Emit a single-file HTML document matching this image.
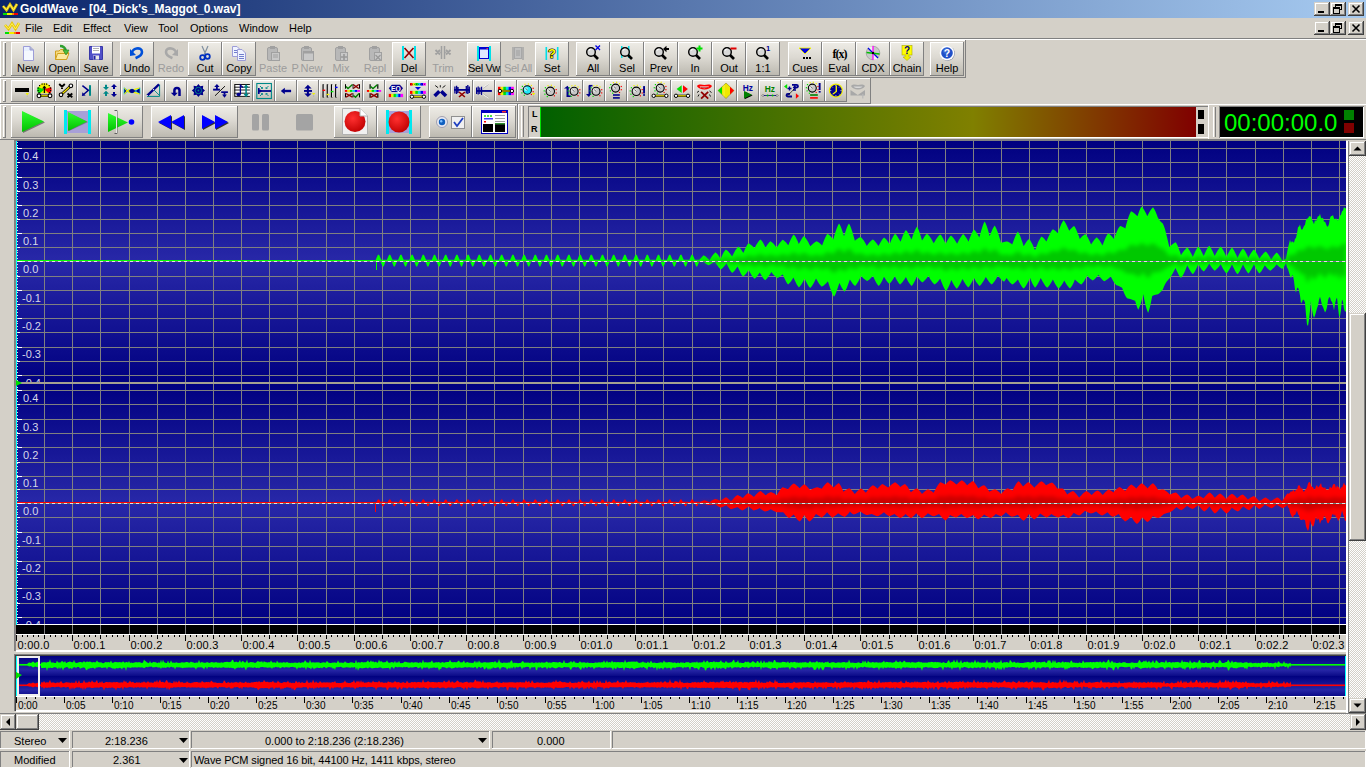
<!DOCTYPE html><html><head><meta charset="utf-8"><style>
*{margin:0;padding:0;box-sizing:border-box}
html,body{width:1366px;height:768px;overflow:hidden;background:#d4d0c8;font-family:"Liberation Sans",sans-serif;font-size:11px;color:#000}
.a{position:absolute}
.t{position:absolute;white-space:nowrap;line-height:1}
svg{position:absolute;overflow:visible}
</style></head><body>
<svg class="a" style="left:0;top:0" width="1366" height="768" viewBox="0 0 1366 768"><defs>
<linearGradient id="bg1" x1="0" y1="0" x2="0" y2="1">
<stop offset="0" stop-color="#000080"/><stop offset="0.5" stop-color="#2828a8"/><stop offset="1" stop-color="#000080"/></linearGradient>
<linearGradient id="ov" x1="0" y1="0" x2="0" y2="1">
<stop offset="0" stop-color="#000080"/><stop offset="0.65" stop-color="#2828a8"/><stop offset="1" stop-color="#000080"/></linearGradient>
<filter id="bl" x="-5%" y="-30%" width="110%" height="160%"><feGaussianBlur stdDeviation="2.2"/></filter>
</defs><rect x="14" y="140" width="1" height="511" fill="#808080"/><rect x="15" y="140" width="1" height="511" fill="#8c8484"/><rect x="14" y="140" width="1332" height="1" fill="#808080"/><rect x="16" y="141" width="1330" height="242" fill="url(#bg1)"/><rect x="16" y="383" width="1330" height="242" fill="url(#bg1)"/><rect x="17" y="148" width="1329" height="1" fill="#808080"/><rect x="17" y="162" width="1329" height="1" fill="#808080"/><rect x="17" y="177" width="1329" height="1" fill="#808080"/><rect x="17" y="191" width="1329" height="1" fill="#808080"/><rect x="17" y="205" width="1329" height="1" fill="#808080"/><rect x="17" y="219" width="1329" height="1" fill="#808080"/><rect x="17" y="233" width="1329" height="1" fill="#808080"/><rect x="17" y="247" width="1329" height="1" fill="#808080"/><rect x="17" y="261" width="1329" height="1" fill="#808080"/><rect x="17" y="276" width="1329" height="1" fill="#808080"/><rect x="17" y="290" width="1329" height="1" fill="#808080"/><rect x="17" y="304" width="1329" height="1" fill="#808080"/><rect x="17" y="318" width="1329" height="1" fill="#808080"/><rect x="17" y="332" width="1329" height="1" fill="#808080"/><rect x="17" y="347" width="1329" height="1" fill="#808080"/><rect x="17" y="361" width="1329" height="1" fill="#808080"/><rect x="17" y="375" width="1329" height="1" fill="#808080"/><rect x="17" y="390" width="1329" height="1" fill="#808080"/><rect x="17" y="404" width="1329" height="1" fill="#808080"/><rect x="17" y="419" width="1329" height="1" fill="#808080"/><rect x="17" y="433" width="1329" height="1" fill="#808080"/><rect x="17" y="447" width="1329" height="1" fill="#808080"/><rect x="17" y="462" width="1329" height="1" fill="#808080"/><rect x="17" y="476" width="1329" height="1" fill="#808080"/><rect x="17" y="489" width="1329" height="1" fill="#808080"/><rect x="17" y="503" width="1329" height="1" fill="#808080"/><rect x="17" y="517" width="1329" height="1" fill="#808080"/><rect x="17" y="532" width="1329" height="1" fill="#808080"/><rect x="17" y="546" width="1329" height="1" fill="#808080"/><rect x="17" y="561" width="1329" height="1" fill="#808080"/><rect x="17" y="574" width="1329" height="1" fill="#808080"/><rect x="17" y="588" width="1329" height="1" fill="#808080"/><rect x="17" y="603" width="1329" height="1" fill="#808080"/><rect x="17" y="617" width="1329" height="1" fill="#808080"/><rect x="16" y="625" width="1330" height="9" fill="#000000"/><rect x="44" y="141" width="1" height="493" fill="#808080"/><rect x="72" y="141" width="1" height="493" fill="#808080"/><rect x="100" y="141" width="1" height="493" fill="#808080"/><rect x="129" y="141" width="1" height="493" fill="#808080"/><rect x="157" y="141" width="1" height="493" fill="#808080"/><rect x="185" y="141" width="1" height="493" fill="#808080"/><rect x="213" y="141" width="1" height="493" fill="#808080"/><rect x="241" y="141" width="1" height="493" fill="#808080"/><rect x="269" y="141" width="1" height="493" fill="#808080"/><rect x="297" y="141" width="1" height="493" fill="#808080"/><rect x="326" y="141" width="1" height="493" fill="#808080"/><rect x="354" y="141" width="1" height="493" fill="#808080"/><rect x="382" y="141" width="1" height="493" fill="#808080"/><rect x="410" y="141" width="1" height="493" fill="#808080"/><rect x="438" y="141" width="1" height="493" fill="#808080"/><rect x="466" y="141" width="1" height="493" fill="#808080"/><rect x="494" y="141" width="1" height="493" fill="#808080"/><rect x="523" y="141" width="1" height="493" fill="#808080"/><rect x="551" y="141" width="1" height="493" fill="#808080"/><rect x="579" y="141" width="1" height="493" fill="#808080"/><rect x="607" y="141" width="1" height="493" fill="#808080"/><rect x="635" y="141" width="1" height="493" fill="#808080"/><rect x="663" y="141" width="1" height="493" fill="#808080"/><rect x="692" y="141" width="1" height="493" fill="#808080"/><rect x="720" y="141" width="1" height="493" fill="#808080"/><rect x="748" y="141" width="1" height="493" fill="#808080"/><rect x="776" y="141" width="1" height="493" fill="#808080"/><rect x="804" y="141" width="1" height="493" fill="#808080"/><rect x="832" y="141" width="1" height="493" fill="#808080"/><rect x="860" y="141" width="1" height="493" fill="#808080"/><rect x="889" y="141" width="1" height="493" fill="#808080"/><rect x="917" y="141" width="1" height="493" fill="#808080"/><rect x="945" y="141" width="1" height="493" fill="#808080"/><rect x="973" y="141" width="1" height="493" fill="#808080"/><rect x="1001" y="141" width="1" height="493" fill="#808080"/><rect x="1029" y="141" width="1" height="493" fill="#808080"/><rect x="1058" y="141" width="1" height="493" fill="#808080"/><rect x="1086" y="141" width="1" height="493" fill="#808080"/><rect x="1114" y="141" width="1" height="493" fill="#808080"/><rect x="1142" y="141" width="1" height="493" fill="#808080"/><rect x="1170" y="141" width="1" height="493" fill="#808080"/><rect x="1198" y="141" width="1" height="493" fill="#808080"/><rect x="1226" y="141" width="1" height="493" fill="#808080"/><rect x="1255" y="141" width="1" height="493" fill="#808080"/><rect x="1283" y="141" width="1" height="493" fill="#808080"/><rect x="1311" y="141" width="1" height="493" fill="#808080"/><rect x="1339" y="141" width="1" height="493" fill="#808080"/><rect x="16" y="382" width="1330" height="2" fill="#a4a090"/><rect x="16" y="624" width="1330" height="1" fill="#ffffff"/><rect x="17" y="260" width="686" height="1.2" fill="#00ff00"/><rect x="17" y="502" width="686" height="1.2" fill="#ff0000"/><polygon points="375.0,261.5 377.9,254.8 379.1,254.8 382.0,261.5" fill="#00ff00"/><polygon points="379.8,259.7 382.6,266.6 383.6,266.6 386.4,259.7" fill="#00ff00"/><polygon points="386.2,261.5 389.1,254.8 390.3,254.8 393.2,261.5" fill="#00ff00"/><polygon points="391.0,259.7 393.8,266.6 394.8,266.6 397.6,259.7" fill="#00ff00"/><polygon points="397.4,261.5 400.3,254.8 401.5,254.8 404.4,261.5" fill="#00ff00"/><polygon points="402.2,259.7 405.0,266.6 406.0,266.6 408.8,259.7" fill="#00ff00"/><polygon points="408.6,261.5 411.5,254.8 412.7,254.8 415.6,261.5" fill="#00ff00"/><polygon points="413.4,259.7 416.2,266.6 417.2,266.6 420.0,259.7" fill="#00ff00"/><polygon points="419.8,261.5 422.7,254.8 423.9,254.8 426.8,261.5" fill="#00ff00"/><polygon points="424.6,259.7 427.4,266.6 428.4,266.6 431.2,259.7" fill="#00ff00"/><polygon points="431.0,261.5 433.9,254.8 435.1,254.8 438.0,261.5" fill="#00ff00"/><polygon points="435.8,259.7 438.6,266.6 439.6,266.6 442.4,259.7" fill="#00ff00"/><polygon points="442.2,261.5 445.1,254.8 446.3,254.8 449.2,261.5" fill="#00ff00"/><polygon points="447.0,259.7 449.8,266.6 450.8,266.6 453.6,259.7" fill="#00ff00"/><polygon points="453.4,261.5 456.3,254.8 457.5,254.8 460.4,261.5" fill="#00ff00"/><polygon points="458.2,259.7 461.0,266.6 462.0,266.6 464.8,259.7" fill="#00ff00"/><polygon points="464.6,261.5 467.5,254.8 468.7,254.8 471.6,261.5" fill="#00ff00"/><polygon points="469.4,259.7 472.2,266.6 473.2,266.6 476.0,259.7" fill="#00ff00"/><polygon points="475.8,261.5 478.7,254.8 479.9,254.8 482.8,261.5" fill="#00ff00"/><polygon points="480.6,259.7 483.4,266.6 484.4,266.6 487.2,259.7" fill="#00ff00"/><polygon points="487.0,261.5 489.9,254.8 491.1,254.8 494.0,261.5" fill="#00ff00"/><polygon points="491.8,259.7 494.6,266.6 495.6,266.6 498.4,259.7" fill="#00ff00"/><polygon points="498.2,261.5 501.1,254.8 502.3,254.8 505.2,261.5" fill="#00ff00"/><polygon points="503.0,259.7 505.8,266.6 506.8,266.6 509.6,259.7" fill="#00ff00"/><polygon points="509.4,261.5 512.3,254.8 513.5,254.8 516.4,261.5" fill="#00ff00"/><polygon points="514.2,259.7 517.0,266.6 518.0,266.6 520.8,259.7" fill="#00ff00"/><polygon points="520.6,261.5 523.5,254.8 524.7,254.8 527.6,261.5" fill="#00ff00"/><polygon points="525.4,259.7 528.2,266.6 529.2,266.6 532.0,259.7" fill="#00ff00"/><polygon points="531.8,261.5 534.7,254.8 535.9,254.8 538.8,261.5" fill="#00ff00"/><polygon points="536.6,259.7 539.4,266.6 540.4,266.6 543.2,259.7" fill="#00ff00"/><polygon points="543.0,261.5 545.9,254.8 547.1,254.8 550.0,261.5" fill="#00ff00"/><polygon points="547.8,259.7 550.6,266.6 551.6,266.6 554.4,259.7" fill="#00ff00"/><polygon points="554.2,261.5 557.1,254.8 558.3,254.8 561.2,261.5" fill="#00ff00"/><polygon points="559.0,259.7 561.8,266.6 562.8,266.6 565.6,259.7" fill="#00ff00"/><polygon points="565.4,261.5 568.3,254.8 569.5,254.8 572.4,261.5" fill="#00ff00"/><polygon points="570.2,259.7 573.0,266.6 574.0,266.6 576.8,259.7" fill="#00ff00"/><polygon points="576.6,261.5 579.5,254.8 580.7,254.8 583.6,261.5" fill="#00ff00"/><polygon points="581.4,259.7 584.2,266.6 585.2,266.6 588.0,259.7" fill="#00ff00"/><polygon points="587.8,261.5 590.7,254.8 591.9,254.8 594.8,261.5" fill="#00ff00"/><polygon points="592.6,259.7 595.4,266.6 596.4,266.6 599.2,259.7" fill="#00ff00"/><polygon points="599.0,261.5 601.9,254.8 603.1,254.8 606.0,261.5" fill="#00ff00"/><polygon points="603.8,259.7 606.6,266.6 607.6,266.6 610.4,259.7" fill="#00ff00"/><polygon points="610.2,261.5 613.1,254.8 614.3,254.8 617.2,261.5" fill="#00ff00"/><polygon points="615.0,259.7 617.8,266.6 618.8,266.6 621.6,259.7" fill="#00ff00"/><polygon points="621.4,261.5 624.3,254.8 625.5,254.8 628.4,261.5" fill="#00ff00"/><polygon points="626.2,259.7 629.0,266.6 630.0,266.6 632.8,259.7" fill="#00ff00"/><polygon points="632.6,261.5 635.5,254.8 636.7,254.8 639.6,261.5" fill="#00ff00"/><polygon points="637.4,259.7 640.2,266.6 641.2,266.6 644.0,259.7" fill="#00ff00"/><polygon points="643.8,261.5 646.7,254.8 647.9,254.8 650.8,261.5" fill="#00ff00"/><polygon points="648.6,259.7 651.4,266.6 652.4,266.6 655.2,259.7" fill="#00ff00"/><polygon points="655.0,261.5 657.9,254.8 659.1,254.8 662.0,261.5" fill="#00ff00"/><polygon points="659.8,259.7 662.6,266.6 663.6,266.6 666.4,259.7" fill="#00ff00"/><polygon points="666.2,261.5 669.1,254.8 670.3,254.8 673.2,261.5" fill="#00ff00"/><polygon points="671.0,259.7 673.8,266.6 674.8,266.6 677.6,259.7" fill="#00ff00"/><polygon points="677.4,261.5 680.3,254.8 681.5,254.8 684.4,261.5" fill="#00ff00"/><polygon points="682.2,259.7 685.0,266.6 686.0,266.6 688.8,259.7" fill="#00ff00"/><polygon points="688.6,261.5 691.5,254.8 692.7,254.8 695.6,261.5" fill="#00ff00"/><polygon points="693.4,259.7 696.2,266.6 697.2,266.6 700.0,259.7" fill="#00ff00"/><polygon points="375.5,503.5 377.9,499.6 379.1,499.6 381.5,503.5" fill="#ff0000"/><polygon points="380.3,501.7 382.6,506.2 383.6,506.2 385.9,501.7" fill="#ff0000"/><polygon points="386.7,503.5 389.1,499.6 390.3,499.6 392.7,503.5" fill="#ff0000"/><polygon points="391.5,501.7 393.8,506.2 394.8,506.2 397.1,501.7" fill="#ff0000"/><polygon points="397.9,503.5 400.3,499.6 401.5,499.6 403.9,503.5" fill="#ff0000"/><polygon points="402.7,501.7 405.0,506.2 406.0,506.2 408.3,501.7" fill="#ff0000"/><polygon points="409.1,503.5 411.5,499.6 412.7,499.6 415.1,503.5" fill="#ff0000"/><polygon points="413.9,501.7 416.2,506.2 417.2,506.2 419.5,501.7" fill="#ff0000"/><polygon points="420.3,503.5 422.7,499.6 423.9,499.6 426.3,503.5" fill="#ff0000"/><polygon points="425.1,501.7 427.4,506.2 428.4,506.2 430.7,501.7" fill="#ff0000"/><polygon points="431.5,503.5 433.9,499.6 435.1,499.6 437.5,503.5" fill="#ff0000"/><polygon points="436.3,501.7 438.6,506.2 439.6,506.2 441.9,501.7" fill="#ff0000"/><polygon points="442.7,503.5 445.1,499.6 446.3,499.6 448.7,503.5" fill="#ff0000"/><polygon points="447.5,501.7 449.8,506.2 450.8,506.2 453.1,501.7" fill="#ff0000"/><polygon points="453.9,503.5 456.3,499.6 457.5,499.6 459.9,503.5" fill="#ff0000"/><polygon points="458.7,501.7 461.0,506.2 462.0,506.2 464.3,501.7" fill="#ff0000"/><polygon points="465.1,503.5 467.5,499.6 468.7,499.6 471.1,503.5" fill="#ff0000"/><polygon points="469.9,501.7 472.2,506.2 473.2,506.2 475.5,501.7" fill="#ff0000"/><polygon points="476.3,503.5 478.7,499.6 479.9,499.6 482.3,503.5" fill="#ff0000"/><polygon points="481.1,501.7 483.4,506.2 484.4,506.2 486.7,501.7" fill="#ff0000"/><polygon points="487.5,503.5 489.9,499.6 491.1,499.6 493.5,503.5" fill="#ff0000"/><polygon points="492.3,501.7 494.6,506.2 495.6,506.2 497.9,501.7" fill="#ff0000"/><polygon points="498.7,503.5 501.1,499.6 502.3,499.6 504.7,503.5" fill="#ff0000"/><polygon points="503.5,501.7 505.8,506.2 506.8,506.2 509.1,501.7" fill="#ff0000"/><polygon points="509.9,503.5 512.3,499.6 513.5,499.6 515.9,503.5" fill="#ff0000"/><polygon points="514.7,501.7 517.0,506.2 518.0,506.2 520.3,501.7" fill="#ff0000"/><polygon points="521.1,503.5 523.5,499.6 524.7,499.6 527.1,503.5" fill="#ff0000"/><polygon points="525.9,501.7 528.2,506.2 529.2,506.2 531.5,501.7" fill="#ff0000"/><polygon points="532.3,503.5 534.7,499.6 535.9,499.6 538.3,503.5" fill="#ff0000"/><polygon points="537.1,501.7 539.4,506.2 540.4,506.2 542.7,501.7" fill="#ff0000"/><polygon points="543.5,503.5 545.9,499.6 547.1,499.6 549.5,503.5" fill="#ff0000"/><polygon points="548.3,501.7 550.6,506.2 551.6,506.2 553.9,501.7" fill="#ff0000"/><polygon points="554.7,503.5 557.1,499.6 558.3,499.6 560.7,503.5" fill="#ff0000"/><polygon points="559.5,501.7 561.8,506.2 562.8,506.2 565.1,501.7" fill="#ff0000"/><polygon points="565.9,503.5 568.3,499.6 569.5,499.6 571.9,503.5" fill="#ff0000"/><polygon points="570.7,501.7 573.0,506.2 574.0,506.2 576.3,501.7" fill="#ff0000"/><polygon points="577.1,503.5 579.5,499.6 580.7,499.6 583.1,503.5" fill="#ff0000"/><polygon points="581.9,501.7 584.2,506.2 585.2,506.2 587.5,501.7" fill="#ff0000"/><polygon points="588.3,503.5 590.7,499.6 591.9,499.6 594.3,503.5" fill="#ff0000"/><polygon points="593.1,501.7 595.4,506.2 596.4,506.2 598.7,501.7" fill="#ff0000"/><polygon points="599.5,503.5 601.9,499.6 603.1,499.6 605.5,503.5" fill="#ff0000"/><polygon points="604.3,501.7 606.6,506.2 607.6,506.2 609.9,501.7" fill="#ff0000"/><polygon points="610.7,503.5 613.1,499.6 614.3,499.6 616.7,503.5" fill="#ff0000"/><polygon points="615.5,501.7 617.8,506.2 618.8,506.2 621.1,501.7" fill="#ff0000"/><polygon points="621.9,503.5 624.3,499.6 625.5,499.6 627.9,503.5" fill="#ff0000"/><polygon points="626.7,501.7 629.0,506.2 630.0,506.2 632.3,501.7" fill="#ff0000"/><polygon points="633.1,503.5 635.5,499.6 636.7,499.6 639.1,503.5" fill="#ff0000"/><polygon points="637.9,501.7 640.2,506.2 641.2,506.2 643.5,501.7" fill="#ff0000"/><polygon points="644.3,503.5 646.7,499.6 647.9,499.6 650.3,503.5" fill="#ff0000"/><polygon points="649.1,501.7 651.4,506.2 652.4,506.2 654.7,501.7" fill="#ff0000"/><polygon points="655.5,503.5 657.9,499.6 659.1,499.6 661.5,503.5" fill="#ff0000"/><polygon points="660.3,501.7 662.6,506.2 663.6,506.2 665.9,501.7" fill="#ff0000"/><polygon points="666.7,503.5 669.1,499.6 670.3,499.6 672.7,503.5" fill="#ff0000"/><polygon points="671.5,501.7 673.8,506.2 674.8,506.2 677.1,501.7" fill="#ff0000"/><polygon points="677.9,503.5 680.3,499.6 681.5,499.6 683.9,503.5" fill="#ff0000"/><polygon points="682.7,501.7 685.0,506.2 686.0,506.2 688.3,501.7" fill="#ff0000"/><polygon points="689.1,503.5 691.5,499.6 692.7,499.6 695.1,503.5" fill="#ff0000"/><polygon points="693.9,501.7 696.2,506.2 697.2,506.2 699.5,501.7" fill="#ff0000"/><rect x="376" y="261" width="1" height="9" fill="#00ff00"/><rect x="375" y="503" width="1" height="9" fill="#ff0000"/><polygon points="699.0,260.2 703.6,255.2 704.8,255.9 706.0,256.8 707.1,257.9 708.3,259.1 709.5,260.4 710.5,258.7 711.5,257.1 712.5,255.6 713.5,254.3 714.5,253.2 715.5,252.3 716.5,253.2 717.6,254.3 718.6,255.7 719.6,257.3 720.6,258.9 721.7,256.5 722.7,254.3 723.7,252.3 724.8,250.7 725.8,249.4 726.8,250.2 727.9,251.1 728.9,252.3 730.0,253.6 731.0,255.0 732.1,256.4 733.1,254.4 734.2,252.4 735.2,250.6 736.3,249.0 737.3,247.7 738.4,246.6 739.4,247.4 740.4,248.5 741.4,249.9 742.4,251.4 743.4,252.9 744.4,250.5 745.4,248.3 746.4,246.2 747.4,244.6 748.4,243.3 749.4,243.8 750.4,244.5 751.4,245.2 752.4,246.1 753.4,247.0 754.5,248.0 755.5,246.2 756.5,244.5 757.5,242.9 758.5,241.5 759.5,240.3 760.5,239.4 761.5,240.5 762.5,241.8 763.5,243.5 764.5,245.4 765.5,247.4 766.5,245.9 767.5,244.4 768.5,243.2 769.5,242.1 770.5,241.3 771.5,242.0 772.5,242.8 773.6,243.8 774.6,245.0 775.6,246.2 776.6,247.5 777.7,245.9 778.7,244.4 779.7,242.9 780.8,241.7 781.8,240.6 782.8,239.8 783.9,240.5 785.0,241.5 786.1,242.6 787.2,243.9 788.3,245.2 789.4,242.5 790.5,240.0 791.6,237.7 792.7,235.8 793.8,234.4 794.8,235.7 795.8,237.3 796.8,239.4 797.8,241.6 798.8,244.0 799.9,242.0 800.9,240.2 801.9,238.5 802.9,237.1 803.9,236.1 805.0,237.2 806.0,238.6 807.1,240.2 808.2,242.1 809.3,244.2 810.3,246.3 811.4,245.2 812.5,244.2 813.6,243.3 814.6,242.5 815.7,241.8 816.8,241.3 817.9,241.9 818.9,242.6 820.0,243.5 821.1,244.4 822.1,245.5 823.2,242.6 824.3,239.8 825.4,237.3 826.4,235.3 827.5,233.7 828.6,234.5 829.8,235.5 831.0,236.7 832.1,238.1 833.2,239.6 834.4,235.6 835.5,231.7 836.7,228.4 837.9,225.5 839.0,223.4 840.0,225.1 841.0,227.3 842.0,230.0 843.0,233.0 844.0,236.2 845.0,233.0 846.0,230.0 847.0,227.3 848.0,225.1 849.0,223.4 850.2,225.7 851.3,228.7 852.5,232.3 853.7,236.4 854.9,240.7 856.0,239.8 857.2,238.9 858.4,238.1 859.5,237.5 860.7,237.0 861.7,238.0 862.7,239.2 863.8,240.6 864.8,242.3 865.8,244.1 866.8,246.0 867.8,244.6 868.8,243.3 869.8,242.1 870.9,241.0 871.9,240.1 872.9,239.4 874.0,240.3 875.1,241.5 876.3,242.9 877.4,244.4 878.5,246.1 879.6,244.0 880.7,241.9 881.9,240.1 883.0,238.6 884.1,237.5 885.2,238.4 886.3,239.6 887.4,241.0 888.5,242.6 889.6,244.2 890.7,241.6 891.8,239.1 892.9,236.9 894.0,235.1 895.1,233.7 896.2,234.8 897.3,236.2 898.3,237.9 899.4,239.8 900.5,241.8 901.6,238.9 902.7,236.1 903.7,233.7 904.8,231.6 905.9,230.1 907.0,231.3 908.1,233.0 909.2,234.9 910.3,237.1 911.5,239.4 912.6,236.2 913.7,233.2 914.8,230.5 915.9,228.2 917.0,226.5 918.0,228.4 919.0,230.8 920.0,233.8 921.0,237.1 922.0,240.6 923.1,238.9 924.1,237.3 925.1,235.8 926.1,234.6 927.1,233.7 928.2,234.7 929.3,236.0 930.4,237.6 931.5,239.3 932.6,241.2 933.7,243.2 934.8,241.4 935.9,239.6 937.0,238.0 938.1,236.5 939.2,235.3 940.3,234.4 941.4,235.6 942.4,237.3 943.5,239.2 944.6,241.5 945.6,243.8 946.7,241.7 947.8,239.8 948.9,238.0 949.9,236.6 951.0,235.5 952.0,236.4 953.0,237.5 954.0,238.8 955.1,240.4 956.1,242.0 957.1,243.7 958.1,241.7 959.1,239.8 960.2,238.0 961.2,236.4 962.2,235.1 963.2,234.1 964.3,235.1 965.3,236.4 966.4,238.0 967.5,239.8 968.5,241.7 969.6,238.6 970.7,235.7 971.8,233.2 972.8,231.0 973.9,229.4 975.0,230.5 976.1,231.9 977.1,233.6 978.2,235.5 979.3,237.5 980.4,233.5 981.5,229.8 982.5,226.4 983.6,223.6 984.7,221.5 985.7,223.4 986.7,226.0 987.7,229.1 988.7,232.6 989.7,236.2 990.7,233.6 991.7,231.0 992.7,228.8 993.7,226.9 994.7,225.5 995.8,227.4 996.8,229.7 997.9,232.5 998.9,235.7 1000.0,239.2 1001.0,242.8 1002.0,242.5 1003.1,242.2 1004.1,242.0 1005.2,241.7 1006.2,241.6 1007.3,241.4 1008.5,241.9 1009.8,242.7 1011.0,243.6 1012.2,244.6 1013.3,241.4 1014.5,238.3 1015.6,235.6 1016.8,233.3 1017.9,231.6 1019.0,233.5 1020.2,236.1 1021.3,239.2 1022.5,242.6 1023.6,246.3 1024.7,244.5 1025.8,242.7 1026.8,241.2 1027.9,239.9 1029.0,238.9 1030.0,240.1 1031.0,241.7 1032.0,243.5 1033.0,245.6 1034.0,247.9 1035.0,250.3 1036.1,247.4 1037.2,244.7 1038.2,242.1 1039.3,239.9 1040.4,238.0 1041.5,236.5 1042.7,237.3 1044.0,238.5 1045.2,239.9 1046.4,241.4 1047.5,238.9 1048.6,236.4 1049.7,234.2 1050.7,232.2 1051.8,230.5 1052.9,229.2 1054.1,229.9 1055.3,230.8 1056.6,232.0 1057.8,233.2 1058.9,230.0 1060.1,226.9 1061.2,224.2 1062.4,221.9 1063.5,220.2 1064.6,221.6 1065.8,223.4 1066.9,225.7 1068.1,228.2 1069.2,230.8 1070.4,229.3 1071.7,227.9 1072.9,226.7 1074.1,225.9 1075.2,227.6 1076.4,229.9 1077.5,232.7 1078.7,235.7 1079.8,239.0 1080.9,237.8 1082.0,236.6 1083.2,235.6 1084.3,234.7 1085.4,234.1 1086.5,235.5 1087.7,237.3 1088.8,239.5 1090.0,242.0 1091.1,244.6 1092.2,242.8 1093.4,241.1 1094.5,239.5 1095.7,238.3 1096.8,237.3 1097.9,238.4 1099.1,239.8 1100.2,241.5 1101.4,243.5 1102.5,245.5 1103.6,242.4 1104.8,239.5 1105.9,237.0 1107.1,234.8 1108.2,233.2 1109.3,234.0 1110.5,235.0 1111.6,236.2 1112.8,237.6 1113.9,239.0 1114.9,236.3 1116.0,233.7 1117.0,231.2 1118.0,229.1 1119.1,227.3 1120.1,225.9 1121.1,226.2 1122.2,226.7 1123.2,227.2 1124.3,227.8 1125.3,228.4 1126.4,224.1 1127.6,220.1 1128.7,216.5 1129.9,213.6 1131.0,211.3 1132.1,211.8 1133.2,212.5 1134.2,213.3 1135.3,214.2 1136.4,215.2 1137.5,216.2 1138.5,213.2 1139.5,210.4 1140.6,208.1 1141.6,206.4 1142.7,207.7 1143.9,209.4 1145.0,211.5 1146.2,213.8 1147.3,216.2 1148.4,214.0 1149.6,211.8 1150.7,210.0 1151.9,208.4 1153.0,207.2 1154.2,209.0 1155.5,211.5 1156.7,214.5 1157.9,217.8 1159.1,219.6 1160.3,221.2 1161.6,222.5 1162.8,223.5 1163.9,226.0 1165.0,229.2 1166.0,233.1 1167.1,237.5 1168.2,242.2 1169.3,247.1 1170.4,246.1 1171.5,245.1 1172.5,244.2 1173.6,243.4 1174.7,242.7 1175.8,242.2 1176.8,243.9 1177.9,246.2 1178.9,248.9 1180.0,252.0 1181.0,255.2 1182.0,253.6 1183.1,252.1 1184.2,250.6 1185.2,249.4 1186.2,248.3 1187.3,247.5 1188.4,248.8 1189.5,250.4 1190.6,252.4 1191.7,254.6 1192.8,257.0 1193.9,254.4 1195.0,252.0 1196.1,249.8 1197.2,248.0 1198.3,246.6 1199.4,247.9 1200.5,249.5 1201.5,251.5 1202.6,253.7 1203.7,256.1 1204.8,253.5 1205.9,251.1 1207.0,248.9 1208.1,247.1 1209.2,245.7 1210.3,247.1 1211.4,248.9 1212.5,251.1 1213.6,253.5 1214.7,256.1 1215.7,254.1 1216.7,252.2 1217.7,250.5 1218.7,248.9 1219.7,247.6 1220.7,246.6 1221.9,248.0 1223.0,249.8 1224.2,252.0 1225.3,254.4 1226.5,257.0 1227.6,254.6 1228.7,252.4 1229.8,250.4 1230.9,248.8 1232.0,247.5 1233.1,248.9 1234.2,250.7 1235.3,252.9 1236.4,255.3 1237.5,257.9 1238.6,255.5 1239.7,253.3 1240.8,251.3 1241.9,249.7 1243.0,248.4 1244.1,249.7 1245.2,251.3 1246.2,253.3 1247.3,255.5 1248.4,257.9 1249.5,255.8 1250.6,253.8 1251.7,252.0 1252.8,250.5 1253.9,249.4 1255.0,250.6 1256.1,252.3 1257.2,254.2 1258.3,256.5 1259.4,258.8 1260.5,257.3 1261.5,255.8 1262.6,254.5 1263.6,253.3 1264.7,252.3 1265.7,251.5 1266.8,252.6 1267.9,254.0 1269.0,255.7 1270.1,257.7 1271.2,259.7 1272.3,257.9 1273.4,256.2 1274.5,254.7 1275.6,253.5 1276.7,252.5 1277.8,253.6 1278.9,255.0 1280.0,256.7 1281.1,258.7 1282.2,260.7 1283.5,260.1 1284.7,259.6 1286.0,259.0 1287.2,251.9 1288.0,247.7 1289.0,243.7 1290.0,239.8 1291.0,243.1 1292.0,240.9 1293.0,242.2 1294.0,242.5 1295.0,239.1 1296.0,237.7 1297.0,233.3 1298.0,227.2 1299.0,226.6 1300.0,224.5 1301.0,228.8 1302.0,229.9 1303.0,228.2 1304.0,225.9 1305.0,224.7 1306.0,219.7 1307.0,218.7 1308.0,218.3 1309.0,216.6 1310.0,215.9 1311.0,217.1 1312.0,219.8 1313.0,221.8 1314.0,224.2 1315.0,219.8 1316.0,221.6 1317.0,218.7 1318.0,216.1 1319.0,216.6 1320.0,213.7 1321.0,217.7 1322.0,218.4 1323.0,217.6 1324.0,222.1 1325.0,221.5 1326.0,224.0 1327.0,226.6 1328.0,226.5 1329.0,224.1 1330.0,218.1 1331.0,216.1 1332.0,216.1 1333.0,215.0 1334.0,218.5 1335.0,219.6 1336.0,218.2 1337.0,219.8 1338.0,220.4 1339.0,218.4 1340.0,215.8 1341.0,214.7 1342.0,211.2 1343.0,210.5 1344.0,207.1 1345.0,208.2 1346.0,208.2 1346.0,311.4 1345.0,311.4 1344.0,309.1 1343.0,301.4 1342.0,299.6 1341.0,309.7 1340.0,316.3 1339.0,316.2 1338.0,307.0 1337.0,297.6 1336.0,299.8 1335.0,303.7 1334.0,310.6 1333.0,305.0 1332.0,302.0 1331.0,300.8 1330.0,297.2 1329.0,297.4 1328.0,300.2 1327.0,307.2 1326.0,310.8 1325.0,312.5 1324.0,309.7 1323.0,306.9 1322.0,305.3 1321.0,300.6 1320.0,296.8 1319.0,299.9 1318.0,305.6 1317.0,308.3 1316.0,312.0 1315.0,315.4 1314.0,318.0 1313.0,314.9 1312.0,309.8 1311.0,301.1 1310.0,310.4 1309.0,319.6 1308.0,326.0 1307.0,324.6 1306.0,314.6 1305.0,302.5 1304.0,300.3 1303.0,299.6 1302.0,302.0 1301.0,303.4 1300.0,295.5 1299.0,290.5 1298.0,287.4 1297.0,288.3 1296.0,292.6 1295.0,289.7 1294.0,280.9 1293.0,275.6 1292.0,275.6 1291.0,278.2 1290.0,275.8 1289.0,272.4 1288.0,269.0 1287.1,267.4 1286.0,263.0 1284.7,265.4 1283.5,267.5 1282.2,268.9 1281.1,268.3 1280.0,267.5 1278.9,266.5 1277.8,265.4 1276.7,264.3 1275.6,265.6 1274.6,266.9 1273.5,268.1 1272.4,269.1 1271.4,270.0 1270.3,270.7 1269.2,270.0 1268.1,269.0 1267.0,267.9 1265.9,266.6 1264.8,265.2 1263.7,267.2 1262.6,269.2 1261.6,270.9 1260.5,272.3 1259.4,273.4 1258.3,272.2 1257.2,270.6 1256.1,268.7 1255.0,266.6 1253.9,264.3 1252.8,266.6 1251.7,268.7 1250.6,270.6 1249.5,272.2 1248.4,273.4 1247.3,272.2 1246.2,270.6 1245.2,268.7 1244.1,266.6 1243.0,264.3 1241.9,266.8 1240.8,269.1 1239.7,271.2 1238.6,273.0 1237.5,274.3 1236.4,273.0 1235.3,271.2 1234.2,269.1 1233.1,266.8 1232.0,264.3 1230.9,266.6 1229.8,268.7 1228.7,270.6 1227.6,272.2 1226.5,273.4 1225.3,272.2 1224.2,270.6 1223.0,268.7 1221.9,266.6 1220.7,264.3 1219.7,265.6 1218.7,266.9 1217.7,268.1 1216.7,269.1 1215.7,270.0 1214.7,270.7 1213.6,269.7 1212.5,268.5 1211.4,266.9 1210.3,265.2 1209.2,263.4 1208.1,265.4 1207.0,267.4 1205.9,269.1 1204.8,270.5 1203.7,271.6 1202.6,270.6 1201.5,269.4 1200.5,267.8 1199.4,266.1 1198.3,264.3 1197.2,266.8 1196.1,269.1 1195.0,271.2 1193.9,273.0 1192.8,274.3 1191.7,273.1 1190.6,271.5 1189.5,269.6 1188.4,267.5 1187.3,265.2 1186.2,267.9 1185.2,270.4 1184.2,272.8 1183.1,274.9 1182.0,276.6 1181.0,278.0 1179.9,276.7 1178.8,274.9 1177.7,272.8 1176.6,270.5 1175.5,268.0 1174.4,270.2 1173.2,272.4 1172.1,274.4 1171.0,276.3 1169.9,277.9 1168.7,279.3 1167.6,280.4 1166.4,281.9 1165.2,284.1 1164.0,286.6 1162.8,289.4 1161.6,290.9 1160.3,292.3 1159.1,293.5 1157.9,294.3 1156.8,294.5 1155.6,294.8 1154.5,295.1 1153.3,295.5 1152.2,295.9 1151.2,301.2 1150.2,306.0 1149.1,310.1 1148.1,313.0 1146.9,309.8 1145.6,305.4 1144.4,300.0 1143.2,294.2 1142.0,299.0 1140.8,303.4 1139.5,307.0 1138.3,309.7 1137.2,307.5 1136.2,304.4 1135.1,300.8 1134.1,300.4 1133.1,300.0 1132.1,299.7 1131.0,299.3 1130.0,299.0 1129.0,298.7 1128.0,298.5 1127.0,298.3 1125.8,296.5 1124.5,294.0 1123.3,291.1 1122.1,287.8 1121.0,287.2 1119.8,286.6 1118.7,286.1 1117.5,285.6 1116.4,285.3 1115.3,284.1 1114.1,282.6 1113.0,280.7 1111.8,278.6 1110.7,276.4 1109.6,277.4 1108.5,278.4 1107.5,279.3 1106.4,280.1 1105.3,280.8 1104.2,281.3 1103.1,280.4 1101.9,279.3 1100.8,277.9 1099.6,276.4 1098.5,274.8 1097.4,276.2 1096.2,277.5 1095.1,278.7 1093.9,279.7 1092.8,280.4 1091.7,279.8 1090.5,278.9 1089.4,277.9 1088.2,276.8 1087.1,275.6 1086.0,277.8 1084.8,279.9 1083.7,281.8 1082.5,283.3 1081.4,284.5 1080.3,284.0 1079.2,283.3 1078.2,282.5 1077.1,281.6 1076.0,280.6 1074.9,279.6 1073.7,282.4 1072.5,284.9 1071.2,287.1 1070.0,288.6 1068.9,287.5 1067.7,286.1 1066.6,284.4 1065.4,282.4 1064.3,280.4 1063.2,282.4 1062.0,284.4 1060.9,286.1 1059.7,287.5 1058.6,288.6 1057.5,287.4 1056.3,285.8 1055.2,284.0 1054.0,281.8 1052.9,279.6 1051.8,281.6 1050.6,283.6 1049.5,285.3 1048.3,286.7 1047.2,287.8 1046.1,286.8 1045.0,285.4 1044.0,283.8 1042.9,282.0 1041.8,280.0 1040.7,278.0 1039.6,280.4 1038.4,282.7 1037.3,284.8 1036.1,286.5 1035.0,287.8 1033.8,286.1 1032.5,283.8 1031.3,281.0 1030.1,278.0 1029.0,280.2 1027.9,282.3 1026.8,284.3 1025.8,286.0 1024.7,287.5 1023.6,288.6 1022.5,287.4 1021.3,285.8 1020.2,284.0 1019.0,281.8 1017.9,279.6 1016.8,280.8 1015.6,282.0 1014.5,283.0 1013.3,283.9 1012.2,284.5 1011.1,283.6 1009.9,282.5 1008.8,281.1 1007.6,279.6 1006.5,278.0 1005.2,280.2 1004.0,281.7 1003.0,281.0 1002.0,280.2 1001.0,279.2 999.9,278.1 998.9,276.9 997.9,275.6 996.9,277.4 995.9,279.2 994.8,280.9 993.8,282.3 992.8,283.5 991.8,284.5 990.8,283.7 989.8,282.7 988.8,281.5 987.8,280.1 986.8,278.6 985.8,277.0 984.7,278.9 983.7,280.7 982.7,282.3 981.7,283.8 980.7,285.0 979.7,286.0 978.6,284.9 977.4,283.5 976.2,281.9 975.1,280.0 974.0,278.0 972.8,280.3 971.7,282.5 970.5,284.5 969.4,286.2 968.2,287.4 967.1,286.3 965.9,284.8 964.8,283.0 963.6,281.0 962.5,278.9 961.3,281.4 960.2,283.7 959.0,285.8 957.9,287.5 956.7,288.8 955.6,287.6 954.6,286.1 953.5,284.3 952.4,282.2 951.4,280.1 950.3,282.8 949.2,285.4 948.1,287.7 947.1,289.6 946.0,291.0 944.9,289.4 943.7,287.2 942.5,284.6 941.4,281.7 940.2,278.7 939.1,280.1 938.0,281.5 936.8,282.7 935.6,283.7 934.5,284.5 933.5,283.6 932.5,282.4 931.5,281.0 930.4,279.4 929.4,277.6 928.4,275.8 927.4,277.2 926.4,278.5 925.3,279.7 924.3,280.8 923.3,281.7 922.3,282.4 921.2,281.6 920.2,280.5 919.1,279.3 918.0,277.8 917.0,276.3 915.9,278.7 914.8,281.0 913.7,283.0 912.7,284.7 911.6,286.0 910.5,284.8 909.3,283.2 908.1,281.4 907.0,279.2 905.9,277.0 904.7,278.9 903.6,280.6 902.4,282.2 901.2,283.5 900.1,284.5 899.0,283.4 898.0,282.0 896.9,280.3 895.8,278.3 894.8,276.3 893.7,278.2 892.6,279.9 891.5,281.5 890.5,282.8 889.4,283.8 888.3,282.9 887.3,281.7 886.2,280.2 885.1,278.5 884.0,276.8 883.0,279.1 881.9,281.2 880.8,283.2 879.8,284.8 878.7,286.0 877.6,284.7 876.4,282.9 875.2,280.8 874.1,278.4 873.0,275.9 871.8,277.1 870.7,278.3 869.5,279.4 868.4,280.3 867.2,281.0 866.2,280.4 865.2,279.7 864.2,278.9 863.1,278.0 862.1,276.9 861.1,275.9 860.1,278.0 859.1,280.0 858.0,281.9 857.0,283.5 856.0,284.9 855.0,286.0 854.0,285.1 852.9,284.0 851.9,282.6 850.9,281.0 849.9,279.4 848.8,282.4 847.8,285.3 846.8,287.9 845.7,290.1 844.7,291.7 843.6,290.5 842.6,289.0 841.5,287.2 840.4,285.1 839.4,282.9 838.3,286.3 837.2,289.6 836.1,292.5 835.1,294.9 834.0,296.7 833.0,295.0 832.0,292.9 831.0,290.4 829.9,287.6 828.9,284.5 827.9,281.3 826.9,282.4 825.9,283.5 824.8,284.5 823.8,285.4 822.8,286.1 821.8,286.7 820.6,285.6 819.5,284.2 818.3,282.4 817.2,280.5 816.0,278.4 814.9,280.8 813.8,283.1 812.6,285.1 811.4,286.8 810.3,288.1 809.2,286.9 808.0,285.2 806.9,283.2 805.7,281.0 804.6,278.7 803.5,280.8 802.3,282.9 801.2,284.7 800.0,286.2 798.9,287.4 797.8,286.1 796.7,284.4 795.7,282.3 794.6,279.9 793.5,277.5 792.4,279.2 791.3,280.9 790.3,282.3 789.2,283.6 788.1,284.5 787.0,283.2 786.0,281.4 784.9,279.3 783.8,276.9 782.8,274.4 781.7,275.3 780.6,276.1 779.5,276.9 778.5,277.5 777.4,278.0 776.4,277.4 775.4,276.5 774.3,275.5 773.3,274.4 772.3,273.2 771.3,272.0 770.3,273.7 769.3,275.3 768.2,276.8 767.2,278.2 766.2,279.3 765.2,280.2 764.1,279.2 763.0,277.9 762.0,276.3 760.9,274.5 759.8,272.6 758.7,274.1 757.6,275.6 756.6,276.9 755.5,278.0 754.4,278.8 753.3,277.6 752.1,276.1 751.0,274.2 749.8,272.1 748.7,269.9 747.6,271.6 746.4,273.2 745.3,274.6 744.1,275.7 743.0,276.6 741.9,275.3 740.8,273.5 739.8,271.3 738.7,268.9 737.6,266.4 736.5,268.0 735.4,269.6 734.4,271.0 733.3,272.1 732.2,273.0 731.1,271.7 729.9,270.0 728.8,267.9 727.6,265.6 726.5,263.2 725.4,264.8 724.2,266.2 723.1,267.6 721.9,268.7 720.8,269.5 719.8,268.6 718.8,267.5 717.8,266.1 716.7,264.5 715.7,262.9 714.7,261.1 713.7,262.0 712.7,262.8 711.7,263.5 710.6,264.2 709.6,264.8 708.6,265.2 707.6,264.8 706.6,264.2 705.6,263.4 704.6,262.6 703.6,261.8 702.5,261.8 701.3,261.8 700.2,261.8 699.0,261.8 699.0,261.8" fill="#00ff00"/><polygon points="699.0,260.7 703.6,259.1 704.8,259.3 706.0,259.6 707.1,260.0 708.3,260.4 709.5,260.8 710.5,260.2 711.5,259.7 712.5,259.2 713.5,258.8 714.5,258.4 715.5,258.1 716.5,258.4 717.6,258.8 718.6,259.3 719.6,259.8 720.6,260.3 721.7,259.5 722.7,258.8 723.7,258.1 724.8,257.6 725.8,257.2 726.8,257.4 727.9,257.7 728.9,258.1 730.0,258.5 731.0,259.0 732.1,259.5 733.1,258.8 734.2,258.2 735.2,257.6 736.3,257.0 737.3,256.6 738.4,256.2 739.4,256.5 740.4,256.9 741.4,257.3 742.4,257.8 743.4,258.3 744.4,257.5 745.4,256.8 746.4,256.1 747.4,255.6 748.4,255.2 749.4,255.3 750.4,255.5 751.4,255.8 752.4,256.1 753.4,256.4 754.5,256.7 755.5,256.1 756.5,255.6 757.5,255.0 758.5,254.6 759.5,254.2 760.5,253.9 761.5,254.2 762.5,254.7 763.5,255.2 764.5,255.8 765.5,256.5 766.5,256.0 767.5,255.5 768.5,255.1 769.5,254.8 770.5,254.5 771.5,254.7 772.5,255.0 773.6,255.3 774.6,255.7 775.6,256.1 776.6,256.5 777.7,256.0 778.7,255.5 779.7,255.0 780.8,254.6 781.8,254.3 782.8,254.0 783.9,254.2 785.0,254.6 786.1,254.9 787.2,255.3 788.3,255.8 789.4,254.9 790.5,254.1 791.6,253.3 792.7,252.7 793.8,252.2 794.8,252.6 795.8,253.2 796.8,253.9 797.8,254.6 798.8,255.4 799.9,254.7 800.9,254.1 801.9,253.6 802.9,253.1 803.9,252.8 805.0,253.1 806.0,253.6 807.1,254.1 808.2,254.8 809.3,255.4 810.3,256.1 811.4,255.8 812.5,255.5 813.6,255.2 814.6,254.9 815.7,254.7 816.8,254.5 817.9,254.7 818.9,254.9 820.0,255.2 821.1,255.5 822.1,255.9 823.2,254.9 824.3,254.0 825.4,253.2 826.4,252.5 827.5,252.0 828.6,252.2 829.8,252.6 831.0,253.0 832.1,253.4 833.2,253.9 834.4,252.6 835.5,251.3 836.7,250.2 837.9,249.3 839.0,248.6 840.0,249.1 841.0,249.9 842.0,250.8 843.0,251.8 844.0,252.8 845.0,251.8 846.0,250.8 847.0,249.9 848.0,249.1 849.0,248.6 850.2,249.3 851.3,250.3 852.5,251.5 853.7,252.9 854.9,254.3 856.0,254.0 857.2,253.7 858.4,253.5 859.5,253.2 860.7,253.1 861.7,253.4 862.7,253.8 863.8,254.3 864.8,254.8 865.8,255.4 866.8,256.0 867.8,255.6 868.8,255.2 869.8,254.8 870.9,254.4 871.9,254.1 872.9,253.9 874.0,254.2 875.1,254.6 876.3,255.0 877.4,255.5 878.5,256.1 879.6,255.4 880.7,254.7 881.9,254.1 883.0,253.6 884.1,253.2 885.2,253.5 886.3,253.9 887.4,254.4 888.5,254.9 889.6,255.5 890.7,254.6 891.8,253.8 892.9,253.1 894.0,252.5 895.1,252.0 896.2,252.3 897.3,252.8 898.3,253.4 899.4,254.0 900.5,254.7 901.6,253.7 902.7,252.8 903.7,252.0 904.8,251.3 905.9,250.8 907.0,251.2 908.1,251.7 909.2,252.4 910.3,253.1 911.5,253.9 912.6,252.8 913.7,251.8 914.8,250.9 915.9,250.2 917.0,249.6 918.0,250.2 919.0,251.0 920.0,252.0 921.0,253.1 922.0,254.3 923.1,253.7 924.1,253.2 925.1,252.7 926.1,252.3 927.1,252.0 928.2,252.3 929.3,252.8 930.4,253.3 931.5,253.8 932.6,254.5 933.7,255.1 934.8,254.5 935.9,253.9 937.0,253.4 938.1,252.9 939.2,252.5 940.3,252.2 941.4,252.6 942.4,253.2 943.5,253.8 944.6,254.6 945.6,255.3 946.7,254.6 947.8,254.0 948.9,253.4 949.9,252.9 951.0,252.6 952.0,252.9 953.0,253.2 954.0,253.7 955.1,254.2 956.1,254.7 957.1,255.3 958.1,254.6 959.1,254.0 960.2,253.4 961.2,252.9 962.2,252.5 963.2,252.1 964.3,252.5 965.3,252.9 966.4,253.4 967.5,254.0 968.5,254.6 969.6,253.6 970.7,252.7 971.8,251.8 972.8,251.1 973.9,250.6 975.0,250.9 976.1,251.4 977.1,252.0 978.2,252.6 979.3,253.3 980.4,251.9 981.5,250.7 982.5,249.6 983.6,248.7 984.7,248.0 985.7,248.6 986.7,249.5 987.7,250.5 988.7,251.6 989.7,252.8 990.7,251.9 991.7,251.1 992.7,250.4 993.7,249.8 994.7,249.3 995.8,249.9 996.8,250.7 997.9,251.6 998.9,252.7 1000.0,253.8 1001.0,255.0 1002.0,254.9 1003.1,254.8 1004.1,254.7 1005.2,254.6 1006.2,254.6 1007.3,254.5 1008.5,254.7 1009.8,255.0 1011.0,255.3 1012.2,255.6 1013.3,254.5 1014.5,253.5 1015.6,252.6 1016.8,251.9 1017.9,251.3 1019.0,251.9 1020.2,252.8 1021.3,253.8 1022.5,254.9 1023.6,256.1 1024.7,255.5 1025.8,255.0 1026.8,254.5 1027.9,254.0 1029.0,253.7 1030.0,254.1 1031.0,254.6 1032.0,255.2 1033.0,255.9 1034.0,256.7 1035.0,257.5 1036.1,256.5 1037.2,255.6 1038.2,254.8 1039.3,254.0 1040.4,253.4 1041.5,252.9 1042.7,253.2 1044.0,253.6 1045.2,254.0 1046.4,254.5 1047.5,253.7 1048.6,252.9 1049.7,252.1 1050.7,251.5 1051.8,250.9 1052.9,250.5 1054.1,250.7 1055.3,251.0 1056.6,251.4 1057.8,251.8 1058.9,250.8 1060.1,249.7 1061.2,248.8 1062.4,248.1 1063.5,247.5 1064.6,248.0 1065.8,248.6 1066.9,249.3 1068.1,250.2 1069.2,251.0 1070.4,250.5 1071.7,250.1 1072.9,249.7 1074.1,249.4 1075.2,250.0 1076.4,250.7 1077.5,251.6 1078.7,252.7 1079.8,253.7 1080.9,253.3 1082.0,253.0 1083.2,252.6 1084.3,252.3 1085.4,252.1 1086.5,252.6 1087.7,253.2 1088.8,253.9 1090.0,254.7 1091.1,255.6 1092.2,255.0 1093.4,254.4 1094.5,253.9 1095.7,253.5 1096.8,253.2 1097.9,253.5 1099.1,254.0 1100.2,254.6 1101.4,255.2 1102.5,255.9 1103.6,254.9 1104.8,253.9 1105.9,253.1 1107.1,252.4 1108.2,251.8 1109.3,252.1 1110.5,252.4 1111.6,252.8 1112.8,253.3 1113.9,253.7 1114.9,252.8 1116.0,252.0 1117.0,251.2 1118.0,250.5 1119.1,249.9 1120.1,249.4 1121.1,249.5 1122.2,249.7 1123.2,249.8 1124.3,250.0 1125.3,250.2 1126.4,248.8 1127.6,247.5 1128.7,246.3 1129.9,245.3 1131.0,244.6 1132.1,244.8 1133.2,245.0 1134.2,245.3 1135.3,245.6 1136.4,245.9 1137.5,246.2 1138.5,245.2 1139.5,244.3 1140.6,243.5 1141.6,243.0 1142.7,243.4 1143.9,244.0 1145.0,244.6 1146.2,245.4 1147.3,246.2 1148.4,245.5 1149.6,244.8 1150.7,244.2 1151.9,243.6 1153.0,243.2 1154.2,243.8 1155.5,244.7 1156.7,245.7 1157.9,246.7 1159.1,247.3 1160.3,247.9 1161.6,248.3 1162.8,248.6 1163.9,249.5 1165.0,250.5 1166.0,251.8 1167.1,253.2 1168.2,254.8 1169.3,256.4 1170.4,256.1 1171.5,255.8 1172.5,255.5 1173.6,255.2 1174.7,255.0 1175.8,254.8 1176.8,255.4 1177.9,256.1 1178.9,257.0 1180.0,258.0 1181.0,259.1 1182.0,258.6 1183.1,258.0 1184.2,257.6 1185.2,257.2 1186.2,256.8 1187.3,256.5 1188.4,257.0 1189.5,257.5 1190.6,258.2 1191.7,258.9 1192.8,259.7 1193.9,258.8 1195.0,258.0 1196.1,257.3 1197.2,256.7 1198.3,256.2 1199.4,256.7 1200.5,257.2 1201.5,257.9 1202.6,258.6 1203.7,259.4 1204.8,258.5 1205.9,257.7 1207.0,257.0 1208.1,256.4 1209.2,256.0 1210.3,256.4 1211.4,257.0 1212.5,257.7 1213.6,258.5 1214.7,259.4 1215.7,258.7 1216.7,258.1 1217.7,257.5 1218.7,257.0 1219.7,256.6 1220.7,256.2 1221.9,256.7 1223.0,257.3 1224.2,258.0 1225.3,258.8 1226.5,259.7 1227.6,258.9 1228.7,258.2 1229.8,257.5 1230.9,257.0 1232.0,256.5 1233.1,257.0 1234.2,257.6 1235.3,258.3 1236.4,259.1 1237.5,260.0 1238.6,259.2 1239.7,258.5 1240.8,257.8 1241.9,257.3 1243.0,256.8 1244.1,257.3 1245.2,257.8 1246.2,258.5 1247.3,259.2 1248.4,260.0 1249.5,259.3 1250.6,258.6 1251.7,258.0 1252.8,257.5 1253.9,257.2 1255.0,257.6 1256.1,258.1 1257.2,258.8 1258.3,259.5 1259.4,260.3 1260.5,259.8 1261.5,259.3 1262.6,258.8 1263.6,258.5 1264.7,258.1 1265.7,257.9 1266.8,258.2 1267.9,258.7 1269.0,259.3 1270.1,259.9 1271.2,260.6 1272.3,260.0 1273.4,259.4 1274.5,258.9 1275.6,258.5 1276.7,258.2 1277.8,258.6 1278.9,259.0 1280.0,259.6 1281.1,260.2 1282.2,260.9 1283.5,260.7 1284.7,260.5 1286.0,260.3 1287.2,258.0 1288.0,256.6 1289.0,255.3 1290.0,254.0 1291.0,255.1 1292.0,254.4 1293.0,254.8 1294.0,254.9 1295.0,253.8 1296.0,253.3 1297.0,251.9 1298.0,249.9 1299.0,249.7 1300.0,249.0 1301.0,250.4 1302.0,250.7 1303.0,250.2 1304.0,249.4 1305.0,249.0 1306.0,247.4 1307.0,247.1 1308.0,246.9 1309.0,246.3 1310.0,246.1 1311.0,246.5 1312.0,247.4 1313.0,248.1 1314.0,248.8 1315.0,247.4 1316.0,248.0 1317.0,247.0 1318.0,246.2 1319.0,246.3 1320.0,245.4 1321.0,246.7 1322.0,246.9 1323.0,246.7 1324.0,248.2 1325.0,248.0 1326.0,248.8 1327.0,249.6 1328.0,249.6 1329.0,248.8 1330.0,246.9 1331.0,246.2 1332.0,246.2 1333.0,245.8 1334.0,247.0 1335.0,247.4 1336.0,246.9 1337.0,247.4 1338.0,247.6 1339.0,246.9 1340.0,246.1 1341.0,245.7 1342.0,244.6 1343.0,244.3 1344.0,243.2 1345.0,243.6 1346.0,243.6 1346.0,277.6 1345.0,277.6 1344.0,276.9 1343.0,274.3 1342.0,273.7 1341.0,277.1 1340.0,279.2 1339.0,279.2 1338.0,276.2 1337.0,273.1 1336.0,273.8 1335.0,275.1 1334.0,277.4 1333.0,275.5 1332.0,274.5 1331.0,274.1 1330.0,273.0 1329.0,273.0 1328.0,273.9 1327.0,276.2 1326.0,277.4 1325.0,278.0 1324.0,277.1 1323.0,276.2 1322.0,275.6 1321.0,274.1 1320.0,272.8 1319.0,273.8 1318.0,275.7 1317.0,276.6 1316.0,277.8 1315.0,278.9 1314.0,279.8 1313.0,278.8 1312.0,277.1 1311.0,274.2 1310.0,277.3 1309.0,280.3 1308.0,282.4 1307.0,282.0 1306.0,278.7 1305.0,274.7 1304.0,274.0 1303.0,273.7 1302.0,274.5 1301.0,275.0 1300.0,272.4 1299.0,270.8 1298.0,269.7 1297.0,270.0 1296.0,271.4 1295.0,270.5 1294.0,267.6 1293.0,265.8 1292.0,265.8 1291.0,266.7 1290.0,265.9 1289.0,264.8 1288.0,263.7 1287.1,263.1 1286.0,261.7 1284.7,262.5 1283.5,263.1 1282.2,263.6 1281.1,263.4 1280.0,263.1 1278.9,262.8 1277.8,262.5 1276.7,262.1 1275.6,262.5 1274.6,263.0 1273.5,263.3 1272.4,263.7 1271.4,264.0 1270.3,264.2 1269.2,264.0 1268.1,263.6 1267.0,263.3 1265.9,262.8 1264.8,262.4 1263.7,263.1 1262.6,263.7 1261.6,264.3 1260.5,264.7 1259.4,265.1 1258.3,264.7 1257.2,264.2 1256.1,263.5 1255.0,262.8 1253.9,262.1 1252.8,262.8 1251.7,263.5 1250.6,264.2 1249.5,264.7 1248.4,265.1 1247.3,264.7 1246.2,264.2 1245.2,263.5 1244.1,262.8 1243.0,262.1 1241.9,262.9 1240.8,263.7 1239.7,264.4 1238.6,265.0 1237.5,265.4 1236.4,265.0 1235.3,264.4 1234.2,263.7 1233.1,262.9 1232.0,262.1 1230.9,262.8 1229.8,263.5 1228.7,264.2 1227.6,264.7 1226.5,265.1 1225.3,264.7 1224.2,264.2 1223.0,263.5 1221.9,262.8 1220.7,262.1 1219.7,262.5 1218.7,263.0 1217.7,263.3 1216.7,263.7 1215.7,264.0 1214.7,264.2 1213.6,263.9 1212.5,263.5 1211.4,263.0 1210.3,262.4 1209.2,261.8 1208.1,262.5 1207.0,263.1 1205.9,263.7 1204.8,264.1 1203.7,264.5 1202.6,264.2 1201.5,263.8 1200.5,263.3 1199.4,262.7 1198.3,262.1 1197.2,262.9 1196.1,263.7 1195.0,264.4 1193.9,265.0 1192.8,265.4 1191.7,265.0 1190.6,264.5 1189.5,263.8 1188.4,263.1 1187.3,262.4 1186.2,263.3 1185.2,264.1 1184.2,264.9 1183.1,265.6 1182.0,266.2 1181.0,266.6 1179.9,266.2 1178.8,265.6 1177.7,264.9 1176.6,264.1 1175.5,263.3 1174.4,264.0 1173.2,264.8 1172.1,265.4 1171.0,266.0 1169.9,266.6 1168.7,267.0 1167.6,267.4 1166.4,267.9 1165.2,268.6 1164.0,269.5 1162.8,270.4 1161.6,270.9 1160.3,271.3 1159.1,271.7 1157.9,272.0 1156.8,272.1 1155.6,272.2 1154.5,272.3 1153.3,272.4 1152.2,272.5 1151.2,274.3 1150.2,275.9 1149.1,277.2 1148.1,278.2 1146.9,277.1 1145.6,275.6 1144.4,273.9 1143.2,272.0 1142.0,273.5 1140.8,275.0 1139.5,276.2 1138.3,277.1 1137.2,276.4 1136.2,275.3 1135.1,274.1 1134.1,274.0 1133.1,273.9 1132.1,273.8 1131.0,273.6 1130.0,273.5 1129.0,273.5 1128.0,273.4 1127.0,273.3 1125.8,272.7 1124.5,271.9 1123.3,270.9 1122.1,269.8 1121.0,269.6 1119.8,269.4 1118.7,269.3 1117.5,269.1 1116.4,269.0 1115.3,268.6 1114.1,268.1 1113.0,267.5 1111.8,266.8 1110.7,266.1 1109.6,266.4 1108.5,266.7 1107.5,267.0 1106.4,267.3 1105.3,267.5 1104.2,267.7 1103.1,267.4 1101.9,267.0 1100.8,266.6 1099.6,266.1 1098.5,265.6 1097.4,266.0 1096.2,266.4 1095.1,266.8 1093.9,267.2 1092.8,267.4 1091.7,267.2 1090.5,266.9 1089.4,266.6 1088.2,266.2 1087.1,265.8 1086.0,266.5 1084.8,267.2 1083.7,267.9 1082.5,268.4 1081.4,268.8 1080.3,268.6 1079.2,268.4 1078.2,268.1 1077.1,267.8 1076.0,267.5 1074.9,267.1 1073.7,268.1 1072.5,268.9 1071.2,269.6 1070.0,270.1 1068.9,269.8 1067.7,269.3 1066.6,268.7 1065.4,268.1 1064.3,267.4 1063.2,268.1 1062.0,268.7 1060.9,269.3 1059.7,269.8 1058.6,270.1 1057.5,269.7 1056.3,269.2 1055.2,268.6 1054.0,267.9 1052.9,267.1 1051.8,267.8 1050.6,268.4 1049.5,269.0 1048.3,269.5 1047.2,269.8 1046.1,269.5 1045.0,269.1 1044.0,268.5 1042.9,267.9 1041.8,267.3 1040.7,266.6 1039.6,267.4 1038.4,268.2 1037.3,268.9 1036.1,269.4 1035.0,269.8 1033.8,269.3 1032.5,268.5 1031.3,267.6 1030.1,266.6 1029.0,267.3 1027.9,268.0 1026.8,268.7 1025.8,269.3 1024.7,269.7 1023.6,270.1 1022.5,269.7 1021.3,269.2 1020.2,268.6 1019.0,267.9 1017.9,267.1 1016.8,267.5 1015.6,267.9 1014.5,268.3 1013.3,268.5 1012.2,268.8 1011.1,268.5 1009.9,268.1 1008.8,267.6 1007.6,267.1 1006.5,266.6 1005.2,267.3 1004.0,267.8 1003.0,267.6 1002.0,267.3 1001.0,267.0 999.9,266.6 998.9,266.2 997.9,265.8 996.9,266.4 995.9,267.0 994.8,267.6 993.8,268.0 992.8,268.4 991.8,268.8 990.8,268.5 989.8,268.2 988.8,267.7 987.8,267.3 986.8,266.8 985.8,266.3 984.7,266.9 983.7,267.5 982.7,268.0 981.7,268.5 980.7,268.9 979.7,269.2 978.6,268.9 977.4,268.4 976.2,267.9 975.1,267.3 974.0,266.6 972.8,267.4 971.7,268.1 970.5,268.8 969.4,269.3 968.2,269.7 967.1,269.3 965.9,268.9 964.8,268.3 963.6,267.6 962.5,266.9 961.3,267.7 960.2,268.5 959.0,269.2 957.9,269.7 956.7,270.2 955.6,269.8 954.6,269.3 953.5,268.7 952.4,268.0 951.4,267.3 950.3,268.2 949.2,269.0 948.1,269.8 947.1,270.4 946.0,270.9 944.9,270.4 943.7,269.7 942.5,268.8 941.4,267.8 940.2,266.8 939.1,267.3 938.0,267.8 936.8,268.2 935.6,268.5 934.5,268.8 933.5,268.4 932.5,268.1 931.5,267.6 930.4,267.1 929.4,266.5 928.4,265.9 927.4,266.3 926.4,266.8 925.3,267.2 924.3,267.5 923.3,267.8 922.3,268.1 921.2,267.8 920.2,267.4 919.1,267.0 918.0,266.6 917.0,266.1 915.9,266.8 914.8,267.6 913.7,268.3 912.7,268.8 911.6,269.2 910.5,268.9 909.3,268.3 908.1,267.7 907.0,267.0 905.9,266.3 904.7,266.9 903.6,267.5 902.4,268.0 901.2,268.4 900.1,268.8 899.0,268.4 898.0,267.9 896.9,267.4 895.8,266.7 894.8,266.0 893.7,266.7 892.6,267.2 891.5,267.8 890.5,268.2 889.4,268.5 888.3,268.2 887.3,267.8 886.2,267.3 885.1,266.8 884.0,266.2 883.0,267.0 881.9,267.7 880.8,268.3 879.8,268.8 878.7,269.2 877.6,268.8 876.4,268.2 875.2,267.5 874.1,266.7 873.0,265.9 871.8,266.3 870.7,266.7 869.5,267.1 868.4,267.4 867.2,267.6 866.2,267.4 865.2,267.2 864.2,266.9 863.1,266.6 862.1,266.3 861.1,265.9 860.1,266.6 859.1,267.3 858.0,267.9 857.0,268.4 856.0,268.9 855.0,269.2 854.0,269.0 852.9,268.6 851.9,268.1 850.9,267.6 849.9,267.1 848.8,268.1 847.8,269.0 846.8,269.9 845.7,270.6 844.7,271.1 843.6,270.7 842.6,270.2 841.5,269.6 840.4,269.0 839.4,268.2 838.3,269.4 837.2,270.4 836.1,271.4 835.1,272.2 834.0,272.8 833.0,272.2 832.0,271.5 831.0,270.7 829.9,269.8 828.9,268.7 827.9,267.7 826.9,268.1 825.9,268.4 824.8,268.8 823.8,269.0 822.8,269.3 821.8,269.5 820.6,269.1 819.5,268.6 818.3,268.1 817.2,267.4 816.0,266.7 814.9,267.5 813.8,268.3 812.6,269.0 811.4,269.5 810.3,269.9 809.2,269.5 808.0,269.0 806.9,268.3 805.7,267.6 804.6,266.8 803.5,267.5 802.3,268.2 801.2,268.8 800.0,269.3 798.9,269.7 797.8,269.3 796.7,268.7 795.7,268.0 794.6,267.3 793.5,266.4 792.4,267.0 791.3,267.6 790.3,268.0 789.2,268.4 788.1,268.8 787.0,268.3 786.0,267.7 784.9,267.0 783.8,266.2 782.8,265.4 781.7,265.7 780.6,266.0 779.5,266.2 778.5,266.5 777.4,266.6 776.4,266.4 775.4,266.1 774.3,265.8 773.3,265.4 772.3,265.0 771.3,264.6 770.3,265.2 769.3,265.7 768.2,266.2 767.2,266.7 766.2,267.0 765.2,267.3 764.1,267.0 763.0,266.6 762.0,266.0 760.9,265.4 759.8,264.8 758.7,265.3 757.6,265.8 756.6,266.2 755.5,266.6 754.4,266.9 753.3,266.5 752.1,266.0 751.0,265.4 749.8,264.7 748.7,263.9 747.6,264.5 746.4,265.0 745.3,265.5 744.1,265.9 743.0,266.1 741.9,265.7 740.8,265.1 739.8,264.4 738.7,263.6 737.6,262.8 736.5,263.3 735.4,263.8 734.4,264.3 733.3,264.7 732.2,265.0 731.1,264.5 729.9,264.0 728.8,263.3 727.6,262.5 726.5,261.7 725.4,262.2 724.2,262.7 723.1,263.2 721.9,263.5 720.8,263.8 719.8,263.5 718.8,263.1 717.8,262.7 716.7,262.2 715.7,261.6 714.7,261.0 713.7,261.3 712.7,261.6 711.7,261.8 710.6,262.1 709.6,262.2 708.6,262.4 707.6,262.2 706.6,262.0 705.6,261.8 704.6,261.5 703.6,261.3 702.5,261.3 701.3,261.3 700.2,261.3 699.0,261.3 699.0,261.3" fill="#00c800" filter="url(#bl)"/><polygon points="699.0,502.2 704.1,500.2 705.2,500.5 706.2,500.8 707.3,501.2 708.3,501.7 709.4,502.2 710.6,501.4 711.7,500.6 712.9,500.0 714.0,499.4 715.2,499.0 716.3,499.3 717.3,499.6 718.4,500.0 719.4,500.5 720.5,501.0 721.6,500.1 722.7,499.2 723.8,498.4 724.9,497.7 726.0,497.2 727.0,497.8 728.0,498.5 729.0,499.5 730.0,500.5 731.0,501.6 732.1,500.2 733.2,498.9 734.2,497.7 735.3,496.6 736.4,495.7 737.5,495.0 738.6,495.4 739.6,495.9 740.7,496.6 741.7,497.3 742.8,498.1 743.8,496.9 744.9,495.7 745.9,494.7 747.0,493.8 748.0,493.2 749.2,493.7 750.4,494.3 751.5,495.1 752.7,496.0 753.9,496.9 755.0,495.7 756.0,494.5 757.1,493.5 758.2,492.5 759.2,491.7 760.3,491.1 761.4,491.6 762.4,492.4 763.5,493.2 764.5,494.2 765.6,495.2 766.7,494.4 767.7,493.6 768.8,493.0 769.8,492.4 770.9,492.0 772.1,492.4 773.2,493.0 774.4,493.6 775.5,494.4 776.7,495.2 777.9,493.2 779.1,491.4 780.2,489.7 781.4,488.3 782.6,487.3 783.6,487.6 784.7,487.9 785.7,488.3 786.8,488.8 787.8,489.3 789.0,487.9 790.2,486.5 791.3,485.3 792.5,484.3 793.7,483.5 794.9,484.1 796.1,484.9 797.2,485.9 798.4,487.0 799.6,488.2 800.8,487.0 801.9,485.9 803.1,485.0 804.2,484.3 805.4,485.0 806.6,486.0 807.7,487.2 808.9,488.5 810.1,489.9 811.1,489.4 812.1,489.0 813.1,488.6 814.1,488.2 815.1,487.8 816.1,487.5 817.1,487.3 818.3,487.5 819.5,487.9 820.6,488.3 821.8,488.7 823.0,487.1 824.2,485.6 825.3,484.3 826.5,483.1 827.7,482.3 828.9,483.0 830.0,483.9 831.2,485.0 832.3,486.3 833.5,487.6 834.6,486.5 835.6,485.4 836.7,484.5 837.7,483.7 838.8,483.1 840.0,484.6 841.1,486.6 842.3,489.0 843.5,491.7 844.7,490.8 845.8,490.0 847.0,489.3 848.1,488.7 849.3,488.2 850.4,489.0 851.5,490.0 852.5,491.2 853.6,492.6 854.7,494.0 855.8,492.9 856.8,491.8 857.9,490.7 859.0,489.8 860.0,489.1 861.1,488.5 862.3,489.2 863.5,490.2 864.6,491.5 865.8,492.8 866.8,491.4 867.8,490.1 868.8,488.9 869.8,487.7 870.8,486.7 871.8,485.9 872.8,485.2 874.0,485.8 875.1,486.6 876.3,487.6 877.5,488.7 878.7,487.3 879.9,486.0 881.0,484.9 882.2,484.1 883.4,484.6 884.6,485.2 885.7,485.9 886.9,486.7 888.1,487.6 889.1,486.7 890.1,485.7 891.1,484.9 892.1,484.1 893.1,483.4 894.1,482.8 895.1,482.3 896.2,482.9 897.2,483.7 898.3,484.7 899.3,485.8 900.4,487.0 901.5,486.1 902.7,485.3 903.9,484.6 905.0,484.1 906.2,485.2 907.4,486.6 908.5,488.3 909.7,490.3 910.9,492.3 912.1,491.3 913.3,490.3 914.4,489.5 915.6,488.7 916.8,488.2 917.8,489.0 918.9,490.0 919.9,491.2 921.0,492.6 922.0,494.0 923.2,492.8 924.4,491.7 925.5,490.7 926.7,489.9 927.9,489.3 929.1,489.8 930.2,490.4 931.4,491.1 932.5,491.9 933.7,492.8 934.8,490.6 935.9,488.5 937.0,486.6 938.0,484.9 939.1,483.4 940.2,482.3 941.3,482.6 942.3,483.0 943.4,483.5 944.4,484.0 945.5,484.6 946.6,483.3 947.8,482.0 949.0,481.0 950.1,480.3 951.2,480.8 952.3,481.3 953.4,482.0 954.4,482.8 955.5,483.7 956.6,484.6 957.7,483.5 958.7,482.5 959.8,481.6 960.8,480.9 961.9,480.3 962.9,480.9 964.0,481.8 965.0,482.8 966.1,484.0 967.1,485.2 968.3,484.2 969.5,483.2 970.6,482.4 971.8,481.6 973.0,481.1 974.1,482.0 975.1,483.3 976.2,484.8 977.2,486.4 978.3,488.2 979.5,487.5 980.6,486.7 981.8,486.1 982.9,485.6 984.1,485.2 985.2,486.1 986.2,487.2 987.3,488.6 988.3,490.1 989.4,491.7 990.6,491.1 991.7,490.5 992.9,490.0 994.0,489.6 995.2,489.3 996.4,489.9 997.6,490.7 998.7,491.7 999.9,492.8 1001.1,494.0 1002.1,492.8 1003.2,491.7 1004.2,490.6 1005.2,489.7 1006.3,488.9 1007.3,488.3 1008.3,488.6 1009.4,488.9 1010.4,489.4 1011.5,489.9 1012.5,490.4 1013.7,488.1 1014.9,485.9 1016.0,484.0 1017.2,482.4 1018.4,481.2 1019.6,482.1 1020.8,483.4 1021.9,484.9 1023.1,486.5 1024.1,485.4 1025.2,484.4 1026.2,483.4 1027.3,482.7 1028.3,482.1 1029.3,482.7 1030.3,483.5 1031.3,484.4 1032.3,485.5 1033.3,486.6 1034.3,487.8 1035.3,486.6 1036.4,485.5 1037.4,484.4 1038.4,483.4 1039.4,482.5 1040.5,481.8 1041.5,481.2 1042.7,481.9 1043.8,482.8 1044.9,484.0 1046.1,485.2 1047.3,484.5 1048.5,483.9 1049.6,483.3 1050.8,482.9 1052.0,482.5 1053.1,483.3 1054.1,484.3 1055.2,485.5 1056.2,486.9 1057.3,488.4 1058.4,488.4 1059.4,488.4 1060.5,488.4 1061.5,488.4 1062.6,488.4 1063.8,489.4 1064.9,490.8 1066.0,492.5 1067.2,494.4 1068.4,493.6 1069.6,492.8 1070.7,492.1 1071.9,491.5 1073.1,491.1 1074.1,491.8 1075.1,492.7 1076.1,493.8 1077.1,495.0 1078.1,496.3 1079.1,497.7 1080.1,496.5 1081.2,495.4 1082.2,494.3 1083.2,493.3 1084.2,492.4 1085.3,491.7 1086.3,491.1 1087.4,491.6 1088.4,492.3 1089.5,493.1 1090.5,494.0 1091.6,495.0 1092.8,493.9 1094.0,492.8 1095.1,491.8 1096.3,491.0 1097.5,490.4 1098.6,491.0 1099.6,491.8 1100.7,492.8 1101.7,493.9 1102.8,495.0 1104.0,493.6 1105.2,492.3 1106.3,491.2 1107.5,490.2 1108.7,489.5 1109.8,490.0 1111.0,490.7 1112.2,491.5 1113.3,492.4 1114.3,491.3 1115.3,490.2 1116.3,489.3 1117.3,488.4 1118.3,487.7 1119.3,487.1 1120.5,487.6 1121.7,488.3 1122.8,489.2 1124.0,490.1 1125.2,491.1 1126.4,489.5 1127.6,487.9 1128.7,486.5 1129.9,485.4 1131.1,484.5 1132.2,485.0 1133.2,485.7 1134.3,486.5 1135.3,487.4 1136.4,488.4 1137.5,487.1 1138.5,485.9 1139.6,484.8 1140.6,483.9 1141.7,483.2 1142.9,483.9 1144.1,484.8 1145.2,485.9 1146.4,487.1 1147.6,488.4 1148.7,487.1 1149.7,485.9 1150.8,484.8 1151.8,483.9 1152.9,483.2 1153.9,484.1 1155.0,485.2 1156.0,486.6 1157.1,488.2 1158.1,489.8 1159.2,489.7 1160.2,489.7 1161.3,489.6 1162.3,489.5 1163.4,489.5 1164.5,490.0 1165.6,490.7 1166.7,491.5 1167.8,492.4 1168.9,493.4 1170.0,494.4 1171.2,493.9 1172.4,493.4 1173.5,493.0 1174.7,492.7 1175.9,492.4 1177.0,493.2 1178.0,494.2 1179.1,495.4 1180.1,496.8 1181.2,498.3 1182.4,497.3 1183.6,496.4 1184.7,495.6 1185.9,494.9 1187.1,494.4 1188.2,495.0 1189.2,495.8 1190.3,496.8 1191.3,497.9 1192.4,499.0 1193.6,498.2 1194.8,497.4 1195.9,496.7 1197.1,496.1 1198.3,495.7 1199.4,496.0 1200.4,496.5 1201.5,497.0 1202.5,497.7 1203.6,498.3 1204.8,496.8 1206.0,495.4 1207.1,494.2 1208.3,493.2 1209.5,492.4 1210.6,493.1 1211.6,494.0 1212.7,495.1 1213.7,496.4 1214.8,497.7 1215.9,496.7 1216.9,495.7 1218.0,494.8 1219.0,494.1 1220.1,493.5 1221.3,494.2 1222.5,495.2 1223.6,496.3 1224.8,497.6 1226.0,499.0 1227.2,497.7 1228.4,496.4 1229.5,495.3 1230.7,494.4 1231.9,493.7 1233.0,494.3 1234.0,495.1 1235.1,496.1 1236.1,497.2 1237.2,498.3 1238.3,497.3 1239.3,496.4 1240.4,495.6 1241.4,494.9 1242.5,494.4 1243.5,495.1 1244.6,496.0 1245.6,497.1 1246.7,498.3 1247.7,499.6 1248.7,498.9 1249.7,498.2 1250.7,497.5 1251.7,497.0 1252.7,496.5 1253.7,496.1 1254.9,496.8 1256.1,497.8 1257.2,498.9 1258.4,500.2 1259.6,501.6 1260.8,500.6 1262.0,499.6 1263.1,498.7 1264.3,498.0 1265.5,497.4 1266.6,498.0 1267.6,498.7 1268.7,499.6 1269.7,500.6 1270.8,501.6 1271.9,500.7 1273.0,499.9 1274.1,499.1 1275.2,498.4 1276.3,497.8 1277.4,497.4 1278.6,498.1 1279.7,499.1 1280.8,500.3 1282.0,501.6 1283.1,499.7 1284.3,497.9 1285.4,496.2 1286.5,494.6 1287.6,493.2 1288.0,493.8 1289.0,493.6 1290.0,492.8 1291.0,491.0 1292.0,491.9 1293.0,489.9 1294.0,490.5 1295.0,492.0 1296.0,489.0 1297.0,490.1 1298.0,485.7 1299.0,485.3 1300.0,485.7 1301.0,489.3 1302.0,487.3 1303.0,490.7 1304.0,491.9 1305.0,489.9 1306.0,489.1 1307.0,487.6 1308.0,483.5 1309.0,481.9 1310.0,482.3 1311.0,485.5 1312.0,487.1 1313.0,487.0 1314.0,489.3 1315.0,488.9 1316.0,486.2 1317.0,485.0 1318.0,487.4 1319.0,486.4 1320.0,484.9 1321.0,483.0 1322.0,487.2 1323.0,487.1 1324.0,488.5 1325.0,487.0 1326.0,489.5 1327.0,489.9 1328.0,489.7 1329.0,489.3 1330.0,486.2 1331.0,487.9 1332.0,487.5 1333.0,484.6 1334.0,484.1 1335.0,484.3 1336.0,488.2 1337.0,484.9 1338.0,487.3 1339.0,486.7 1340.0,489.7 1341.0,486.9 1342.0,487.7 1343.0,485.0 1344.0,482.6 1345.0,485.2 1346.0,485.2 1346.0,520.8 1345.0,520.8 1344.0,516.4 1343.0,514.0 1342.0,510.6 1341.0,514.9 1340.0,518.1 1339.0,519.2 1338.0,521.3 1337.0,517.6 1336.0,517.8 1335.0,514.3 1334.0,515.9 1333.0,513.7 1332.0,514.9 1331.0,519.1 1330.0,519.9 1329.0,522.4 1328.0,523.4 1327.0,522.3 1326.0,518.2 1325.0,517.0 1324.0,515.8 1323.0,520.2 1322.0,519.7 1321.0,520.9 1320.0,524.1 1319.0,519.7 1318.0,518.4 1317.0,520.4 1316.0,517.1 1315.0,520.5 1314.0,525.1 1313.0,526.8 1312.0,525.6 1311.0,523.6 1310.0,520.0 1309.0,528.0 1308.0,531.0 1307.0,528.9 1306.0,526.6 1305.0,520.3 1304.0,519.7 1303.0,519.6 1302.0,520.0 1301.0,520.0 1300.0,519.5 1299.0,515.4 1298.0,514.2 1297.0,510.4 1296.0,513.1 1295.0,515.0 1294.0,515.1 1293.0,517.6 1292.0,517.0 1291.0,515.1 1290.0,512.4 1289.0,508.0 1288.0,507.2 1287.6,504.7 1286.4,505.8 1285.2,506.8 1283.9,507.6 1282.7,508.2 1281.7,507.8 1280.7,507.2 1279.7,506.6 1278.7,505.9 1277.7,505.1 1276.7,504.3 1275.7,505.3 1274.6,506.2 1273.6,507.0 1272.5,507.7 1271.5,508.2 1270.4,507.8 1269.3,507.2 1268.2,506.6 1267.1,505.9 1266.0,505.1 1264.9,504.3 1263.8,505.4 1262.8,506.5 1261.7,507.5 1260.7,508.3 1259.6,508.9 1258.5,508.4 1257.5,507.7 1256.4,506.8 1255.4,505.9 1254.3,504.9 1253.3,506.2 1252.2,507.5 1251.2,508.6 1250.1,509.5 1249.1,510.2 1248.1,509.8 1247.1,509.2 1246.1,508.6 1245.1,507.8 1244.1,507.0 1243.1,506.2 1242.1,507.5 1241.0,508.8 1240.0,509.9 1238.9,510.8 1237.9,511.5 1236.9,511.1 1235.9,510.5 1234.9,509.9 1233.9,509.2 1232.9,508.4 1231.9,507.6 1230.9,509.1 1229.8,510.5 1228.8,511.7 1227.7,512.7 1226.7,513.5 1225.7,512.9 1224.7,512.1 1223.7,511.1 1222.7,510.0 1221.7,508.8 1220.7,507.6 1219.5,509.1 1218.3,510.5 1217.2,511.7 1216.0,512.7 1214.8,513.5 1213.7,512.5 1212.7,511.3 1211.6,509.7 1210.6,508.0 1209.5,506.2 1208.5,507.5 1207.4,508.8 1206.4,509.9 1205.3,510.8 1204.3,511.5 1203.3,510.8 1202.3,509.9 1201.3,508.8 1200.3,507.6 1199.3,506.3 1198.3,504.9 1197.1,505.9 1195.9,506.8 1194.8,507.7 1193.6,508.4 1192.4,508.9 1191.3,508.5 1190.3,507.9 1189.2,507.2 1188.2,506.4 1187.1,505.6 1185.9,506.7 1184.7,507.8 1183.6,508.8 1182.4,509.6 1181.2,510.2 1180.0,509.6 1178.9,508.9 1177.8,507.9 1176.6,506.9 1175.5,508.0 1174.4,509.1 1173.3,510.0 1172.2,510.9 1171.1,511.6 1170.0,512.2 1169.0,512.4 1168.0,512.7 1167.0,513.0 1166.0,513.3 1165.0,513.7 1164.0,514.1 1162.8,515.1 1161.6,516.0 1160.5,516.9 1159.3,517.6 1158.1,518.1 1157.1,517.8 1156.0,517.5 1155.0,517.1 1153.9,516.6 1152.9,516.1 1151.8,517.6 1150.8,519.0 1149.7,520.2 1148.7,521.2 1147.6,522.0 1146.5,521.4 1145.5,520.6 1144.4,519.6 1143.4,518.5 1142.3,517.4 1141.2,519.0 1140.2,520.6 1139.1,522.0 1138.1,523.1 1137.0,524.0 1135.8,523.0 1134.6,521.8 1133.5,520.3 1132.3,518.6 1131.1,516.8 1129.9,517.9 1128.7,519.0 1127.6,520.0 1126.4,520.8 1125.2,521.4 1124.1,520.6 1123.0,519.6 1121.9,518.4 1120.8,517.1 1119.7,515.6 1118.6,514.1 1117.4,514.8 1116.2,515.4 1115.1,516.0 1113.9,516.4 1112.7,516.8 1111.6,516.2 1110.6,515.4 1109.5,514.4 1108.5,513.3 1107.4,512.2 1106.3,513.0 1105.3,513.8 1104.2,514.5 1103.2,515.1 1102.1,515.5 1100.9,515.0 1099.7,514.3 1098.6,513.4 1097.4,512.5 1096.2,511.5 1095.1,512.0 1094.1,512.5 1093.0,512.9 1092.0,513.2 1090.9,513.5 1089.7,513.1 1088.5,512.7 1087.4,512.1 1086.2,511.5 1085.0,510.8 1083.8,512.0 1082.6,513.1 1081.5,514.1 1080.3,514.9 1079.1,515.5 1078.0,515.1 1077.0,514.7 1075.9,514.1 1074.9,513.5 1073.8,512.8 1072.7,514.1 1071.7,515.4 1070.6,516.5 1069.6,517.4 1068.5,518.1 1067.4,517.7 1066.4,517.1 1065.3,516.4 1064.3,515.6 1063.2,514.8 1062.2,515.4 1061.1,516.1 1060.1,516.6 1059.0,517.1 1058.0,517.4 1056.9,517.0 1055.8,516.6 1054.7,516.1 1053.6,515.4 1052.5,514.8 1051.4,514.1 1050.2,515.1 1049.1,516.1 1048.0,516.8 1046.8,517.4 1045.7,517.0 1044.6,516.4 1043.5,515.8 1042.4,515.1 1041.3,514.3 1040.2,513.5 1039.0,515.0 1037.8,516.4 1036.7,517.6 1035.5,518.6 1034.3,519.4 1033.2,518.7 1032.2,517.8 1031.1,516.7 1030.1,515.4 1029.0,514.1 1027.9,515.7 1026.9,517.3 1025.8,518.7 1024.8,519.8 1023.7,520.7 1022.5,519.9 1021.3,518.9 1020.2,517.7 1019.0,516.3 1017.8,514.8 1016.6,515.3 1015.4,515.8 1014.3,516.2 1013.1,516.5 1011.9,516.8 1010.9,516.3 1009.9,515.7 1008.9,514.9 1007.9,514.1 1006.9,513.2 1005.9,512.2 1004.7,513.5 1003.5,514.6 1002.3,515.6 1001.1,516.3 1000.0,516.0 999.0,515.6 997.9,515.1 996.9,514.5 995.8,513.9 994.8,514.9 993.7,515.9 992.7,516.7 991.6,517.5 990.6,518.0 989.5,517.6 988.4,517.1 987.4,516.6 986.3,515.9 985.2,515.2 984.1,514.5 982.9,515.7 981.8,516.8 980.6,517.8 979.5,518.6 978.3,519.2 977.2,518.7 976.2,517.9 975.1,517.1 974.1,516.1 973.0,515.1 971.8,515.8 970.6,516.5 969.5,517.1 968.3,517.6 967.1,518.0 965.9,517.5 964.8,516.7 963.6,515.9 962.5,514.9 961.3,513.9 960.2,514.8 959.2,515.6 958.1,516.3 957.1,516.9 956.0,517.4 954.8,517.1 953.6,516.7 952.5,516.2 951.3,515.7 950.1,515.1 949.0,516.7 947.8,518.2 946.6,519.5 945.5,520.4 944.4,519.7 943.3,518.8 942.2,517.8 941.2,516.6 940.1,515.3 939.0,513.9 937.9,514.5 936.9,515.1 935.8,515.6 934.8,516.0 933.7,516.3 932.5,515.9 931.4,515.4 930.2,514.8 929.1,514.0 927.9,513.3 926.7,514.5 925.5,515.6 924.4,516.6 923.2,517.4 922.0,518.0 920.8,517.4 919.7,516.6 918.5,515.6 917.4,514.5 916.2,513.3 915.1,514.5 914.1,515.6 913.0,516.6 912.0,517.4 910.9,518.0 909.8,517.5 908.8,516.7 907.7,515.9 906.7,514.9 905.6,513.9 904.6,514.9 903.5,515.9 902.5,516.7 901.4,517.5 900.4,518.0 899.2,517.5 898.0,516.7 896.9,515.9 895.7,514.9 894.5,513.9 893.4,514.5 892.4,515.1 891.3,515.6 890.3,516.0 889.2,516.3 888.2,515.8 887.1,515.0 886.1,514.2 885.0,513.2 884.0,512.2 882.9,513.1 881.8,513.9 880.8,514.6 879.7,515.3 878.6,515.9 877.5,516.3 876.3,516.0 875.2,515.6 874.0,515.1 872.9,514.5 871.7,513.9 870.6,514.2 869.6,514.5 868.5,514.7 867.5,514.9 866.4,515.1 865.2,514.6 864.0,514.0 862.9,513.3 861.7,512.5 860.5,511.6 859.5,512.1 858.5,512.6 857.5,513.1 856.5,513.5 855.5,513.9 854.5,514.2 853.5,514.5 852.3,513.8 851.1,512.8 849.9,511.6 848.9,512.9 847.8,514.2 846.8,515.3 845.7,516.2 844.7,516.9 843.6,516.5 842.5,516.0 841.5,515.4 840.4,514.8 839.3,514.0 838.2,513.3 837.0,514.3 835.9,515.3 834.7,516.1 833.6,516.9 832.4,517.4 831.3,516.7 830.3,515.8 829.2,514.7 828.2,513.5 827.1,512.2 826.0,513.5 825.0,514.7 823.9,515.8 822.9,516.7 821.8,517.4 820.6,516.9 819.5,516.3 818.3,515.6 817.2,514.8 816.0,513.9 814.9,515.5 813.8,517.0 812.8,518.4 811.7,519.6 810.6,520.7 809.5,521.5 808.4,520.7 807.4,519.5 806.3,518.2 805.3,516.7 804.2,515.1 803.1,517.1 801.9,518.9 800.8,520.4 799.6,521.5 798.4,520.6 797.2,519.4 796.1,517.9 794.9,516.2 793.7,514.5 792.5,515.6 791.4,516.6 790.2,517.4 789.0,518.0 787.8,517.2 786.7,516.2 785.5,515.0 784.4,513.6 783.2,512.2 782.1,512.2 781.0,512.2 780.0,512.2 778.9,512.2 777.8,512.2 776.7,512.2 775.5,511.8 774.4,511.3 773.2,510.7 772.1,509.9 770.9,509.2 769.7,509.8 768.5,510.4 767.4,510.9 766.2,511.3 765.0,511.6 763.9,511.1 762.9,510.5 761.8,509.8 760.8,509.0 759.7,508.1 758.5,508.7 757.4,509.2 756.2,509.7 755.1,510.1 753.9,510.4 752.8,509.9 751.8,509.1 750.7,508.3 749.7,507.3 748.6,506.3 747.5,507.2 746.5,508.0 745.4,508.7 744.3,509.4 743.3,510.0 742.2,510.4 741.0,509.8 739.9,509.0 738.7,508.0 737.5,506.9 736.4,507.4 735.3,507.8 734.2,508.3 733.2,508.6 732.1,509.0 731.0,509.2 729.9,508.5 728.7,507.5 727.5,506.4 726.4,505.1 725.2,505.7 724.0,506.3 722.9,506.8 721.7,507.2 720.5,507.5 719.4,507.0 718.4,506.4 717.3,505.7 716.3,504.9 715.2,504.0 714.1,504.2 713.1,504.4 712.0,504.7 710.9,504.8 709.9,505.0 708.8,505.1 707.6,504.9 706.5,504.6 705.3,504.2 704.1,503.8 703.1,503.8 702.1,503.8 701.0,503.8 700.0,503.8 699.0,503.8 699.0,503.8" fill="#ff0000"/><polygon points="699.0,502.7 704.1,502.1 705.2,502.2 706.2,502.3 707.3,502.4 708.3,502.6 709.4,502.7 710.6,502.5 711.7,502.2 712.9,502.0 714.0,501.8 715.2,501.7 716.3,501.8 717.3,501.9 718.4,502.0 719.4,502.2 720.5,502.3 721.6,502.0 722.7,501.7 723.8,501.5 724.9,501.3 726.0,501.1 727.0,501.3 728.0,501.5 729.0,501.8 730.0,502.2 731.0,502.5 732.1,502.1 733.2,501.6 734.2,501.2 735.3,500.9 736.4,500.6 737.5,500.4 738.6,500.5 739.6,500.7 740.7,500.9 741.7,501.1 742.8,501.4 743.8,501.0 744.9,500.6 745.9,500.3 747.0,500.0 748.0,499.8 749.2,499.9 750.4,500.1 751.5,500.4 752.7,500.7 753.9,501.0 755.0,500.6 756.0,500.2 757.1,499.9 758.2,499.5 759.2,499.3 760.3,499.1 761.4,499.3 762.4,499.5 763.5,499.8 764.5,500.1 765.6,500.4 766.7,500.2 767.7,499.9 768.8,499.7 769.8,499.5 770.9,499.4 772.1,499.5 773.2,499.7 774.4,499.9 775.5,500.2 776.7,500.4 777.9,499.8 779.1,499.2 780.2,498.6 781.4,498.2 782.6,497.8 783.6,497.9 784.7,498.0 785.7,498.2 786.8,498.3 787.8,498.5 789.0,498.0 790.2,497.6 791.3,497.2 792.5,496.8 793.7,496.6 794.9,496.8 796.1,497.0 797.2,497.4 798.4,497.7 799.6,498.1 800.8,497.7 801.9,497.4 803.1,497.1 804.2,496.8 805.4,497.1 806.6,497.4 807.7,497.8 808.9,498.2 810.1,498.7 811.1,498.5 812.1,498.4 813.1,498.2 814.1,498.1 815.1,498.0 816.1,497.9 817.1,497.8 818.3,497.9 819.5,498.0 820.6,498.1 821.8,498.3 823.0,497.8 824.2,497.3 825.3,496.8 826.5,496.4 827.7,496.2 828.9,496.4 830.0,496.7 831.2,497.1 832.3,497.5 833.5,497.9 834.6,497.5 835.6,497.2 836.7,496.9 837.7,496.6 838.8,496.4 840.0,496.9 841.1,497.6 842.3,498.4 843.5,499.3 844.7,499.0 845.8,498.7 847.0,498.5 848.1,498.3 849.3,498.1 850.4,498.4 851.5,498.7 852.5,499.1 853.6,499.6 854.7,500.0 855.8,499.7 856.8,499.3 857.9,499.0 859.0,498.7 860.0,498.4 861.1,498.2 862.3,498.5 863.5,498.8 864.6,499.2 865.8,499.6 866.8,499.2 867.8,498.8 868.8,498.3 869.8,498.0 870.8,497.6 871.8,497.4 872.8,497.1 874.0,497.3 875.1,497.6 876.3,497.9 877.5,498.3 878.7,497.8 879.9,497.4 881.0,497.0 882.2,496.8 883.4,496.9 884.6,497.1 885.7,497.4 886.9,497.6 888.1,497.9 889.1,497.6 890.1,497.3 891.1,497.0 892.1,496.8 893.1,496.5 894.1,496.3 895.1,496.2 896.2,496.4 897.2,496.6 898.3,497.0 899.3,497.3 900.4,497.7 901.5,497.4 902.7,497.2 903.9,496.9 905.0,496.8 906.2,497.1 907.4,497.6 908.5,498.2 909.7,498.8 910.9,499.5 912.1,499.1 913.3,498.8 914.4,498.5 915.6,498.3 916.8,498.1 917.8,498.4 918.9,498.7 919.9,499.1 921.0,499.6 922.0,500.0 923.2,499.6 924.4,499.3 925.5,499.0 926.7,498.7 927.9,498.5 929.1,498.6 930.2,498.8 931.4,499.1 932.5,499.3 933.7,499.6 934.8,498.9 935.9,498.2 937.0,497.6 938.0,497.0 939.1,496.5 940.2,496.2 941.3,496.3 942.3,496.4 943.4,496.6 944.4,496.7 945.5,496.9 946.6,496.5 947.8,496.1 949.0,495.8 950.1,495.5 951.2,495.7 952.3,495.9 953.4,496.1 954.4,496.3 955.5,496.6 956.6,496.9 957.7,496.6 958.7,496.2 959.8,495.9 960.8,495.7 961.9,495.5 962.9,495.7 964.0,496.0 965.0,496.3 966.1,496.7 967.1,497.1 968.3,496.8 969.5,496.5 970.6,496.2 971.8,496.0 973.0,495.8 974.1,496.1 975.1,496.5 976.2,497.0 977.2,497.5 978.3,498.1 979.5,497.9 980.6,497.6 981.8,497.4 982.9,497.3 984.1,497.1 985.2,497.4 986.2,497.8 987.3,498.2 988.3,498.7 989.4,499.3 990.6,499.1 991.7,498.9 992.9,498.7 994.0,498.6 995.2,498.5 996.4,498.7 997.6,499.0 998.7,499.3 999.9,499.6 1001.1,500.0 1002.1,499.6 1003.2,499.3 1004.2,498.9 1005.2,498.6 1006.3,498.4 1007.3,498.1 1008.3,498.2 1009.4,498.4 1010.4,498.5 1011.5,498.7 1012.5,498.8 1013.7,498.1 1014.9,497.4 1016.0,496.7 1017.2,496.2 1018.4,495.8 1019.6,496.1 1020.8,496.5 1021.9,497.0 1023.1,497.6 1024.1,497.2 1025.2,496.9 1026.2,496.5 1027.3,496.3 1028.3,496.1 1029.3,496.3 1030.3,496.6 1031.3,496.9 1032.3,497.2 1033.3,497.6 1034.3,498.0 1035.3,497.6 1036.4,497.2 1037.4,496.9 1038.4,496.5 1039.4,496.2 1040.5,496.0 1041.5,495.8 1042.7,496.0 1043.8,496.3 1044.9,496.7 1046.1,497.1 1047.3,496.9 1048.5,496.7 1049.6,496.5 1050.8,496.4 1052.0,496.2 1053.1,496.5 1054.1,496.8 1055.2,497.2 1056.2,497.7 1057.3,498.2 1058.4,498.2 1059.4,498.2 1060.5,498.2 1061.5,498.2 1062.6,498.2 1063.8,498.5 1064.9,499.0 1066.0,499.5 1067.2,500.2 1068.4,499.9 1069.6,499.6 1070.7,499.4 1071.9,499.2 1073.1,499.1 1074.1,499.3 1075.1,499.6 1076.1,500.0 1077.1,500.4 1078.1,500.8 1079.1,501.3 1080.1,500.9 1081.2,500.5 1082.2,500.1 1083.2,499.8 1084.2,499.5 1085.3,499.3 1086.3,499.1 1087.4,499.2 1088.4,499.5 1089.5,499.7 1090.5,500.0 1091.6,500.4 1092.8,500.0 1094.0,499.6 1095.1,499.3 1096.3,499.0 1097.5,498.8 1098.6,499.0 1099.6,499.3 1100.7,499.6 1101.7,500.0 1102.8,500.4 1104.0,499.9 1105.2,499.5 1106.3,499.1 1107.5,498.8 1108.7,498.5 1109.8,498.7 1111.0,498.9 1112.2,499.2 1113.3,499.5 1114.3,499.1 1115.3,498.8 1116.3,498.5 1117.3,498.2 1118.3,497.9 1119.3,497.8 1120.5,497.9 1121.7,498.2 1122.8,498.4 1124.0,498.7 1125.2,499.1 1126.4,498.5 1127.6,498.0 1128.7,497.6 1129.9,497.2 1131.1,496.9 1132.2,497.1 1133.2,497.3 1134.3,497.6 1135.3,497.9 1136.4,498.2 1137.5,497.8 1138.5,497.4 1139.6,497.0 1140.6,496.7 1141.7,496.5 1142.9,496.7 1144.1,497.0 1145.2,497.4 1146.4,497.8 1147.6,498.2 1148.7,497.8 1149.7,497.4 1150.8,497.0 1151.8,496.7 1152.9,496.5 1153.9,496.8 1155.0,497.1 1156.0,497.6 1157.1,498.1 1158.1,498.6 1159.2,498.6 1160.2,498.6 1161.3,498.6 1162.3,498.6 1163.4,498.5 1164.5,498.7 1165.6,498.9 1166.7,499.2 1167.8,499.5 1168.9,499.8 1170.0,500.2 1171.2,500.0 1172.4,499.8 1173.5,499.7 1174.7,499.6 1175.9,499.5 1177.0,499.8 1178.0,500.1 1179.1,500.5 1180.1,501.0 1181.2,501.4 1182.4,501.1 1183.6,500.8 1184.7,500.6 1185.9,500.3 1187.1,500.2 1188.2,500.4 1189.2,500.6 1190.3,500.9 1191.3,501.3 1192.4,501.7 1193.6,501.4 1194.8,501.2 1195.9,500.9 1197.1,500.7 1198.3,500.6 1199.4,500.7 1200.4,500.9 1201.5,501.0 1202.5,501.2 1203.6,501.4 1204.8,501.0 1206.0,500.5 1207.1,500.1 1208.3,499.8 1209.5,499.5 1210.6,499.7 1211.6,500.0 1212.7,500.4 1213.7,500.8 1214.8,501.3 1215.9,500.9 1216.9,500.6 1218.0,500.3 1219.0,500.0 1220.1,499.9 1221.3,500.1 1222.5,500.4 1223.6,500.8 1224.8,501.2 1226.0,501.7 1227.2,501.2 1228.4,500.8 1229.5,500.5 1230.7,500.2 1231.9,499.9 1233.0,500.1 1234.0,500.4 1235.1,500.7 1236.1,501.1 1237.2,501.4 1238.3,501.1 1239.3,500.8 1240.4,500.6 1241.4,500.3 1242.5,500.2 1243.5,500.4 1244.6,500.7 1245.6,501.0 1246.7,501.5 1247.7,501.9 1248.7,501.6 1249.7,501.4 1250.7,501.2 1251.7,501.0 1252.7,500.8 1253.7,500.7 1254.9,501.0 1256.1,501.3 1257.2,501.7 1258.4,502.1 1259.6,502.5 1260.8,502.2 1262.0,501.9 1263.1,501.6 1264.3,501.3 1265.5,501.2 1266.6,501.3 1267.6,501.6 1268.7,501.9 1269.7,502.2 1270.8,502.5 1271.9,502.2 1273.0,502.0 1274.1,501.7 1275.2,501.5 1276.3,501.3 1277.4,501.2 1278.6,501.4 1279.7,501.7 1280.8,502.1 1282.0,502.5 1283.1,501.9 1284.3,501.3 1285.4,500.7 1286.5,500.2 1287.6,499.8 1288.0,500.0 1289.0,499.9 1290.0,499.6 1291.0,499.1 1292.0,499.3 1293.0,498.7 1294.0,498.9 1295.0,499.4 1296.0,498.4 1297.0,498.7 1298.0,497.3 1299.0,497.2 1300.0,497.3 1301.0,498.5 1302.0,497.8 1303.0,499.0 1304.0,499.3 1305.0,498.7 1306.0,498.4 1307.0,497.9 1308.0,496.6 1309.0,496.0 1310.0,496.2 1311.0,497.2 1312.0,497.7 1313.0,497.7 1314.0,498.5 1315.0,498.4 1316.0,497.4 1317.0,497.1 1318.0,497.8 1319.0,497.5 1320.0,497.0 1321.0,496.4 1322.0,497.8 1323.0,497.7 1324.0,498.2 1325.0,497.7 1326.0,498.5 1327.0,498.7 1328.0,498.6 1329.0,498.5 1330.0,497.5 1331.0,498.0 1332.0,497.9 1333.0,496.9 1334.0,496.8 1335.0,496.8 1336.0,498.1 1337.0,497.0 1338.0,497.8 1339.0,497.6 1340.0,498.6 1341.0,497.7 1342.0,497.9 1343.0,497.0 1344.0,496.3 1345.0,497.1 1346.0,497.1 1346.0,508.9 1345.0,508.9 1344.0,507.4 1343.0,506.6 1342.0,505.5 1341.0,506.9 1340.0,508.0 1339.0,508.3 1338.0,509.0 1337.0,507.8 1336.0,507.9 1335.0,506.7 1334.0,507.3 1333.0,506.5 1332.0,506.9 1331.0,508.3 1330.0,508.6 1329.0,509.4 1328.0,509.7 1327.0,509.4 1326.0,508.0 1325.0,507.6 1324.0,507.2 1323.0,508.7 1322.0,508.5 1321.0,508.9 1320.0,510.0 1319.0,508.5 1318.0,508.1 1317.0,508.7 1316.0,507.7 1315.0,508.8 1314.0,510.3 1313.0,510.8 1312.0,510.4 1311.0,509.8 1310.0,508.6 1309.0,511.3 1308.0,512.2 1307.0,511.5 1306.0,510.8 1305.0,508.7 1304.0,508.5 1303.0,508.5 1302.0,508.6 1301.0,508.6 1300.0,508.4 1299.0,507.1 1298.0,506.7 1297.0,505.4 1296.0,506.3 1295.0,507.0 1294.0,507.0 1293.0,507.8 1292.0,507.6 1291.0,507.0 1290.0,506.1 1289.0,504.6 1288.0,504.4 1287.6,503.5 1286.4,503.9 1285.2,504.2 1283.9,504.5 1282.7,504.7 1281.7,504.6 1280.7,504.4 1279.7,504.2 1278.7,504.0 1277.7,503.7 1276.7,503.4 1275.7,503.7 1274.6,504.1 1273.6,504.3 1272.5,504.5 1271.5,504.7 1270.4,504.6 1269.3,504.4 1268.2,504.2 1267.1,504.0 1266.0,503.7 1264.9,503.4 1263.8,503.8 1262.8,504.2 1261.7,504.5 1260.7,504.7 1259.6,504.9 1258.5,504.8 1257.5,504.5 1256.4,504.3 1255.4,504.0 1254.3,503.6 1253.3,504.1 1252.2,504.5 1251.2,504.8 1250.1,505.1 1249.1,505.4 1248.1,505.2 1247.1,505.1 1246.1,504.8 1245.1,504.6 1244.1,504.3 1243.1,504.1 1242.1,504.5 1241.0,504.9 1240.0,505.3 1238.9,505.6 1237.9,505.8 1236.9,505.7 1235.9,505.5 1234.9,505.3 1233.9,505.0 1232.9,504.8 1231.9,504.5 1230.9,505.0 1229.8,505.5 1228.8,505.9 1227.7,506.2 1226.7,506.5 1225.7,506.3 1224.7,506.0 1223.7,505.7 1222.7,505.3 1221.7,504.9 1220.7,504.5 1219.5,505.0 1218.3,505.5 1217.2,505.9 1216.0,506.2 1214.8,506.5 1213.7,506.1 1212.7,505.7 1211.6,505.2 1210.6,504.7 1209.5,504.1 1208.5,504.5 1207.4,504.9 1206.4,505.3 1205.3,505.6 1204.3,505.8 1203.3,505.6 1202.3,505.3 1201.3,504.9 1200.3,504.5 1199.3,504.1 1198.3,503.6 1197.1,504.0 1195.9,504.3 1194.8,504.5 1193.6,504.8 1192.4,504.9 1191.3,504.8 1190.3,504.6 1189.2,504.4 1188.2,504.1 1187.1,503.9 1185.9,504.2 1184.7,504.6 1183.6,504.9 1182.4,505.2 1181.2,505.4 1180.0,505.2 1178.9,504.9 1177.8,504.6 1176.6,504.3 1175.5,504.7 1174.4,505.0 1173.3,505.3 1172.2,505.6 1171.1,505.8 1170.0,506.0 1169.0,506.1 1168.0,506.2 1167.0,506.3 1166.0,506.4 1165.0,506.5 1164.0,506.7 1162.8,507.0 1161.6,507.3 1160.5,507.6 1159.3,507.8 1158.1,508.0 1157.1,507.9 1156.0,507.8 1155.0,507.6 1153.9,507.5 1152.9,507.3 1151.8,507.8 1150.8,508.3 1149.7,508.7 1148.7,509.0 1147.6,509.3 1146.5,509.1 1145.5,508.8 1144.4,508.5 1143.4,508.1 1142.3,507.8 1141.2,508.3 1140.2,508.8 1139.1,509.3 1138.1,509.6 1137.0,509.9 1135.8,509.6 1134.6,509.2 1133.5,508.7 1132.3,508.1 1131.1,507.6 1129.9,507.9 1128.7,508.3 1127.6,508.6 1126.4,508.9 1125.2,509.1 1124.1,508.8 1123.0,508.5 1121.9,508.1 1120.8,507.6 1119.7,507.2 1118.6,506.7 1117.4,506.9 1116.2,507.1 1115.1,507.3 1113.9,507.4 1112.7,507.6 1111.6,507.4 1110.6,507.1 1109.5,506.8 1108.5,506.4 1107.4,506.0 1106.3,506.3 1105.3,506.6 1104.2,506.8 1103.2,507.0 1102.1,507.1 1100.9,507.0 1099.7,506.7 1098.6,506.4 1097.4,506.1 1096.2,505.8 1095.1,506.0 1094.1,506.1 1093.0,506.3 1092.0,506.4 1090.9,506.5 1089.7,506.3 1088.5,506.2 1087.4,506.0 1086.2,505.8 1085.0,505.6 1083.8,506.0 1082.6,506.3 1081.5,506.7 1080.3,506.9 1079.1,507.1 1078.0,507.0 1077.0,506.9 1075.9,506.7 1074.9,506.5 1073.8,506.2 1072.7,506.7 1071.7,507.1 1070.6,507.4 1069.6,507.8 1068.5,508.0 1067.4,507.8 1066.4,507.6 1065.3,507.4 1064.3,507.2 1063.2,506.9 1062.2,507.1 1061.1,507.3 1060.1,507.5 1059.0,507.6 1058.0,507.8 1056.9,507.6 1055.8,507.5 1054.7,507.3 1053.6,507.1 1052.5,506.9 1051.4,506.7 1050.2,507.0 1049.1,507.3 1048.0,507.6 1046.8,507.8 1045.7,507.6 1044.6,507.4 1043.5,507.2 1042.4,507.0 1041.3,506.7 1040.2,506.5 1039.0,506.9 1037.8,507.4 1036.7,507.8 1035.5,508.2 1034.3,508.4 1033.2,508.2 1032.2,507.9 1031.1,507.5 1030.1,507.1 1029.0,506.7 1027.9,507.2 1026.9,507.7 1025.8,508.2 1024.8,508.6 1023.7,508.8 1022.5,508.6 1021.3,508.2 1020.2,507.8 1019.0,507.4 1017.8,506.9 1016.6,507.1 1015.4,507.2 1014.3,507.4 1013.1,507.5 1011.9,507.6 1010.9,507.4 1009.9,507.2 1008.9,506.9 1007.9,506.7 1006.9,506.4 1005.9,506.0 1004.7,506.5 1003.5,506.8 1002.3,507.2 1001.1,507.4 1000.0,507.3 999.0,507.1 997.9,507.0 996.9,506.8 995.8,506.6 994.8,506.9 993.7,507.3 992.7,507.5 991.6,507.8 990.6,507.9 989.5,507.8 988.4,507.7 987.4,507.5 986.3,507.3 985.2,507.0 984.1,506.8 982.9,507.2 981.8,507.5 980.6,507.9 979.5,508.1 978.3,508.3 977.2,508.2 976.2,507.9 975.1,507.6 974.1,507.3 973.0,507.0 971.8,507.2 970.6,507.5 969.5,507.7 968.3,507.8 967.1,507.9 965.9,507.8 964.8,507.5 963.6,507.3 962.5,506.9 961.3,506.6 960.2,506.9 959.2,507.2 958.1,507.4 957.1,507.6 956.0,507.8 954.8,507.7 953.6,507.5 952.5,507.4 951.3,507.2 950.1,507.0 949.0,507.5 947.8,508.0 946.6,508.4 945.5,508.7 944.4,508.5 943.3,508.2 942.2,507.9 941.2,507.5 940.1,507.0 939.0,506.6 937.9,506.8 936.9,507.0 935.8,507.1 934.8,507.3 933.7,507.4 932.5,507.3 931.4,507.1 930.2,506.9 929.1,506.6 927.9,506.4 926.7,506.8 925.5,507.2 924.4,507.5 923.2,507.7 922.0,507.9 920.8,507.7 919.7,507.5 918.5,507.2 917.4,506.8 916.2,506.4 915.1,506.8 914.1,507.2 913.0,507.5 912.0,507.7 910.9,507.9 909.8,507.8 908.8,507.5 907.7,507.3 906.7,506.9 905.6,506.6 904.6,506.9 903.5,507.3 902.5,507.5 901.4,507.8 900.4,507.9 899.2,507.8 898.0,507.5 896.9,507.3 895.7,506.9 894.5,506.6 893.4,506.8 892.4,507.0 891.3,507.1 890.3,507.3 889.2,507.4 888.2,507.2 887.1,507.0 886.1,506.7 885.0,506.4 884.0,506.0 882.9,506.3 881.8,506.6 880.8,506.8 879.7,507.1 878.6,507.2 877.5,507.4 876.3,507.3 875.2,507.1 874.0,507.0 872.9,506.8 871.7,506.6 870.6,506.7 869.6,506.8 868.5,506.9 867.5,506.9 866.4,507.0 865.2,506.8 864.0,506.6 862.9,506.4 861.7,506.1 860.5,505.8 859.5,506.0 858.5,506.2 857.5,506.3 856.5,506.5 855.5,506.6 854.5,506.7 853.5,506.8 852.3,506.6 851.1,506.2 849.9,505.8 848.9,506.3 847.8,506.7 846.8,507.1 845.7,507.4 844.7,507.6 843.6,507.5 842.5,507.3 841.5,507.1 840.4,506.9 839.3,506.6 838.2,506.4 837.0,506.7 835.9,507.1 834.7,507.3 833.6,507.6 832.4,507.8 831.3,507.5 830.3,507.2 829.2,506.9 828.2,506.5 827.1,506.0 826.0,506.5 825.0,506.9 823.9,507.2 822.9,507.5 821.8,507.8 820.6,507.6 819.5,507.4 818.3,507.2 817.2,506.9 816.0,506.6 814.9,507.1 813.8,507.6 812.8,508.1 811.7,508.5 810.6,508.8 809.5,509.1 808.4,508.8 807.4,508.5 806.3,508.0 805.3,507.5 804.2,507.0 803.1,507.6 801.9,508.2 800.8,508.7 799.6,509.1 798.4,508.8 797.2,508.4 796.1,507.9 794.9,507.4 793.7,506.8 792.5,507.2 791.4,507.5 790.2,507.8 789.0,507.9 787.8,507.7 786.7,507.4 785.5,507.0 784.4,506.5 783.2,506.0 782.1,506.0 781.0,506.0 780.0,506.0 778.9,506.0 777.8,506.0 776.7,506.0 775.5,505.9 774.4,505.7 773.2,505.5 772.1,505.3 770.9,505.0 769.7,505.2 768.5,505.4 767.4,505.6 766.2,505.7 765.0,505.8 763.9,505.7 762.9,505.5 761.8,505.2 760.8,505.0 759.7,504.7 758.5,504.9 757.4,505.1 756.2,505.2 755.1,505.3 753.9,505.4 752.8,505.3 751.8,505.0 750.7,504.7 749.7,504.4 748.6,504.1 747.5,504.4 746.5,504.6 745.4,504.9 744.3,505.1 743.3,505.3 742.2,505.4 741.0,505.2 739.9,505.0 738.7,504.6 737.5,504.3 736.4,504.4 735.3,504.6 734.2,504.7 733.2,504.9 732.1,505.0 731.0,505.0 729.9,504.8 728.7,504.5 727.5,504.1 726.4,503.7 725.2,503.9 724.0,504.1 722.9,504.2 721.7,504.4 720.5,504.5 719.4,504.3 718.4,504.1 717.3,503.9 716.3,503.6 715.2,503.3 714.1,503.4 713.1,503.5 712.0,503.5 710.9,503.6 709.9,503.7 708.8,503.7 707.6,503.6 706.5,503.5 705.3,503.4 704.1,503.3 703.1,503.3 702.1,503.3 701.0,503.3 700.0,503.3 699.0,503.3 699.0,503.3" fill="#cc0000" filter="url(#bl)"/><line x1="17" y1="261.5" x2="1346" y2="261.5" stroke="#7a7090" stroke-width="1"/><line x1="17" y1="261.5" x2="1346" y2="261.5" stroke="#e4dce8" stroke-width="1" stroke-dasharray="3,3" stroke-dashoffset="1"/><line x1="17" y1="503.5" x2="1346" y2="503.5" stroke="#6a8078" stroke-width="1"/><line x1="17" y1="503.5" x2="1346" y2="503.5" stroke="#e0e4e4" stroke-width="1" stroke-dasharray="3,3" stroke-dashoffset="1"/><rect x="16" y="141" width="1" height="484" fill="#00ffff"/><rect x="17" y="148" width="5" height="1" fill="#ffffff"/><rect x="17" y="162" width="3" height="1" fill="#ffffff"/><rect x="17" y="177" width="5" height="1" fill="#ffffff"/><rect x="17" y="191" width="3" height="1" fill="#ffffff"/><rect x="17" y="205" width="5" height="1" fill="#ffffff"/><rect x="17" y="219" width="3" height="1" fill="#ffffff"/><rect x="17" y="233" width="5" height="1" fill="#ffffff"/><rect x="17" y="247" width="3" height="1" fill="#ffffff"/><rect x="17" y="261" width="5" height="1" fill="#ffffff"/><rect x="17" y="276" width="3" height="1" fill="#ffffff"/><rect x="17" y="290" width="5" height="1" fill="#ffffff"/><rect x="17" y="304" width="3" height="1" fill="#ffffff"/><rect x="17" y="318" width="5" height="1" fill="#ffffff"/><rect x="17" y="332" width="3" height="1" fill="#ffffff"/><rect x="17" y="347" width="5" height="1" fill="#ffffff"/><rect x="17" y="361" width="3" height="1" fill="#ffffff"/><rect x="17" y="375" width="5" height="1" fill="#ffffff"/><rect x="17" y="390" width="5" height="1" fill="#ffffff"/><rect x="17" y="404" width="3" height="1" fill="#ffffff"/><rect x="17" y="419" width="5" height="1" fill="#ffffff"/><rect x="17" y="433" width="3" height="1" fill="#ffffff"/><rect x="17" y="447" width="5" height="1" fill="#ffffff"/><rect x="17" y="462" width="3" height="1" fill="#ffffff"/><rect x="17" y="476" width="5" height="1" fill="#ffffff"/><rect x="17" y="489" width="3" height="1" fill="#ffffff"/><rect x="17" y="503" width="5" height="1" fill="#ffffff"/><rect x="17" y="517" width="3" height="1" fill="#ffffff"/><rect x="17" y="532" width="5" height="1" fill="#ffffff"/><rect x="17" y="546" width="3" height="1" fill="#ffffff"/><rect x="17" y="561" width="5" height="1" fill="#ffffff"/><rect x="17" y="574" width="3" height="1" fill="#ffffff"/><rect x="17" y="588" width="5" height="1" fill="#ffffff"/><rect x="17" y="603" width="3" height="1" fill="#ffffff"/><rect x="17" y="617" width="5" height="1" fill="#ffffff"/><rect x="17" y="142" width="1" height="1" fill="#e8e0e0"/><rect x="17" y="145" width="1" height="1" fill="#e8e0e0"/><rect x="17" y="147" width="1" height="1" fill="#e8e0e0"/><rect x="17" y="150" width="1" height="1" fill="#e8e0e0"/><rect x="17" y="153" width="1" height="1" fill="#e8e0e0"/><rect x="17" y="156" width="1" height="1" fill="#e8e0e0"/><rect x="17" y="159" width="1" height="1" fill="#e8e0e0"/><rect x="17" y="162" width="1" height="1" fill="#e8e0e0"/><rect x="17" y="165" width="1" height="1" fill="#e8e0e0"/><rect x="17" y="167" width="1" height="1" fill="#e8e0e0"/><rect x="17" y="170" width="1" height="1" fill="#e8e0e0"/><rect x="17" y="173" width="1" height="1" fill="#e8e0e0"/><rect x="17" y="176" width="1" height="1" fill="#e8e0e0"/><rect x="17" y="179" width="1" height="1" fill="#e8e0e0"/><rect x="17" y="182" width="1" height="1" fill="#e8e0e0"/><rect x="17" y="184" width="1" height="1" fill="#e8e0e0"/><rect x="17" y="187" width="1" height="1" fill="#e8e0e0"/><rect x="17" y="190" width="1" height="1" fill="#e8e0e0"/><rect x="17" y="193" width="1" height="1" fill="#e8e0e0"/><rect x="17" y="196" width="1" height="1" fill="#e8e0e0"/><rect x="17" y="199" width="1" height="1" fill="#e8e0e0"/><rect x="17" y="201" width="1" height="1" fill="#e8e0e0"/><rect x="17" y="204" width="1" height="1" fill="#e8e0e0"/><rect x="17" y="207" width="1" height="1" fill="#e8e0e0"/><rect x="17" y="210" width="1" height="1" fill="#e8e0e0"/><rect x="17" y="213" width="1" height="1" fill="#e8e0e0"/><rect x="17" y="216" width="1" height="1" fill="#e8e0e0"/><rect x="17" y="218" width="1" height="1" fill="#e8e0e0"/><rect x="17" y="221" width="1" height="1" fill="#e8e0e0"/><rect x="17" y="224" width="1" height="1" fill="#e8e0e0"/><rect x="17" y="227" width="1" height="1" fill="#e8e0e0"/><rect x="17" y="230" width="1" height="1" fill="#e8e0e0"/><rect x="17" y="233" width="1" height="1" fill="#e8e0e0"/><rect x="17" y="235" width="1" height="1" fill="#e8e0e0"/><rect x="17" y="238" width="1" height="1" fill="#e8e0e0"/><rect x="17" y="241" width="1" height="1" fill="#e8e0e0"/><rect x="17" y="244" width="1" height="1" fill="#e8e0e0"/><rect x="17" y="247" width="1" height="1" fill="#e8e0e0"/><rect x="17" y="250" width="1" height="1" fill="#e8e0e0"/><rect x="17" y="252" width="1" height="1" fill="#e8e0e0"/><rect x="17" y="255" width="1" height="1" fill="#e8e0e0"/><rect x="17" y="258" width="1" height="1" fill="#e8e0e0"/><rect x="17" y="261" width="1" height="1" fill="#e8e0e0"/><rect x="17" y="264" width="1" height="1" fill="#e8e0e0"/><rect x="17" y="267" width="1" height="1" fill="#e8e0e0"/><rect x="17" y="270" width="1" height="1" fill="#e8e0e0"/><rect x="17" y="272" width="1" height="1" fill="#e8e0e0"/><rect x="17" y="275" width="1" height="1" fill="#e8e0e0"/><rect x="17" y="278" width="1" height="1" fill="#e8e0e0"/><rect x="17" y="281" width="1" height="1" fill="#e8e0e0"/><rect x="17" y="284" width="1" height="1" fill="#e8e0e0"/><rect x="17" y="287" width="1" height="1" fill="#e8e0e0"/><rect x="17" y="289" width="1" height="1" fill="#e8e0e0"/><rect x="17" y="292" width="1" height="1" fill="#e8e0e0"/><rect x="17" y="295" width="1" height="1" fill="#e8e0e0"/><rect x="17" y="298" width="1" height="1" fill="#e8e0e0"/><rect x="17" y="301" width="1" height="1" fill="#e8e0e0"/><rect x="17" y="304" width="1" height="1" fill="#e8e0e0"/><rect x="17" y="306" width="1" height="1" fill="#e8e0e0"/><rect x="17" y="309" width="1" height="1" fill="#e8e0e0"/><rect x="17" y="312" width="1" height="1" fill="#e8e0e0"/><rect x="17" y="315" width="1" height="1" fill="#e8e0e0"/><rect x="17" y="318" width="1" height="1" fill="#e8e0e0"/><rect x="17" y="321" width="1" height="1" fill="#e8e0e0"/><rect x="17" y="323" width="1" height="1" fill="#e8e0e0"/><rect x="17" y="326" width="1" height="1" fill="#e8e0e0"/><rect x="17" y="329" width="1" height="1" fill="#e8e0e0"/><rect x="17" y="332" width="1" height="1" fill="#e8e0e0"/><rect x="17" y="335" width="1" height="1" fill="#e8e0e0"/><rect x="17" y="338" width="1" height="1" fill="#e8e0e0"/><rect x="17" y="340" width="1" height="1" fill="#e8e0e0"/><rect x="17" y="343" width="1" height="1" fill="#e8e0e0"/><rect x="17" y="346" width="1" height="1" fill="#e8e0e0"/><rect x="17" y="349" width="1" height="1" fill="#e8e0e0"/><rect x="17" y="352" width="1" height="1" fill="#e8e0e0"/><rect x="17" y="355" width="1" height="1" fill="#e8e0e0"/><rect x="17" y="357" width="1" height="1" fill="#e8e0e0"/><rect x="17" y="360" width="1" height="1" fill="#e8e0e0"/><rect x="17" y="363" width="1" height="1" fill="#e8e0e0"/><rect x="17" y="366" width="1" height="1" fill="#e8e0e0"/><rect x="17" y="369" width="1" height="1" fill="#e8e0e0"/><rect x="17" y="372" width="1" height="1" fill="#e8e0e0"/><rect x="17" y="375" width="1" height="1" fill="#e8e0e0"/><rect x="17" y="377" width="1" height="1" fill="#e8e0e0"/><rect x="17" y="380" width="1" height="1" fill="#e8e0e0"/><rect x="17" y="384" width="1" height="1" fill="#e8e0e0"/><rect x="17" y="387" width="1" height="1" fill="#e8e0e0"/><rect x="17" y="389" width="1" height="1" fill="#e8e0e0"/><rect x="17" y="392" width="1" height="1" fill="#e8e0e0"/><rect x="17" y="395" width="1" height="1" fill="#e8e0e0"/><rect x="17" y="398" width="1" height="1" fill="#e8e0e0"/><rect x="17" y="401" width="1" height="1" fill="#e8e0e0"/><rect x="17" y="404" width="1" height="1" fill="#e8e0e0"/><rect x="17" y="407" width="1" height="1" fill="#e8e0e0"/><rect x="17" y="409" width="1" height="1" fill="#e8e0e0"/><rect x="17" y="412" width="1" height="1" fill="#e8e0e0"/><rect x="17" y="415" width="1" height="1" fill="#e8e0e0"/><rect x="17" y="418" width="1" height="1" fill="#e8e0e0"/><rect x="17" y="421" width="1" height="1" fill="#e8e0e0"/><rect x="17" y="424" width="1" height="1" fill="#e8e0e0"/><rect x="17" y="426" width="1" height="1" fill="#e8e0e0"/><rect x="17" y="429" width="1" height="1" fill="#e8e0e0"/><rect x="17" y="432" width="1" height="1" fill="#e8e0e0"/><rect x="17" y="435" width="1" height="1" fill="#e8e0e0"/><rect x="17" y="438" width="1" height="1" fill="#e8e0e0"/><rect x="17" y="441" width="1" height="1" fill="#e8e0e0"/><rect x="17" y="443" width="1" height="1" fill="#e8e0e0"/><rect x="17" y="446" width="1" height="1" fill="#e8e0e0"/><rect x="17" y="449" width="1" height="1" fill="#e8e0e0"/><rect x="17" y="452" width="1" height="1" fill="#e8e0e0"/><rect x="17" y="455" width="1" height="1" fill="#e8e0e0"/><rect x="17" y="458" width="1" height="1" fill="#e8e0e0"/><rect x="17" y="460" width="1" height="1" fill="#e8e0e0"/><rect x="17" y="463" width="1" height="1" fill="#e8e0e0"/><rect x="17" y="466" width="1" height="1" fill="#e8e0e0"/><rect x="17" y="469" width="1" height="1" fill="#e8e0e0"/><rect x="17" y="472" width="1" height="1" fill="#e8e0e0"/><rect x="17" y="475" width="1" height="1" fill="#e8e0e0"/><rect x="17" y="477" width="1" height="1" fill="#e8e0e0"/><rect x="17" y="480" width="1" height="1" fill="#e8e0e0"/><rect x="17" y="483" width="1" height="1" fill="#e8e0e0"/><rect x="17" y="486" width="1" height="1" fill="#e8e0e0"/><rect x="17" y="489" width="1" height="1" fill="#e8e0e0"/><rect x="17" y="492" width="1" height="1" fill="#e8e0e0"/><rect x="17" y="494" width="1" height="1" fill="#e8e0e0"/><rect x="17" y="497" width="1" height="1" fill="#e8e0e0"/><rect x="17" y="500" width="1" height="1" fill="#e8e0e0"/><rect x="17" y="503" width="1" height="1" fill="#e8e0e0"/><rect x="17" y="506" width="1" height="1" fill="#e8e0e0"/><rect x="17" y="509" width="1" height="1" fill="#e8e0e0"/><rect x="17" y="512" width="1" height="1" fill="#e8e0e0"/><rect x="17" y="514" width="1" height="1" fill="#e8e0e0"/><rect x="17" y="517" width="1" height="1" fill="#e8e0e0"/><rect x="17" y="520" width="1" height="1" fill="#e8e0e0"/><rect x="17" y="523" width="1" height="1" fill="#e8e0e0"/><rect x="17" y="526" width="1" height="1" fill="#e8e0e0"/><rect x="17" y="529" width="1" height="1" fill="#e8e0e0"/><rect x="17" y="531" width="1" height="1" fill="#e8e0e0"/><rect x="17" y="534" width="1" height="1" fill="#e8e0e0"/><rect x="17" y="537" width="1" height="1" fill="#e8e0e0"/><rect x="17" y="540" width="1" height="1" fill="#e8e0e0"/><rect x="17" y="543" width="1" height="1" fill="#e8e0e0"/><rect x="17" y="546" width="1" height="1" fill="#e8e0e0"/><rect x="17" y="548" width="1" height="1" fill="#e8e0e0"/><rect x="17" y="551" width="1" height="1" fill="#e8e0e0"/><rect x="17" y="554" width="1" height="1" fill="#e8e0e0"/><rect x="17" y="557" width="1" height="1" fill="#e8e0e0"/><rect x="17" y="560" width="1" height="1" fill="#e8e0e0"/><rect x="17" y="563" width="1" height="1" fill="#e8e0e0"/><rect x="17" y="565" width="1" height="1" fill="#e8e0e0"/><rect x="17" y="568" width="1" height="1" fill="#e8e0e0"/><rect x="17" y="571" width="1" height="1" fill="#e8e0e0"/><rect x="17" y="574" width="1" height="1" fill="#e8e0e0"/><rect x="17" y="577" width="1" height="1" fill="#e8e0e0"/><rect x="17" y="580" width="1" height="1" fill="#e8e0e0"/><rect x="17" y="582" width="1" height="1" fill="#e8e0e0"/><rect x="17" y="585" width="1" height="1" fill="#e8e0e0"/><rect x="17" y="588" width="1" height="1" fill="#e8e0e0"/><rect x="17" y="591" width="1" height="1" fill="#e8e0e0"/><rect x="17" y="594" width="1" height="1" fill="#e8e0e0"/><rect x="17" y="597" width="1" height="1" fill="#e8e0e0"/><rect x="17" y="599" width="1" height="1" fill="#e8e0e0"/><rect x="17" y="602" width="1" height="1" fill="#e8e0e0"/><rect x="17" y="605" width="1" height="1" fill="#e8e0e0"/><rect x="17" y="608" width="1" height="1" fill="#e8e0e0"/><rect x="17" y="611" width="1" height="1" fill="#e8e0e0"/><rect x="17" y="614" width="1" height="1" fill="#e8e0e0"/><rect x="17" y="617" width="1" height="1" fill="#e8e0e0"/><rect x="17" y="619" width="1" height="1" fill="#e8e0e0"/><rect x="17" y="622" width="1" height="1" fill="#e8e0e0"/></svg><div class="a" style="left:0px;top:0px;width:1366px;height:18px;background:linear-gradient(90deg,#0a246a,#a6caf0)"></div><svg class="a" style="left:2px;top:2px" width="16" height="14" viewBox="0 0 16 14"><polyline points="1,4 4.5,8 8,2.5 11.5,8 15,2" fill="none" stroke="#e8c800" stroke-width="2.6" stroke-linejoin="miter"/><polyline points="1,4 4.5,8 8,2.5 11.5,8 15,2" fill="none" stroke="#fff060" stroke-width="1" /><rect x="1" y="11" width="4" height="2" fill="#00e000"/><rect x="5" y="11" width="5" height="2" fill="#f0f000"/><rect x="10" y="11" width="2" height="2" fill="#ff8000"/><rect x="12" y="11" width="4" height="2" fill="#f00000"/></svg><div class="t" style="left:20px;top:3px;font-size:12px;color:#fff;font-weight:bold;">GoldWave - [04_Dick's_Maggot_0.wav]</div><div class="a" style="left:1314px;top:2px;width:16px;height:14px;background:#404040"></div><div class="a" style="left:1314px;top:2px;width:15px;height:13px;background:#d4d0c8"></div><div class="a" style="left:1315px;top:3px;width:14px;height:12px;background:#808080"></div><div class="a" style="left:1315px;top:3px;width:13px;height:11px;background:#fff"></div><div class="a" style="left:1316px;top:4px;width:12px;height:10px;background:#d4d0c8"></div><div class="a" style="left:1318px;top:11px;width:6px;height:2px;background:#000"></div><div class="a" style="left:1330px;top:2px;width:16px;height:14px;background:#404040"></div><div class="a" style="left:1330px;top:2px;width:15px;height:13px;background:#d4d0c8"></div><div class="a" style="left:1331px;top:3px;width:14px;height:12px;background:#808080"></div><div class="a" style="left:1331px;top:3px;width:13px;height:11px;background:#fff"></div><div class="a" style="left:1332px;top:4px;width:12px;height:10px;background:#d4d0c8"></div><svg class="a" style="left:1330px;top:2px" width="16" height="14"><rect x="5.5" y="2.5" width="6" height="5" fill="none" stroke="#000"/><rect x="5" y="2" width="7" height="2" fill="#000"/><rect x="3.5" y="5.5" width="6" height="6" fill="#d4d0c8" stroke="#000"/><rect x="3" y="5" width="7" height="2" fill="#000"/></svg><div class="a" style="left:1348px;top:2px;width:16px;height:14px;background:#404040"></div><div class="a" style="left:1348px;top:2px;width:15px;height:13px;background:#d4d0c8"></div><div class="a" style="left:1349px;top:3px;width:14px;height:12px;background:#808080"></div><div class="a" style="left:1349px;top:3px;width:13px;height:11px;background:#fff"></div><div class="a" style="left:1350px;top:4px;width:12px;height:10px;background:#d4d0c8"></div><svg class="a" style="left:1348px;top:2px" width="16" height="14"><path d="M4.5,3.5 L11.5,10.5 M11.5,3.5 L4.5,10.5" stroke="#000" stroke-width="1.6"/></svg><svg class="a" style="left:4px;top:21px" width="16" height="14" viewBox="0 0 16 14"><polyline points="1,4 4.5,8 8,2.5 11.5,8 15,2" fill="none" stroke="#e8c800" stroke-width="2.6" stroke-linejoin="miter"/><polyline points="1,4 4.5,8 8,2.5 11.5,8 15,2" fill="none" stroke="#fff060" stroke-width="1" /><rect x="1" y="11" width="4" height="2" fill="#00e000"/><rect x="5" y="11" width="5" height="2" fill="#f0f000"/><rect x="10" y="11" width="2" height="2" fill="#ff8000"/><rect x="12" y="11" width="4" height="2" fill="#f00000"/></svg><div class="t" style="left:25px;top:23px;font-size:11px;color:#000;font-weight:normal;">File</div><div class="t" style="left:53px;top:23px;font-size:11px;color:#000;font-weight:normal;">Edit</div><div class="t" style="left:83px;top:23px;font-size:11px;color:#000;font-weight:normal;">Effect</div><div class="t" style="left:124px;top:23px;font-size:11px;color:#000;font-weight:normal;">View</div><div class="t" style="left:158px;top:23px;font-size:11px;color:#000;font-weight:normal;">Tool</div><div class="t" style="left:190px;top:23px;font-size:11px;color:#000;font-weight:normal;">Options</div><div class="t" style="left:239px;top:23px;font-size:11px;color:#000;font-weight:normal;">Window</div><div class="t" style="left:289px;top:23px;font-size:11px;color:#000;font-weight:normal;">Help</div><div class="a" style="left:1314px;top:21px;width:16px;height:14px;background:#404040"></div><div class="a" style="left:1314px;top:21px;width:15px;height:13px;background:#d4d0c8"></div><div class="a" style="left:1315px;top:22px;width:14px;height:12px;background:#808080"></div><div class="a" style="left:1315px;top:22px;width:13px;height:11px;background:#fff"></div><div class="a" style="left:1316px;top:23px;width:12px;height:10px;background:#d4d0c8"></div><div class="a" style="left:1318px;top:30px;width:6px;height:2px;background:#000"></div><div class="a" style="left:1330px;top:21px;width:16px;height:14px;background:#404040"></div><div class="a" style="left:1330px;top:21px;width:15px;height:13px;background:#d4d0c8"></div><div class="a" style="left:1331px;top:22px;width:14px;height:12px;background:#808080"></div><div class="a" style="left:1331px;top:22px;width:13px;height:11px;background:#fff"></div><div class="a" style="left:1332px;top:23px;width:12px;height:10px;background:#d4d0c8"></div><svg class="a" style="left:1330px;top:21px" width="16" height="14"><rect x="5.5" y="2.5" width="6" height="5" fill="none" stroke="#000"/><rect x="5" y="2" width="7" height="2" fill="#000"/><rect x="3.5" y="5.5" width="6" height="6" fill="#d4d0c8" stroke="#000"/><rect x="3" y="5" width="7" height="2" fill="#000"/></svg><div class="a" style="left:1348px;top:21px;width:16px;height:14px;background:#404040"></div><div class="a" style="left:1348px;top:21px;width:15px;height:13px;background:#d4d0c8"></div><div class="a" style="left:1349px;top:22px;width:14px;height:12px;background:#808080"></div><div class="a" style="left:1349px;top:22px;width:13px;height:11px;background:#fff"></div><div class="a" style="left:1350px;top:23px;width:12px;height:10px;background:#d4d0c8"></div><svg class="a" style="left:1348px;top:21px" width="16" height="14"><path d="M4.5,3.5 L11.5,10.5 M11.5,3.5 L4.5,10.5" stroke="#000" stroke-width="1.6"/></svg><div class="a" style="left:0px;top:38px;width:1366px;height:1px;background:#808080"></div><div class="a" style="left:0px;top:39px;width:1366px;height:1px;background:#fff"></div><div class="a" style="left:0px;top:40px;width:966px;height:38px;background:#808080"></div><div class="a" style="left:0px;top:40px;width:965px;height:37px;background:#fff"></div><div class="a" style="left:1px;top:41px;width:964px;height:36px;background:#d4d0c8"></div><div class="a" style="left:3px;top:42px;width:1px;height:34px;background:#fff"></div><div class="a" style="left:4px;top:42px;width:1px;height:34px;background:#d4d0c8"></div><div class="a" style="left:5px;top:42px;width:1px;height:34px;background:#808080"></div><div class="a" style="left:3px;top:75px;width:3px;height:1px;background:#808080"></div><div class="a" style="left:3px;top:42px;width:3px;height:1px;background:#fff"></div><div class="a" style="left:11px;top:42px;width:34px;height:34px;background:#808080"></div><div class="a" style="left:11px;top:42px;width:33px;height:33px;background:#fff"></div><div class="a" style="left:12px;top:43px;width:32px;height:32px;background:linear-gradient(180deg,#edebe5 0%,#dcd9d2 45%,#bcb9b0 100%)"></div><svg class="a" style="left:20px;top:45px" width="16" height="16" viewBox="0 0 16 16"><path d="M3.5,1.5 H10 L13.5,5 V15.5 H3.5 Z" fill="#e8f0ff" stroke="#9c9cd8"/><path d="M10,1.5 V5 H13.5" fill="#b0b8c8" stroke="#9c9cd8"/><rect x="4" y="6" width="9" height="9" fill="#f4f8ff"/></svg><div class="t" style="left:11px;top:63px;width:34px;text-align:center;font-size:11px;color:#000">New</div><div class="a" style="left:45px;top:42px;width:34px;height:34px;background:#808080"></div><div class="a" style="left:45px;top:42px;width:33px;height:33px;background:#fff"></div><div class="a" style="left:46px;top:43px;width:32px;height:32px;background:linear-gradient(180deg,#edebe5 0%,#dcd9d2 45%,#bcb9b0 100%)"></div><svg class="a" style="left:54px;top:45px" width="16" height="16" viewBox="0 0 16 16"><path d="M1.5,6 H5 L6.5,4.5 H10 V7 H14.5 L12.5,14.5 H1.5 Z" fill="#f8dc80" stroke="#d0a020"/><path d="M1.5,14.5 L3.5,8.5 H15 L12.5,14.5 Z" fill="#fbe9a0" stroke="#d0a020"/><path d="M6,1 C9,1 11,2 12,6" stroke="#30a030" stroke-width="2.4" fill="none"/><path d="M9,5 L15,5 L12,10 Z" fill="#50c040" stroke="#208020" stroke-width="0.6"/></svg><div class="t" style="left:45px;top:63px;width:34px;text-align:center;font-size:11px;color:#000">Open</div><div class="a" style="left:79px;top:42px;width:34px;height:34px;background:#808080"></div><div class="a" style="left:79px;top:42px;width:33px;height:33px;background:#fff"></div><div class="a" style="left:80px;top:43px;width:32px;height:32px;background:linear-gradient(180deg,#edebe5 0%,#dcd9d2 45%,#bcb9b0 100%)"></div><svg class="a" style="left:88px;top:45px" width="16" height="16" viewBox="0 0 16 16"><path d="M1.5,1.5 H14.5 V14.5 H1.5 Z" fill="#5050c8" stroke="#3838a8"/><rect x="4" y="1.5" width="8" height="7" fill="#fff"/><rect x="5" y="3" width="6" height="1" fill="#b0b0b0"/><rect x="5" y="5" width="6" height="1" fill="#b0b0b0"/><rect x="5" y="10.5" width="6" height="4" fill="#e8e8e8"/><rect x="5.5" y="11" width="2" height="3.5" fill="#2020a0"/></svg><div class="t" style="left:79px;top:63px;width:34px;text-align:center;font-size:11px;color:#000">Save</div><div class="a" style="left:120px;top:42px;width:34px;height:34px;background:#808080"></div><div class="a" style="left:120px;top:42px;width:33px;height:33px;background:#fff"></div><div class="a" style="left:121px;top:43px;width:32px;height:32px;background:linear-gradient(180deg,#edebe5 0%,#dcd9d2 45%,#bcb9b0 100%)"></div><svg class="a" style="left:129px;top:45px" width="16" height="16" viewBox="0 0 16 16"><path d="M3,9 C2,3 13,1 13,7 C13,11 9,12 6.5,13" stroke="#0050d8" stroke-width="2.6" fill="none"/><path d="M1,4 L1,11 L7,10 Z" fill="#0050d8"/></svg><div class="t" style="left:120px;top:63px;width:34px;text-align:center;font-size:11px;color:#000">Undo</div><svg class="a" style="left:163px;top:45px" width="16" height="16" viewBox="0 0 16 16"><path d="M13,9 C14,3 3,1 3,7 C3,11 7,12 9.5,13" stroke="#a8a8a8" stroke-width="2.6" fill="none"/><path d="M15,4 L15,11 L9,10 Z" fill="#a8a8a8"/></svg><div class="t" style="left:154px;top:63px;width:34px;text-align:center;font-size:11px;color:#9c9c9c">Redo</div><div class="a" style="left:188px;top:42px;width:34px;height:34px;background:#808080"></div><div class="a" style="left:188px;top:42px;width:33px;height:33px;background:#fff"></div><div class="a" style="left:189px;top:43px;width:32px;height:32px;background:linear-gradient(180deg,#edebe5 0%,#dcd9d2 45%,#bcb9b0 100%)"></div><svg class="a" style="left:197px;top:45px" width="16" height="16" viewBox="0 0 16 16"><path d="M5,1 L9,10 M11,1 L7,10" stroke="#8090a0" stroke-width="1.2"/><circle cx="5.5" cy="12.5" r="2.3" fill="none" stroke="#0030c0" stroke-width="1.8"/><circle cx="10.5" cy="11.5" r="2.3" fill="none" stroke="#0030c0" stroke-width="1.8"/></svg><div class="t" style="left:188px;top:63px;width:34px;text-align:center;font-size:11px;color:#000">Cut</div><div class="a" style="left:222px;top:42px;width:34px;height:34px;background:#808080"></div><div class="a" style="left:222px;top:42px;width:33px;height:33px;background:#fff"></div><div class="a" style="left:223px;top:43px;width:32px;height:32px;background:linear-gradient(180deg,#edebe5 0%,#dcd9d2 45%,#bcb9b0 100%)"></div><svg class="a" style="left:231px;top:45px" width="16" height="16" viewBox="0 0 16 16"><path d="M1.5,1.5 H6 L8.5,4 V11.5 H1.5 Z" fill="#f0f4ff" stroke="#9c9cd8"/><path d="M6.5,4.5 H11 L14.5,8 V15.5 H6.5 Z" fill="#f0f4ff" stroke="#9c9cd8"/><path d="M3,5.5H6 M3,7.5H6 M8,9.5H13 M8,11.5H13 M8,13.5H13" stroke="#5060c0" stroke-width="0.8"/></svg><div class="t" style="left:222px;top:63px;width:34px;text-align:center;font-size:11px;color:#000">Copy</div><svg class="a" style="left:265px;top:45px" width="16" height="16" viewBox="0 0 16 16"><rect x="2.5" y="2.5" width="10" height="13" rx="1.5" fill="#b8b8b8" stroke="#a0a0a0"/><rect x="5" y="1" width="5" height="3" fill="#a0a0a0"/><rect x="6.5" y="7.5" width="8" height="8" fill="#c8c8c8" stroke="#a0a0a0"/><path d="M8,10H13 M8,12H13" stroke="#a0a0a0"/></svg><div class="t" style="left:256px;top:63px;width:34px;text-align:center;font-size:11px;color:#9c9c9c">Paste</div><svg class="a" style="left:299px;top:45px" width="16" height="16" viewBox="0 0 16 16"><rect x="2.5" y="2.5" width="10" height="13" rx="1.5" fill="#b8b8b8" stroke="#a0a0a0"/><rect x="5" y="1" width="5" height="3" fill="#a0a0a0"/><rect x="4.5" y="6.5" width="10" height="9" fill="#c8c8c8" stroke="#a0a0a0"/><rect x="4.5" y="6.5" width="10" height="2" fill="#a0a0a0"/></svg><div class="t" style="left:290px;top:63px;width:34px;text-align:center;font-size:11px;color:#9c9c9c">P.New</div><svg class="a" style="left:333px;top:45px" width="16" height="16" viewBox="0 0 16 16"><rect x="2.5" y="2.5" width="10" height="13" rx="1.5" fill="#b8b8b8" stroke="#a0a0a0"/><rect x="5" y="1" width="5" height="3" fill="#a0a0a0"/><rect x="7.5" y="7.5" width="7" height="8" fill="#c8c8c8" stroke="#a0a0a0"/><path d="M11,9V15 M8,12H14" stroke="#989898" stroke-width="1.6"/></svg><div class="t" style="left:324px;top:63px;width:34px;text-align:center;font-size:11px;color:#9c9c9c">Mix</div><svg class="a" style="left:367px;top:45px" width="16" height="16" viewBox="0 0 16 16"><rect x="2.5" y="2.5" width="10" height="13" rx="1.5" fill="#b8b8b8" stroke="#a0a0a0"/><rect x="5" y="1" width="5" height="3" fill="#a0a0a0"/><rect x="7.5" y="7.5" width="7" height="8" fill="#c8c8c8" stroke="#a0a0a0"/><path d="M8.5,10L13.5,15 M13.5,10L8.5,15" stroke="#989898" stroke-width="1.2"/></svg><div class="t" style="left:358px;top:63px;width:34px;text-align:center;font-size:11px;color:#9c9c9c">Repl</div><div class="a" style="left:392px;top:42px;width:34px;height:34px;background:#808080"></div><div class="a" style="left:392px;top:42px;width:33px;height:33px;background:#fff"></div><div class="a" style="left:393px;top:43px;width:32px;height:32px;background:linear-gradient(180deg,#edebe5 0%,#dcd9d2 45%,#bcb9b0 100%)"></div><svg class="a" style="left:401px;top:45px" width="16" height="16" viewBox="0 0 16 16"><rect x="1" y="1" width="2" height="14" fill="#00e0e8"/><rect x="13" y="1" width="2" height="14" fill="#00e0e8"/><path d="M3.5,3 L12.5,13 M12.5,3 L3.5,13" stroke="#900000" stroke-width="1.6"/></svg><div class="t" style="left:392px;top:63px;width:34px;text-align:center;font-size:11px;color:#000">Del</div><svg class="a" style="left:435px;top:45px" width="16" height="16" viewBox="0 0 16 16"><path d="M6.5,1V14 M9.5,1V14" stroke="#a0a0a0" stroke-width="1.5"/><path d="M0.5,5 L5,9.5 M5,5 L0.5,9.5 M11,5 L15.5,9.5 M15.5,5 L11,9.5" stroke="#a0a0a0" stroke-width="1.8"/><path d="M4.5,7.25H6.5 M9.5,7.25H11.5" stroke="#a0a0a0" stroke-width="1.2"/></svg><div class="t" style="left:426px;top:63px;width:34px;text-align:center;font-size:11px;color:#9c9c9c">Trim</div><div class="a" style="left:467px;top:42px;width:34px;height:34px;background:#808080"></div><div class="a" style="left:467px;top:42px;width:33px;height:33px;background:#fff"></div><div class="a" style="left:468px;top:43px;width:32px;height:32px;background:linear-gradient(180deg,#edebe5 0%,#dcd9d2 45%,#bcb9b0 100%)"></div><svg class="a" style="left:476px;top:45px" width="16" height="16" viewBox="0 0 16 16"><rect x="1" y="1" width="2" height="15" fill="#00e0e8"/><rect x="13" y="1" width="2" height="15" fill="#00e0e8"/><rect x="3.5" y="2.5" width="9" height="11" fill="#e0e8ff" stroke="#0000d0"/><rect x="3.5" y="2.5" width="9" height="2" fill="#0000d0"/><rect x="10.5" y="3" width="1.5" height="1" fill="#ff3030"/></svg><div class="t" style="left:467px;top:63px;width:34px;text-align:center;font-size:11px;color:#000;letter-spacing:-0.4px">Sel Vw</div><svg class="a" style="left:510px;top:45px" width="16" height="16" viewBox="0 0 16 16"><path d="M3,2V15 M13,2V15" stroke="#a8a8a8" stroke-width="1.6"/><rect x="4.5" y="2.5" width="7" height="11" fill="#c0c0c0" stroke="#a8a8a8"/><path d="M6,6H10 M6,8H10 M6,10H10" stroke="#a0a0a0"/></svg><div class="t" style="left:501px;top:63px;width:34px;text-align:center;font-size:11px;color:#9c9c9c;letter-spacing:-0.4px">Sel All</div><div class="a" style="left:535px;top:42px;width:34px;height:34px;background:#808080"></div><div class="a" style="left:535px;top:42px;width:33px;height:33px;background:#fff"></div><div class="a" style="left:536px;top:43px;width:32px;height:32px;background:linear-gradient(180deg,#edebe5 0%,#dcd9d2 45%,#bcb9b0 100%)"></div><svg class="a" style="left:544px;top:45px" width="16" height="16" viewBox="0 0 16 16"><rect x="1.5" y="2" width="1.6" height="13" fill="#00e0e8"/><rect x="12.9" y="2" width="1.6" height="13" fill="#00e0e8"/><text x="8" y="12.5" font-family="Liberation Sans" font-weight="bold" font-size="13" text-anchor="middle" fill="#ffff00" stroke="#000" stroke-width="1.2" paint-order="stroke">?</text></svg><div class="t" style="left:535px;top:63px;width:34px;text-align:center;font-size:11px;color:#000">Set</div><div class="a" style="left:576px;top:42px;width:34px;height:34px;background:#808080"></div><div class="a" style="left:576px;top:42px;width:33px;height:33px;background:#fff"></div><div class="a" style="left:577px;top:43px;width:32px;height:32px;background:linear-gradient(180deg,#edebe5 0%,#dcd9d2 45%,#bcb9b0 100%)"></div><svg class="a" style="left:585px;top:45px" width="16" height="16" viewBox="0 0 16 16"><circle cx="6" cy="7" r="4.3" fill="#d8d8d8" stroke="#000" stroke-width="1.4"/><path d="M4,5.5 A2.5,2.5 0 0 1 6.5,4" stroke="#fff" stroke-width="1.2" fill="none"/><path d="M9,10 L13,14" stroke="#000" stroke-width="2.6"/><path d="M10.5,0.5 L15,5 M15,0.5 L10.5,5" stroke="#0000e0" stroke-width="1.3"/></svg><div class="t" style="left:576px;top:63px;width:34px;text-align:center;font-size:11px;color:#000">All</div><div class="a" style="left:610px;top:42px;width:34px;height:34px;background:#808080"></div><div class="a" style="left:610px;top:42px;width:33px;height:33px;background:#fff"></div><div class="a" style="left:611px;top:43px;width:32px;height:32px;background:linear-gradient(180deg,#edebe5 0%,#dcd9d2 45%,#bcb9b0 100%)"></div><svg class="a" style="left:619px;top:45px" width="16" height="16" viewBox="0 0 16 16"><rect x="2" y="1" width="1.5" height="12" fill="#00e0e8"/><rect x="9" y="1" width="1.5" height="12" fill="#00e0e8"/><circle cx="6" cy="7" r="4.3" fill="#d8d8d8" stroke="#000" stroke-width="1.4"/><path d="M4,5.5 A2.5,2.5 0 0 1 6.5,4" stroke="#fff" stroke-width="1.2" fill="none"/><path d="M9,10 L13,14" stroke="#000" stroke-width="2.6"/></svg><div class="t" style="left:610px;top:63px;width:34px;text-align:center;font-size:11px;color:#000">Sel</div><div class="a" style="left:644px;top:42px;width:34px;height:34px;background:#808080"></div><div class="a" style="left:644px;top:42px;width:33px;height:33px;background:#fff"></div><div class="a" style="left:645px;top:43px;width:32px;height:32px;background:linear-gradient(180deg,#edebe5 0%,#dcd9d2 45%,#bcb9b0 100%)"></div><svg class="a" style="left:653px;top:45px" width="16" height="16" viewBox="0 0 16 16"><circle cx="6" cy="7" r="4.3" fill="#d8d8d8" stroke="#000" stroke-width="1.4"/><path d="M4,5.5 A2.5,2.5 0 0 1 6.5,4" stroke="#fff" stroke-width="1.2" fill="none"/><path d="M9,10 L13,14" stroke="#000" stroke-width="2.6"/><rect x="13" y="3" width="3" height="2" fill="#000"/><path d="M10,4 L13.5,0.8 V7.2 Z" fill="#000"/></svg><div class="t" style="left:644px;top:63px;width:34px;text-align:center;font-size:11px;color:#000">Prev</div><div class="a" style="left:678px;top:42px;width:34px;height:34px;background:#808080"></div><div class="a" style="left:678px;top:42px;width:33px;height:33px;background:#fff"></div><div class="a" style="left:679px;top:43px;width:32px;height:32px;background:linear-gradient(180deg,#edebe5 0%,#dcd9d2 45%,#bcb9b0 100%)"></div><svg class="a" style="left:687px;top:45px" width="16" height="16" viewBox="0 0 16 16"><circle cx="6" cy="7" r="4.3" fill="#d8d8d8" stroke="#000" stroke-width="1.4"/><path d="M4,5.5 A2.5,2.5 0 0 1 6.5,4" stroke="#fff" stroke-width="1.2" fill="none"/><path d="M9,10 L13,14" stroke="#000" stroke-width="2.6"/><path d="M12.5,0.5V6.5 M9.5,3.5H15.5" stroke="#00e000" stroke-width="2"/></svg><div class="t" style="left:678px;top:63px;width:34px;text-align:center;font-size:11px;color:#000">In</div><div class="a" style="left:712px;top:42px;width:34px;height:34px;background:#808080"></div><div class="a" style="left:712px;top:42px;width:33px;height:33px;background:#fff"></div><div class="a" style="left:713px;top:43px;width:32px;height:32px;background:linear-gradient(180deg,#edebe5 0%,#dcd9d2 45%,#bcb9b0 100%)"></div><svg class="a" style="left:721px;top:45px" width="16" height="16" viewBox="0 0 16 16"><circle cx="6" cy="7" r="4.3" fill="#d8d8d8" stroke="#000" stroke-width="1.4"/><path d="M4,5.5 A2.5,2.5 0 0 1 6.5,4" stroke="#fff" stroke-width="1.2" fill="none"/><path d="M9,10 L13,14" stroke="#000" stroke-width="2.6"/><path d="M9.5,3.5H15.5" stroke="#e00000" stroke-width="2"/></svg><div class="t" style="left:712px;top:63px;width:34px;text-align:center;font-size:11px;color:#000">Out</div><div class="a" style="left:746px;top:42px;width:34px;height:34px;background:#808080"></div><div class="a" style="left:746px;top:42px;width:33px;height:33px;background:#fff"></div><div class="a" style="left:747px;top:43px;width:32px;height:32px;background:linear-gradient(180deg,#edebe5 0%,#dcd9d2 45%,#bcb9b0 100%)"></div><svg class="a" style="left:755px;top:45px" width="16" height="16" viewBox="0 0 16 16"><circle cx="6" cy="7" r="4.3" fill="#d8d8d8" stroke="#000" stroke-width="1.4"/><path d="M4,5.5 A2.5,2.5 0 0 1 6.5,4" stroke="#fff" stroke-width="1.2" fill="none"/><path d="M9,10 L13,14" stroke="#000" stroke-width="2.6"/><text x="13" y="6" font-family="Liberation Sans" font-weight="bold" font-size="7.5" text-anchor="middle" fill="#000090">1</text></svg><div class="t" style="left:746px;top:63px;width:34px;text-align:center;font-size:11px;color:#000">1:1</div><div class="a" style="left:788px;top:42px;width:34px;height:34px;background:#808080"></div><div class="a" style="left:788px;top:42px;width:33px;height:33px;background:#fff"></div><div class="a" style="left:789px;top:43px;width:32px;height:32px;background:linear-gradient(180deg,#edebe5 0%,#dcd9d2 45%,#bcb9b0 100%)"></div><svg class="a" style="left:797px;top:45px" width="16" height="16" viewBox="0 0 16 16"><path d="M2,3 H14 L8,9 Z" fill="#0000e0" stroke="#f0f000" stroke-width="0.9"/><rect x="6" y="12" width="2" height="2" fill="#000"/><rect x="9" y="12" width="2" height="2" fill="#000"/><rect x="12" y="12" width="2" height="2" fill="#000"/></svg><div class="t" style="left:788px;top:63px;width:34px;text-align:center;font-size:11px;color:#000">Cues</div><div class="a" style="left:822px;top:42px;width:34px;height:34px;background:#808080"></div><div class="a" style="left:822px;top:42px;width:33px;height:33px;background:#fff"></div><div class="a" style="left:823px;top:43px;width:32px;height:32px;background:linear-gradient(180deg,#edebe5 0%,#dcd9d2 45%,#bcb9b0 100%)"></div><svg class="a" style="left:831px;top:45px" width="16" height="16" viewBox="0 0 16 16"><text x="8.5" y="12.5" font-family="Liberation Serif" font-weight="bold" font-size="12" text-anchor="middle" fill="#000" letter-spacing="-1">f(x)</text></svg><div class="t" style="left:822px;top:63px;width:34px;text-align:center;font-size:11px;color:#000">Eval</div><div class="a" style="left:856px;top:42px;width:34px;height:34px;background:#808080"></div><div class="a" style="left:856px;top:42px;width:33px;height:33px;background:#fff"></div><div class="a" style="left:857px;top:43px;width:32px;height:32px;background:linear-gradient(180deg,#edebe5 0%,#dcd9d2 45%,#bcb9b0 100%)"></div><svg class="a" style="left:865px;top:45px" width="16" height="16" viewBox="0 0 16 16"><circle cx="8" cy="8" r="6.8" fill="#c8c8c8" stroke="#a8a8a8"/><path d="M8,8 L3,2.5 A6.8,6.8 0 0 1 8,1.2 Z M8,8 L13,13.5 A6.8,6.8 0 0 1 8,14.8 Z" fill="#f0f0f0"/><path d="M3,3L13,13" stroke="#0000e0" stroke-width="1.3"/><path d="M8,1V15" stroke="#ff00ff" stroke-width="1.3"/><path d="M1.5,7.5L14.5,9" stroke="#00c000" stroke-width="1.3"/><circle cx="8" cy="8" r="1.2" fill="#000"/></svg><div class="t" style="left:856px;top:63px;width:34px;text-align:center;font-size:11px;color:#000">CDX</div><div class="a" style="left:890px;top:42px;width:34px;height:34px;background:#808080"></div><div class="a" style="left:890px;top:42px;width:33px;height:33px;background:#fff"></div><div class="a" style="left:891px;top:43px;width:32px;height:32px;background:linear-gradient(180deg,#edebe5 0%,#dcd9d2 45%,#bcb9b0 100%)"></div><svg class="a" style="left:899px;top:45px" width="16" height="16" viewBox="0 0 16 16"><rect x="3" y="0.5" width="10" height="9.5" fill="#ffff00" stroke="#a8a800" stroke-width="0.6"/><text x="8" y="9" font-family="Liberation Sans" font-weight="bold" font-size="10" text-anchor="middle" fill="#000080">?</text><path d="M6,10V12 H4 L8,15.5 L12,12 H10 V10" fill="#f0f000" stroke="#a8a800" stroke-width="0.5"/></svg><div class="t" style="left:890px;top:63px;width:34px;text-align:center;font-size:11px;color:#000">Chain</div><div class="a" style="left:930px;top:42px;width:34px;height:34px;background:#808080"></div><div class="a" style="left:930px;top:42px;width:33px;height:33px;background:#fff"></div><div class="a" style="left:931px;top:43px;width:32px;height:32px;background:linear-gradient(180deg,#edebe5 0%,#dcd9d2 45%,#bcb9b0 100%)"></div><svg class="a" style="left:939px;top:45px" width="16" height="16" viewBox="0 0 16 16"><circle cx="8.5" cy="8.5" r="7.3" fill="#8890a8"/><circle cx="8" cy="8" r="7.3" fill="#fff"/><circle cx="8" cy="8" r="5.8" fill="#2050c8"/><circle cx="7" cy="6" r="3" fill="#4878e0" opacity="0.6"/><text x="8" y="12.2" font-family="Liberation Sans" font-weight="bold" font-size="10.5" text-anchor="middle" fill="#fff">?</text></svg><div class="t" style="left:930px;top:63px;width:34px;text-align:center;font-size:11px;color:#000">Help</div><div class="a" style="left:0px;top:78px;width:871px;height:26px;background:#808080"></div><div class="a" style="left:0px;top:78px;width:870px;height:25px;background:#fff"></div><div class="a" style="left:1px;top:79px;width:869px;height:24px;background:#d4d0c8"></div><div class="a" style="left:3px;top:80px;width:1px;height:22px;background:#fff"></div><div class="a" style="left:4px;top:80px;width:1px;height:22px;background:#d4d0c8"></div><div class="a" style="left:5px;top:80px;width:1px;height:22px;background:#808080"></div><div class="a" style="left:3px;top:101px;width:3px;height:1px;background:#808080"></div><div class="a" style="left:3px;top:80px;width:3px;height:1px;background:#fff"></div><div class="a" style="left:11px;top:80px;width:22px;height:22px;background:#808080"></div><div class="a" style="left:11px;top:80px;width:21px;height:21px;background:#fff"></div><div class="a" style="left:12px;top:81px;width:20px;height:20px;background:linear-gradient(180deg,#edebe5 0%,#dcd9d2 45%,#bcb9b0 100%)"></div><svg class="a" style="left:14px;top:83px" width="16" height="16" viewBox="0 0 16 16"><rect x="1" y="5" width="14" height="4" fill="#000"/><path d="M11.5,10 H15 L13.25,12.5 Z" fill="#f0f000"/><path d="M13.25,12.5 V14" stroke="#b0b0b0" stroke-width="0.8"/></svg><div class="a" style="left:33px;top:80px;width:22px;height:22px;background:#808080"></div><div class="a" style="left:33px;top:80px;width:21px;height:21px;background:#fff"></div><div class="a" style="left:34px;top:81px;width:20px;height:20px;background:linear-gradient(180deg,#edebe5 0%,#dcd9d2 45%,#bcb9b0 100%)"></div><svg class="a" style="left:36px;top:83px" width="16" height="16" viewBox="0 0 16 16"><defs><clipPath id="mc"><rect x="0" y="0" width="16" height="10.2"/></clipPath></defs><g clip-path="url(#mc)"><circle cx="8.4" cy="6.6" r="6.6" fill="#f0f000"/><path d="M8.4,6.6 L1.8,4 A6.6,6.6 0 0 0 3,11 Z" fill="#00e000"/><path d="M8.4,6.6 L15,4 A6.6,6.6 0 0 1 13.8,11 Z" fill="#ff0000"/><path d="M1.8,4 L8.4,6.6 L15,4" fill="none"/></g><g fill="#000"><rect x="5.5" y="0.5" width="1.2" height="1.2"/><rect x="7.8" y="0.5" width="1.2" height="1.2"/><rect x="10" y="0.5" width="1.2" height="1.2"/><rect x="3" y="2" width="1.2" height="1.2"/><rect x="12.6" y="2" width="1.2" height="1.2"/><rect x="1.5" y="4.5" width="1.2" height="1.2"/><rect x="14" y="4.5" width="1.2" height="1.2"/><rect x="1.5" y="7" width="1.2" height="1.2"/><rect x="14" y="7" width="1.2" height="1.2"/><rect x="2.5" y="9" width="1.2" height="1.2"/><rect x="13" y="9" width="1.2" height="1.2"/></g><path d="M8.4,10 V3.5" stroke="#000" stroke-width="1.3"/><path d="M6.2,5.5 L8.4,2.6 L10.6,5.5 Z" fill="#000"/><path d="M3,12.8 H14" stroke="#000" stroke-width="2.4"/><path d="M3,12.8 H14" stroke="#f0e000" stroke-width="1.3"/><circle cx="3" cy="12.8" r="1.9" fill="#fff" stroke="#000" stroke-width="1.1"/><circle cx="14" cy="12.8" r="1.9" fill="#fff" stroke="#000" stroke-width="1.1"/></svg><div class="a" style="left:55px;top:80px;width:22px;height:22px;background:#808080"></div><div class="a" style="left:55px;top:80px;width:21px;height:21px;background:#fff"></div><div class="a" style="left:56px;top:81px;width:20px;height:20px;background:linear-gradient(180deg,#edebe5 0%,#dcd9d2 45%,#bcb9b0 100%)"></div><svg class="a" style="left:58px;top:83px" width="16" height="16" viewBox="0 0 16 16"><path d="M1.2,1 L4,3.6 L6.8,1 M4,3.3 V6" stroke="#000" stroke-width="1.9" fill="none"/><path d="M3,11.8 L12.9,2.8" stroke="#000" stroke-width="2.6"/><path d="M3,11.8 L12.9,2.8" stroke="#f0e000" stroke-width="1.4"/><circle cx="3" cy="11.8" r="1.8" fill="#fff" stroke="#000" stroke-width="1.1"/><circle cx="12.9" cy="2.8" r="1.8" fill="#fff" stroke="#000" stroke-width="1.1"/><path d="M9.5,10.6 L14.3,14.2 M14.3,10.6 L9.5,14.2" stroke="#000" stroke-width="1.9"/></svg><div class="a" style="left:77px;top:80px;width:22px;height:22px;background:#808080"></div><div class="a" style="left:77px;top:80px;width:21px;height:21px;background:#fff"></div><div class="a" style="left:78px;top:81px;width:20px;height:20px;background:linear-gradient(180deg,#edebe5 0%,#dcd9d2 45%,#bcb9b0 100%)"></div><svg class="a" style="left:80px;top:83px" width="16" height="16" viewBox="0 0 16 16"><rect x="9" y="2.2" width="2" height="10.6" fill="#008888"/><path d="M2.4,2.6 L8.4,7.3 L3.5,11.5" stroke="#00008c" stroke-width="1.5" fill="none"/><path d="M1.9,13 L2.4,9.2 L5.6,12.4 Z" fill="#00008c"/></svg><div class="a" style="left:99px;top:80px;width:22px;height:22px;background:#808080"></div><div class="a" style="left:99px;top:80px;width:21px;height:21px;background:#fff"></div><div class="a" style="left:100px;top:81px;width:20px;height:20px;background:linear-gradient(180deg,#edebe5 0%,#dcd9d2 45%,#bcb9b0 100%)"></div><svg class="a" style="left:102px;top:83px" width="16" height="16" viewBox="0 0 16 16"><polygon points="4.00,7.00 7.00,4.00 5.00,4.00 5.00,1.80 3.00,1.80 3.00,4.00 1.00,4.00" fill="#008888"/><polygon points="4.00,7.80 7.00,10.80 5.00,10.80 5.00,13.00 3.00,13.00 3.00,10.80 1.00,10.80" fill="#008888"/><polygon points="12.00,0.90 15.00,3.90 13.00,3.90 13.00,5.90 11.00,5.90 11.00,3.90 9.00,3.90" fill="#000090"/><polygon points="12.00,14.10 15.00,11.10 13.00,11.10 13.00,9.10 11.00,9.10 11.00,11.10 9.00,11.10" fill="#000090"/></svg><div class="a" style="left:121px;top:80px;width:22px;height:22px;background:#808080"></div><div class="a" style="left:121px;top:80px;width:21px;height:21px;background:#fff"></div><div class="a" style="left:122px;top:81px;width:20px;height:20px;background:linear-gradient(180deg,#edebe5 0%,#dcd9d2 45%,#bcb9b0 100%)"></div><svg class="a" style="left:124px;top:83px" width="16" height="16" viewBox="0 0 16 16"><path d="M0,4.7 L4,7.5 L8,6 L12,7.5 L16,4.7 V11.2 L12,8.5 L8,10 L4,8.5 L0,11.2 Z" fill="#00008c" stroke="#00e0f0" stroke-width="0.6"/><path d="M0.5,5 C4,10 6,10 8,8 C10,6 12,6 15.5,5 M0.5,11 C4,6 6,6 8,8 C10,10 12,10 15.5,11" stroke="#f0f000" stroke-width="1.1" fill="none"/><ellipse cx="8" cy="8" rx="2.6" ry="1.9" fill="#00008c"/></svg><div class="a" style="left:143px;top:80px;width:22px;height:22px;background:#808080"></div><div class="a" style="left:143px;top:80px;width:21px;height:21px;background:#fff"></div><div class="a" style="left:144px;top:81px;width:20px;height:20px;background:linear-gradient(180deg,#edebe5 0%,#dcd9d2 45%,#bcb9b0 100%)"></div><svg class="a" style="left:146px;top:83px" width="16" height="16" viewBox="0 0 16 16"><path d="M13.6,1.5 V13.4 H1" stroke="#008888" stroke-width="1" fill="none"/><path d="M7.8,6.8 L13.6,12.6" stroke="#008888" stroke-width="0.9"/><path d="M1.2,12.6 L13,1.4" stroke="#00008c" stroke-width="2.2"/><circle cx="7.5" cy="6.6" r="0.7" fill="#fff"/><circle cx="1.3" cy="12.5" r="0.6" fill="#fff"/></svg><div class="a" style="left:165px;top:80px;width:22px;height:22px;background:#808080"></div><div class="a" style="left:165px;top:80px;width:21px;height:21px;background:#fff"></div><div class="a" style="left:166px;top:81px;width:20px;height:20px;background:linear-gradient(180deg,#edebe5 0%,#dcd9d2 45%,#bcb9b0 100%)"></div><svg class="a" style="left:168px;top:83px" width="16" height="16" viewBox="0 0 16 16"><path d="M11.5,13 V7.5 C11.5,4 6.4,4 6.4,7.5 V10.5" stroke="#00008c" stroke-width="2.5" fill="none"/><path d="M2.8,9.8 H9.9 L6.35,13.3 Z" fill="#00008c"/></svg><div class="a" style="left:187px;top:80px;width:22px;height:22px;background:#808080"></div><div class="a" style="left:187px;top:80px;width:21px;height:21px;background:#fff"></div><div class="a" style="left:188px;top:81px;width:20px;height:20px;background:linear-gradient(180deg,#edebe5 0%,#dcd9d2 45%,#bcb9b0 100%)"></div><svg class="a" style="left:190px;top:83px" width="16" height="16" viewBox="0 0 16 16"><path d="M8.4,0.9 L10.2,3.3 L13.2,2.7 L12.9,5.7 L15,7.5 L12.9,9.3 L13.2,12.3 L10.2,11.7 L8.4,14.1 L6.6,11.7 L3.6,12.3 L3.9,9.3 L1.8,7.5 L3.9,5.7 L3.6,2.7 L6.6,3.3 Z" fill="#00008c"/><circle cx="8.4" cy="7.5" r="3.2" fill="none" stroke="#008888" stroke-width="0.9"/><circle cx="8.4" cy="7.5" r="0.9" fill="#008888"/></svg><div class="a" style="left:209px;top:80px;width:22px;height:22px;background:#808080"></div><div class="a" style="left:209px;top:80px;width:21px;height:21px;background:#fff"></div><div class="a" style="left:210px;top:81px;width:20px;height:20px;background:linear-gradient(180deg,#edebe5 0%,#dcd9d2 45%,#bcb9b0 100%)"></div><svg class="a" style="left:212px;top:83px" width="16" height="16" viewBox="0 0 16 16"><path d="M4.9,1 L7.6,4 H2.2 Z" fill="#00008c"/><rect x="4" y="3.5" width="1.8" height="2.5" fill="#00008c"/><rect x="1.1" y="5.7" width="6.8" height="1.9" fill="#00008c"/><rect x="9.2" y="8.3" width="6.7" height="1.7" fill="#00008c"/><rect x="11.6" y="9.8" width="1.8" height="2" fill="#00008c"/><path d="M10.1,11.4 H14.9 L12.5,14.7 Z" fill="#00008c"/><path d="M3,12.8 L13,3.1" stroke="#000" stroke-width="0.9"/></svg><div class="a" style="left:231px;top:80px;width:22px;height:22px;background:#808080"></div><div class="a" style="left:231px;top:80px;width:21px;height:21px;background:#fff"></div><div class="a" style="left:232px;top:81px;width:20px;height:20px;background:linear-gradient(180deg,#edebe5 0%,#dcd9d2 45%,#bcb9b0 100%)"></div><svg class="a" style="left:234px;top:83px" width="16" height="16" viewBox="0 0 16 16"><rect x="0.5" y="1.5" width="15.4" height="12" fill="#fff"/><path d="M0.4,1.5 H15.9 M0.4,4.2 H15.9 M0.4,7 H15.9 M0.4,10.2 H15.9 M0.4,13.4 H15.9" stroke="#000" stroke-width="0.9"/><path d="M0.8,1.5 V13.4" stroke="#000" stroke-width="1"/><rect x="1.3" y="2" width="9" height="11" fill="#fff" opacity="0.0"/><ellipse cx="4.6" cy="11.5" rx="2.2" ry="1.8" fill="#00008c"/><path d="M6.4,11.3 V2.2 L9,4.5" stroke="#00008c" stroke-width="1.3" fill="none"/><rect x="11.3" y="3.5" width="1.6" height="8.5" fill="#008888"/><path d="M9.6,4.5 L12.1,1.2 L14.6,4.5 Z M9.6,11 L12.1,14.3 L14.6,11 Z" fill="#008888"/></svg><div class="a" style="left:253px;top:80px;width:22px;height:22px;background:#808080"></div><div class="a" style="left:253px;top:80px;width:21px;height:21px;background:#fff"></div><div class="a" style="left:254px;top:81px;width:20px;height:20px;background:linear-gradient(180deg,#edebe5 0%,#dcd9d2 45%,#bcb9b0 100%)"></div><svg class="a" style="left:256px;top:83px" width="16" height="16" viewBox="0 0 16 16"><rect x="0.8" y="0.5" width="14.6" height="15" fill="none" stroke="#008888" stroke-width="1.1"/><path d="M2.5,8 H15" stroke="#00008c" stroke-width="1.8"/><rect x="2" y="5" width="1.6" height="6" fill="#00008c"/><path d="M3.6,6 L6,8 L3.6,10 Z" fill="#00008c"/><path d="M4,3 L6.5,5.5 M12.5,3 L10,5.5 M4,13 L6.5,10.5 M12.5,13 L10,10.5" stroke="#008888" stroke-width="0.9"/><path d="M6.5,4 V5.5 H5 M10,4 V5.5 H11.5 M6.5,12 V10.5 H5 M10,12 V10.5 H11.5" stroke="#008888" stroke-width="0.8" fill="none"/></svg><div class="a" style="left:275px;top:80px;width:22px;height:22px;background:#808080"></div><div class="a" style="left:275px;top:80px;width:21px;height:21px;background:#fff"></div><div class="a" style="left:276px;top:81px;width:20px;height:20px;background:linear-gradient(180deg,#edebe5 0%,#dcd9d2 45%,#bcb9b0 100%)"></div><svg class="a" style="left:278px;top:83px" width="16" height="16" viewBox="0 0 16 16"><path d="M6,8 H13.1" stroke="#00008c" stroke-width="2.4"/><path d="M2.8,8 L6.8,4.7 V11.3 Z" fill="#00008c"/></svg><div class="a" style="left:297px;top:80px;width:22px;height:22px;background:#808080"></div><div class="a" style="left:297px;top:80px;width:21px;height:21px;background:#fff"></div><div class="a" style="left:298px;top:81px;width:20px;height:20px;background:linear-gradient(180deg,#edebe5 0%,#dcd9d2 45%,#bcb9b0 100%)"></div><svg class="a" style="left:300px;top:83px" width="16" height="16" viewBox="0 0 16 16"><path d="M7.9,1.8 L11.6,5.4 H4.3 Z M7.9,14.1 L11.6,10.5 H4.3 Z" fill="#00008c"/><rect x="6.9" y="5" width="2" height="6" fill="#00008c"/><rect x="4" y="7" width="8" height="1.9" fill="#00008c"/><path d="M12,9.9 H15.3 L13.65,12.1 Z" fill="#f0f000"/><path d="M13.65,12.1 V14" stroke="#b0b0b0" stroke-width="0.8"/></svg><div class="a" style="left:319px;top:80px;width:22px;height:22px;background:#808080"></div><div class="a" style="left:319px;top:80px;width:21px;height:21px;background:#fff"></div><div class="a" style="left:320px;top:81px;width:20px;height:20px;background:linear-gradient(180deg,#edebe5 0%,#dcd9d2 45%,#bcb9b0 100%)"></div><svg class="a" style="left:322px;top:83px" width="16" height="16" viewBox="0 0 16 16"><path d="M1.3,1.2 V14.4 M5.5,1.2 V14.4 M9.7,1.2 V14.4 M13.9,1.2 V14.4" stroke="#000" stroke-width="1.6"/><path d="M2.1,1.5 V14 M6.3,1.5 V14 M10.5,1.5 V14 M14.7,1.5 V14" stroke="#fff" stroke-width="0.8"/><rect x="0.6" y="6.6" width="2.6" height="1.4" fill="#ff0000"/><rect x="4.6" y="10.8" width="2.6" height="1.4" fill="#f0f000"/><rect x="8.8" y="7.9" width="2.6" height="1.4" fill="#00e000"/><rect x="13" y="3.7" width="2.6" height="1.4" fill="#0000ff"/></svg><div class="a" style="left:341px;top:80px;width:22px;height:22px;background:#808080"></div><div class="a" style="left:341px;top:80px;width:21px;height:21px;background:#fff"></div><div class="a" style="left:342px;top:81px;width:20px;height:20px;background:linear-gradient(180deg,#edebe5 0%,#dcd9d2 45%,#bcb9b0 100%)"></div><svg class="a" style="left:344px;top:83px" width="16" height="16" viewBox="0 0 16 16"><path d="M1.5,1.2 V5.7 M15.5,1.2 V5.7 M1.5,10.2 V14.4 M15.5,10.2 V14.4" stroke="#000" stroke-width="1"/><path d="M2,3.5 L4,5.5 L8.5,1.5" stroke="#008000" stroke-width="1.4" fill="none"/><path d="M9.2,1.5 L14.8,5.5 M14.8,1.5 L9.2,5.5" stroke="#900000" stroke-width="1.4"/><path d="M2,10.5 L8.5,14.2 M8.5,10.5 L2,14.2" stroke="#900000" stroke-width="1.4"/><path d="M9.5,12.5 L11.5,14.2 L15,10.5" stroke="#008000" stroke-width="1.4" fill="none"/><path d="M9,1.2 V5.7 M9,10.2 V14.4" stroke="#000" stroke-width="0.8"/><rect x="0.90" y="7" width="2.55" height="1.9" fill="#ff0000"/><rect x="3.40" y="7" width="2.55" height="1.9" fill="#f0f000"/><rect x="5.90" y="7" width="2.55" height="1.9" fill="#00e000"/><rect x="8.40" y="7" width="2.55" height="1.9" fill="#00e0e0"/><rect x="10.90" y="7" width="2.55" height="1.9" fill="#0000ff"/><rect x="13.40" y="7" width="2.55" height="1.9" fill="#ff00ff"/></svg><div class="a" style="left:363px;top:80px;width:22px;height:22px;background:#808080"></div><div class="a" style="left:363px;top:80px;width:21px;height:21px;background:#fff"></div><div class="a" style="left:364px;top:81px;width:20px;height:20px;background:linear-gradient(180deg,#edebe5 0%,#dcd9d2 45%,#bcb9b0 100%)"></div><svg class="a" style="left:366px;top:83px" width="16" height="16" viewBox="0 0 16 16"><path d="M4.1,1.2 V5.7 M11.8,1.2 V5.7 M4.1,10.2 V14.7 M11.8,10.2 V14.7" stroke="#000" stroke-width="1.2"/><path d="M4.6,3.5 L7,5.5 L11.3,1.8" stroke="#008000" stroke-width="1.5" fill="none"/><path d="M4.6,10.6 L11.3,14.3 M11.3,10.6 L4.6,14.3" stroke="#900000" stroke-width="1.5"/><rect x="0.90" y="7" width="2.42" height="1.9" fill="#ff0000"/><rect x="3.27" y="7" width="2.42" height="1.9" fill="#f0f000"/><rect x="5.63" y="7" width="2.42" height="1.9" fill="#00e000"/><rect x="8.00" y="7" width="2.42" height="1.9" fill="#00e0e0"/><rect x="10.37" y="7" width="2.42" height="1.9" fill="#0000ff"/><rect x="12.73" y="7" width="2.42" height="1.9" fill="#ff00ff"/></svg><div class="a" style="left:385px;top:80px;width:22px;height:22px;background:#808080"></div><div class="a" style="left:385px;top:80px;width:21px;height:21px;background:#fff"></div><div class="a" style="left:386px;top:81px;width:20px;height:20px;background:linear-gradient(180deg,#edebe5 0%,#dcd9d2 45%,#bcb9b0 100%)"></div><svg class="a" style="left:388px;top:83px" width="16" height="16" viewBox="0 0 16 16"><path d="M0.8,5.3 L3.8,1.8 H12 L15,5.3 L12,8.9 H3.8 Z" fill="#00008c"/><path d="M1.8,5.3 L4.3,2.6 H11.5 L14,5.3 L11.5,8.1 H4.3 Z" fill="none" stroke="#fff" stroke-width="0.5" opacity="0"/><text x="7.9" y="7.9" font-family="Liberation Sans" font-weight="bold" font-size="6.8" text-anchor="middle" fill="#fff">EQ</text><rect x="0.80" y="10.9" width="2.42" height="3.2" fill="#ff0000"/><rect x="3.17" y="10.9" width="2.42" height="3.2" fill="#f0f000"/><rect x="5.53" y="10.9" width="2.42" height="3.2" fill="#00e000"/><rect x="7.90" y="10.9" width="2.42" height="3.2" fill="#00e0e0"/><rect x="10.27" y="10.9" width="2.42" height="3.2" fill="#0000ff"/><rect x="12.63" y="10.9" width="2.42" height="3.2" fill="#ff00ff"/></svg><div class="a" style="left:407px;top:80px;width:22px;height:22px;background:#808080"></div><div class="a" style="left:407px;top:80px;width:21px;height:21px;background:#fff"></div><div class="a" style="left:408px;top:81px;width:20px;height:20px;background:linear-gradient(180deg,#edebe5 0%,#dcd9d2 45%,#bcb9b0 100%)"></div><svg class="a" style="left:410px;top:83px" width="16" height="16" viewBox="0 0 16 16"><rect x="0.00" y="0" width="2.68" height="2.6" fill="#ff0000"/><rect x="2.63" y="0" width="2.68" height="2.6" fill="#f0f000"/><rect x="5.27" y="0" width="2.68" height="2.6" fill="#00e000"/><rect x="7.90" y="0" width="2.68" height="2.6" fill="#00e0e0"/><rect x="10.53" y="0" width="2.68" height="2.6" fill="#0000ff"/><rect x="13.17" y="0" width="2.68" height="2.6" fill="#ff00ff"/><path d="M0,1.3 H15.8" stroke="#000" stroke-width="0.5" stroke-dasharray="1,1"/><path d="M4.9,4.1 H11 L7.95,7 Z" fill="#0000e0"/><rect x="0.00" y="7.9" width="2.68" height="3" fill="#ff0000"/><rect x="2.63" y="7.9" width="2.68" height="3" fill="#f0f000"/><rect x="5.27" y="7.9" width="2.68" height="3" fill="#00e000"/><rect x="7.90" y="7.9" width="2.68" height="3" fill="#00e0e0"/><rect x="10.53" y="7.9" width="2.68" height="3" fill="#0000ff"/><rect x="13.17" y="7.9" width="2.68" height="3" fill="#ff00ff"/><path d="M1.9,13.7 H13.9" stroke="#000" stroke-width="2.2"/><path d="M1.9,13.7 H13.9" stroke="#f0e000" stroke-width="1.2"/><circle cx="1.9" cy="13.7" r="1.7" fill="#fff" stroke="#000" stroke-width="1"/><circle cx="13.9" cy="13.7" r="1.7" fill="#fff" stroke="#000" stroke-width="1"/></svg><div class="a" style="left:429px;top:80px;width:22px;height:22px;background:#808080"></div><div class="a" style="left:429px;top:80px;width:21px;height:21px;background:#fff"></div><div class="a" style="left:430px;top:81px;width:20px;height:20px;background:linear-gradient(180deg,#edebe5 0%,#dcd9d2 45%,#bcb9b0 100%)"></div><svg class="a" style="left:432px;top:83px" width="16" height="16" viewBox="0 0 16 16"><path d="M8.3,2.2 V4.4 M3.2,2.5 L6.1,4.7 M13.4,2.5 L10.5,4.7" stroke="#000" stroke-width="0.9"/><path d="M7.4,8.3 L2.6,13" stroke="#00008c" stroke-width="3.6"/><path d="M9.2,8.3 L14,13" stroke="#00008c" stroke-width="3.6"/><circle cx="8.3" cy="6.6" r="0.6" fill="#fff"/></svg><div class="a" style="left:451px;top:80px;width:22px;height:22px;background:#808080"></div><div class="a" style="left:451px;top:80px;width:21px;height:21px;background:#fff"></div><div class="a" style="left:452px;top:81px;width:20px;height:20px;background:linear-gradient(180deg,#edebe5 0%,#dcd9d2 45%,#bcb9b0 100%)"></div><svg class="a" style="left:454px;top:83px" width="16" height="16" viewBox="0 0 16 16"><rect x="0" y="6" width="16" height="1.8" fill="#00008c"/><path d="M0.9,3.5 V10.5 M2.6,2.8 V10.9 M4,4 V10" stroke="#00008c" stroke-width="1.3"/><path d="M12.3,3 V10.5 M13.8,2 V10.9 M15.3,3.5 V10" stroke="#00008c" stroke-width="1.3"/><path d="M5,9 L10.9,14 M10.9,9 L5,14" stroke="#900000" stroke-width="1.6"/></svg><div class="a" style="left:473px;top:80px;width:22px;height:22px;background:#808080"></div><div class="a" style="left:473px;top:80px;width:21px;height:21px;background:#fff"></div><div class="a" style="left:474px;top:81px;width:20px;height:20px;background:linear-gradient(180deg,#edebe5 0%,#dcd9d2 45%,#bcb9b0 100%)"></div><svg class="a" style="left:476px;top:83px" width="16" height="16" viewBox="0 0 16 16"><rect x="0" y="7" width="15.9" height="1.9" fill="#00008c"/><path d="M0.6,4.5 V11 M2.2,3.5 V11.5 M3.8,4.5 V11 M5.6,3.8 V12" stroke="#00008c" stroke-width="1.2"/><path d="M6.5,5 L12.5,1 M6.5,11 L12.5,15" stroke="#fff" stroke-width="1"/><path d="M6.8,5.5 L12.5,1.5 M6.8,10.5 L12.5,14.5" stroke="#909090" stroke-width="0.5"/></svg><div class="a" style="left:495px;top:80px;width:22px;height:22px;background:#808080"></div><div class="a" style="left:495px;top:80px;width:21px;height:21px;background:#fff"></div><div class="a" style="left:496px;top:81px;width:20px;height:20px;background:linear-gradient(180deg,#edebe5 0%,#dcd9d2 45%,#bcb9b0 100%)"></div><svg class="a" style="left:498px;top:83px" width="16" height="16" viewBox="0 0 16 16"><rect x="0.00" y="3.8" width="2.68" height="8.3" fill="#ff0000"/><rect x="2.63" y="3.8" width="2.68" height="8.3" fill="#f0f000"/><rect x="5.27" y="3.8" width="2.68" height="8.3" fill="#00e000"/><rect x="7.90" y="3.8" width="2.68" height="8.3" fill="#00e0e0"/><rect x="10.53" y="3.8" width="2.68" height="8.3" fill="#0000ff"/><rect x="13.17" y="3.8" width="2.68" height="8.3" fill="#ff00ff"/><path d="M1.9,8 H13.9" stroke="#000" stroke-width="2.2"/><path d="M1.9,8 H13.9" stroke="#f0e000" stroke-width="1.2"/><circle cx="1.9" cy="8" r="1.7" fill="#fff" stroke="#000" stroke-width="1"/><circle cx="13.9" cy="8" r="1.7" fill="#fff" stroke="#000" stroke-width="1"/></svg><div class="a" style="left:517px;top:80px;width:22px;height:22px;background:#808080"></div><div class="a" style="left:517px;top:80px;width:21px;height:21px;background:#fff"></div><div class="a" style="left:518px;top:81px;width:20px;height:20px;background:linear-gradient(180deg,#edebe5 0%,#dcd9d2 45%,#bcb9b0 100%)"></div><svg class="a" style="left:520px;top:83px" width="16" height="16" viewBox="0 0 16 16"><rect x="3.7" y="11.7" width="1.2" height="1.2" fill="#00e000"/><rect x="1.3" y="9.3" width="1.2" height="1.2" fill="#00e000"/><rect x="0.6" y="6.0" width="1.2" height="1.2" fill="#00e000"/><rect x="1.8" y="2.8" width="1.2" height="1.2" fill="#00e000"/><rect x="4.4" y="0.7" width="1.2" height="1.2" fill="#f0f000"/><rect x="7.8" y="0.4" width="1.2" height="1.2" fill="#f0f000"/><rect x="10.8" y="1.9" width="1.2" height="1.2" fill="#f0f000"/><rect x="12.6" y="4.7" width="1.2" height="1.2" fill="#ff0000"/><rect x="12.6" y="8.1" width="1.2" height="1.2" fill="#ff0000"/><rect x="10.8" y="10.9" width="1.2" height="1.2" fill="#ff0000"/><circle cx="7.3" cy="7" r="4.2" fill="#20e8f8" stroke="#000" stroke-width="1.1"/><circle cx="5.9" cy="6.0" r="1.8900000000000001" fill="#fff" opacity="0.55"/><path d="M5.5,5.4 L7.6,7.2" stroke="#606060" stroke-width="0.9"/><path d="M11.9,9.9 H15.2 L13.55,12.5 Z" fill="#f0f000"/><path d="M13.55,12.5 V14.3" stroke="#b0b0b0" stroke-width="0.8"/></svg><div class="a" style="left:539px;top:80px;width:22px;height:22px;background:#808080"></div><div class="a" style="left:539px;top:80px;width:21px;height:21px;background:#fff"></div><div class="a" style="left:540px;top:81px;width:20px;height:20px;background:linear-gradient(180deg,#edebe5 0%,#dcd9d2 45%,#bcb9b0 100%)"></div><svg class="a" style="left:542px;top:83px" width="16" height="16" viewBox="0 0 16 16"><rect x="4.7" y="13.0" width="1.2" height="1.2" fill="#00e000"/><rect x="2.3" y="10.6" width="1.2" height="1.2" fill="#00e000"/><rect x="1.6" y="7.3" width="1.2" height="1.2" fill="#00e000"/><rect x="2.8" y="4.1" width="1.2" height="1.2" fill="#00e000"/><rect x="5.4" y="2.0" width="1.2" height="1.2" fill="#f0f000"/><rect x="8.8" y="1.7" width="1.2" height="1.2" fill="#f0f000"/><rect x="11.8" y="3.2" width="1.2" height="1.2" fill="#f0f000"/><rect x="13.6" y="6.0" width="1.2" height="1.2" fill="#ff0000"/><rect x="13.6" y="9.4" width="1.2" height="1.2" fill="#ff0000"/><rect x="11.8" y="12.2" width="1.2" height="1.2" fill="#ff0000"/><circle cx="8.3" cy="8.3" r="4.2" fill="#c8c8c8" stroke="#000" stroke-width="1.1"/><circle cx="6.9" cy="7.300000000000001" r="1.8900000000000001" fill="#fff" opacity="0.55"/><path d="M6.5,6.7 L8.6,8.5" stroke="#606060" stroke-width="0.9"/></svg><div class="a" style="left:561px;top:80px;width:22px;height:22px;background:#808080"></div><div class="a" style="left:561px;top:80px;width:21px;height:21px;background:#fff"></div><div class="a" style="left:562px;top:81px;width:20px;height:20px;background:linear-gradient(180deg,#edebe5 0%,#dcd9d2 45%,#bcb9b0 100%)"></div><svg class="a" style="left:564px;top:83px" width="16" height="16" viewBox="0 0 16 16"><path d="M3.6,14 V4" stroke="#00008c" stroke-width="2.2"/><path d="M3.6,13.2 H6.8" stroke="#00008c" stroke-width="1.6"/><path d="M0,5.4 L3.6,2.8 L5.1,5.4 Z" fill="#00008c"/><rect x="6.6" y="12.8" width="1.2" height="1.2" fill="#00e000"/><rect x="4.3" y="10.5" width="1.2" height="1.2" fill="#00e000"/><rect x="3.6" y="7.3" width="1.2" height="1.2" fill="#00e000"/><rect x="4.7" y="4.2" width="1.2" height="1.2" fill="#00e000"/><rect x="7.3" y="2.2" width="1.2" height="1.2" fill="#f0f000"/><rect x="10.5" y="1.9" width="1.2" height="1.2" fill="#f0f000"/><rect x="13.4" y="3.3" width="1.2" height="1.2" fill="#f0f000"/><rect x="15.2" y="6.1" width="1.2" height="1.2" fill="#ff0000"/><rect x="15.2" y="9.3" width="1.2" height="1.2" fill="#ff0000"/><rect x="13.4" y="12.1" width="1.2" height="1.2" fill="#ff0000"/><circle cx="10.1" cy="8.3" r="4" fill="#c8c8c8" stroke="#000" stroke-width="1.1"/><circle cx="8.7" cy="7.300000000000001" r="1.8" fill="#fff" opacity="0.55"/><path d="M8.3,6.7 L10.4,8.5" stroke="#606060" stroke-width="0.9"/></svg><div class="a" style="left:583px;top:80px;width:22px;height:22px;background:#808080"></div><div class="a" style="left:583px;top:80px;width:21px;height:21px;background:#fff"></div><div class="a" style="left:584px;top:81px;width:20px;height:20px;background:linear-gradient(180deg,#edebe5 0%,#dcd9d2 45%,#bcb9b0 100%)"></div><svg class="a" style="left:586px;top:83px" width="16" height="16" viewBox="0 0 16 16"><path d="M3.6,12 V2.4" stroke="#00008c" stroke-width="2.2"/><path d="M3,2.7 H6.5" stroke="#00008c" stroke-width="1.6"/><path d="M0,10.9 H5.2 L2.8,14.1 Z" fill="#00008c"/><rect x="6.5" y="12.8" width="1.2" height="1.2" fill="#00e000"/><rect x="4.2" y="10.5" width="1.2" height="1.2" fill="#00e000"/><rect x="3.5" y="7.3" width="1.2" height="1.2" fill="#00e000"/><rect x="4.6" y="4.2" width="1.2" height="1.2" fill="#00e000"/><rect x="7.2" y="2.2" width="1.2" height="1.2" fill="#f0f000"/><rect x="10.4" y="1.9" width="1.2" height="1.2" fill="#f0f000"/><rect x="13.3" y="3.3" width="1.2" height="1.2" fill="#f0f000"/><rect x="15.1" y="6.1" width="1.2" height="1.2" fill="#ff0000"/><rect x="15.1" y="9.3" width="1.2" height="1.2" fill="#ff0000"/><rect x="13.3" y="12.1" width="1.2" height="1.2" fill="#ff0000"/><circle cx="10" cy="8.3" r="4" fill="#c8c8c8" stroke="#000" stroke-width="1.1"/><circle cx="8.6" cy="7.300000000000001" r="1.8" fill="#fff" opacity="0.55"/><path d="M8.2,6.7 L10.3,8.5" stroke="#606060" stroke-width="0.9"/></svg><div class="a" style="left:605px;top:80px;width:22px;height:22px;background:#808080"></div><div class="a" style="left:605px;top:80px;width:21px;height:21px;background:#fff"></div><div class="a" style="left:606px;top:81px;width:20px;height:20px;background:linear-gradient(180deg,#edebe5 0%,#dcd9d2 45%,#bcb9b0 100%)"></div><svg class="a" style="left:608px;top:83px" width="16" height="16" viewBox="0 0 16 16"><rect x="4.1" y="9.6" width="1.2" height="1.2" fill="#00e000"/><rect x="1.8" y="7.3" width="1.2" height="1.2" fill="#00e000"/><rect x="1.1" y="4.1" width="1.2" height="1.2" fill="#00e000"/><rect x="2.2" y="1.0" width="1.2" height="1.2" fill="#00e000"/><rect x="4.8" y="-1.0" width="1.2" height="1.2" fill="#f0f000"/><rect x="8.0" y="-1.3" width="1.2" height="1.2" fill="#f0f000"/><rect x="10.9" y="0.1" width="1.2" height="1.2" fill="#f0f000"/><rect x="12.7" y="2.9" width="1.2" height="1.2" fill="#ff0000"/><rect x="12.7" y="6.1" width="1.2" height="1.2" fill="#ff0000"/><rect x="10.9" y="8.9" width="1.2" height="1.2" fill="#ff0000"/><circle cx="7.6" cy="5.1" r="4" fill="#c8c8c8" stroke="#000" stroke-width="1.1"/><circle cx="6.199999999999999" cy="4.1" r="1.8" fill="#fff" opacity="0.55"/><path d="M5.8,3.5 L7.9,5.3" stroke="#606060" stroke-width="0.9"/><rect x="5" y="11.2" width="6.8" height="1.6" fill="#00008c"/><rect x="5" y="14.1" width="6.8" height="1.6" fill="#00008c"/></svg><div class="a" style="left:627px;top:80px;width:22px;height:22px;background:#808080"></div><div class="a" style="left:627px;top:80px;width:21px;height:21px;background:#fff"></div><div class="a" style="left:628px;top:81px;width:20px;height:20px;background:linear-gradient(180deg,#edebe5 0%,#dcd9d2 45%,#bcb9b0 100%)"></div><svg class="a" style="left:630px;top:83px" width="16" height="16" viewBox="0 0 16 16"><rect x="2.7" y="13.0" width="1.2" height="1.2" fill="#00e000"/><rect x="0.3" y="10.6" width="1.2" height="1.2" fill="#00e000"/><rect x="-0.4" y="7.3" width="1.2" height="1.2" fill="#00e000"/><rect x="0.8" y="4.1" width="1.2" height="1.2" fill="#00e000"/><rect x="3.4" y="2.0" width="1.2" height="1.2" fill="#f0f000"/><rect x="6.8" y="1.7" width="1.2" height="1.2" fill="#f0f000"/><rect x="9.8" y="3.2" width="1.2" height="1.2" fill="#f0f000"/><rect x="11.6" y="6.0" width="1.2" height="1.2" fill="#ff0000"/><rect x="11.6" y="9.4" width="1.2" height="1.2" fill="#ff0000"/><rect x="9.8" y="12.2" width="1.2" height="1.2" fill="#ff0000"/><circle cx="6.3" cy="8.3" r="4.2" fill="#c8c8c8" stroke="#000" stroke-width="1.1"/><circle cx="4.9" cy="7.300000000000001" r="1.8900000000000001" fill="#fff" opacity="0.55"/><path d="M4.5,6.7 L6.6,8.5" stroke="#606060" stroke-width="0.9"/><rect x="13.1" y="3.1" width="1.9" height="7.4" fill="#00008c"/><rect x="13.1" y="11.2" width="1.9" height="1.6" fill="#00008c"/></svg><div class="a" style="left:649px;top:80px;width:22px;height:22px;background:#808080"></div><div class="a" style="left:649px;top:80px;width:21px;height:21px;background:#fff"></div><div class="a" style="left:650px;top:81px;width:20px;height:20px;background:linear-gradient(180deg,#edebe5 0%,#dcd9d2 45%,#bcb9b0 100%)"></div><svg class="a" style="left:652px;top:83px" width="16" height="16" viewBox="0 0 16 16"><rect x="4.7" y="9.6" width="1.2" height="1.2" fill="#00e000"/><rect x="2.4" y="7.3" width="1.2" height="1.2" fill="#00e000"/><rect x="1.7" y="4.1" width="1.2" height="1.2" fill="#00e000"/><rect x="2.8" y="1.0" width="1.2" height="1.2" fill="#00e000"/><rect x="5.4" y="-1.0" width="1.2" height="1.2" fill="#f0f000"/><rect x="8.6" y="-1.3" width="1.2" height="1.2" fill="#f0f000"/><rect x="11.5" y="0.1" width="1.2" height="1.2" fill="#f0f000"/><rect x="13.3" y="2.9" width="1.2" height="1.2" fill="#ff0000"/><rect x="13.3" y="6.1" width="1.2" height="1.2" fill="#ff0000"/><rect x="11.5" y="8.9" width="1.2" height="1.2" fill="#ff0000"/><circle cx="8.2" cy="5.1" r="4" fill="#c8c8c8" stroke="#000" stroke-width="1.1"/><circle cx="6.799999999999999" cy="4.1" r="1.8" fill="#fff" opacity="0.55"/><path d="M6.4,3.5 L8.5,5.3" stroke="#606060" stroke-width="0.9"/><path d="M1.7,12.8 H14.3" stroke="#000" stroke-width="2.2"/><path d="M1.7,12.8 H14.3" stroke="#f0e000" stroke-width="1.2"/><circle cx="1.7" cy="12.8" r="1.7" fill="#fff" stroke="#000" stroke-width="1"/><circle cx="14.3" cy="12.8" r="1.7" fill="#fff" stroke="#000" stroke-width="1"/></svg><div class="a" style="left:671px;top:80px;width:22px;height:22px;background:#808080"></div><div class="a" style="left:671px;top:80px;width:21px;height:21px;background:#fff"></div><div class="a" style="left:672px;top:81px;width:20px;height:20px;background:linear-gradient(180deg,#edebe5 0%,#dcd9d2 45%,#bcb9b0 100%)"></div><svg class="a" style="left:674px;top:83px" width="16" height="16" viewBox="0 0 16 16"><path d="M7.7,2.2 L2.6,6 L7.7,9.9 Z" fill="#00e000"/><path d="M9,2.2 L13.9,6 L9,9.9 Z" fill="#ff0000"/><path d="M2,12.8 H14" stroke="#000" stroke-width="2.2"/><path d="M2,12.8 H14" stroke="#f0e000" stroke-width="1.2"/><circle cx="2" cy="12.8" r="1.7" fill="#fff" stroke="#000" stroke-width="1"/><circle cx="14" cy="12.8" r="1.7" fill="#fff" stroke="#000" stroke-width="1"/></svg><div class="a" style="left:693px;top:80px;width:22px;height:22px;background:#808080"></div><div class="a" style="left:693px;top:80px;width:21px;height:21px;background:#fff"></div><div class="a" style="left:694px;top:81px;width:20px;height:20px;background:linear-gradient(180deg,#edebe5 0%,#dcd9d2 45%,#bcb9b0 100%)"></div><svg class="a" style="left:696px;top:83px" width="16" height="16" viewBox="0 0 16 16"><path d="M0.9,3 C3,0.5 6,1.5 8.4,2 C11,1.5 14,0.5 16,3 C14,7.6 3,7.6 0.9,3 Z" fill="#ff0000"/><path d="M3.5,3.5 H13 C11.5,5.8 5,5.8 3.5,3.5 Z" fill="#fff"/><path d="M5,4.5 H12" stroke="#900000" stroke-width="0.6"/><path d="M1,9.5 L3,8 M15.5,9.5 L13.5,8 M2,13.5 L3,11.5 M14.5,13.5 L13.5,11.5" stroke="#000" stroke-width="0.9"/><path d="M5.1,8.9 L12.2,15.7 M12.2,8.9 L5.1,15.7" stroke="#900000" stroke-width="1.8"/></svg><div class="a" style="left:715px;top:80px;width:22px;height:22px;background:#808080"></div><div class="a" style="left:715px;top:80px;width:21px;height:21px;background:#fff"></div><div class="a" style="left:716px;top:81px;width:20px;height:20px;background:linear-gradient(180deg,#edebe5 0%,#dcd9d2 45%,#bcb9b0 100%)"></div><svg class="a" style="left:718px;top:83px" width="16" height="16" viewBox="0 0 16 16"><path d="M8,0 L16,7.6 L8,15.6 L0,7.6 Z" fill="#f0e800" stroke="#606000" stroke-width="0.4"/><path d="M4,3.8 L0,7.6 L4,11.4 Z" fill="#00e000"/><path d="M12,3.8 L16,7.6 L12,11.4 Z" fill="#ff0000"/><path d="M6,2 V13.6" stroke="#ffff80" stroke-width="1" opacity="0.5"/></svg><div class="a" style="left:737px;top:80px;width:22px;height:22px;background:#808080"></div><div class="a" style="left:737px;top:80px;width:21px;height:21px;background:#fff"></div><div class="a" style="left:738px;top:81px;width:20px;height:20px;background:linear-gradient(180deg,#edebe5 0%,#dcd9d2 45%,#bcb9b0 100%)"></div><svg class="a" style="left:740px;top:83px" width="16" height="16" viewBox="0 0 16 16"><text x="7.9" y="7.6" font-family="Liberation Sans" font-weight="bold" font-size="8.3" text-anchor="middle" fill="#0000a0">Hz</text><path d="M4.6,8.6 L12.6,12.4 L4.6,16.2 Z" fill="#000"/><path d="M4,8 L12,11.8 L4,15.6 Z" fill="#008000"/></svg><div class="a" style="left:759px;top:80px;width:22px;height:22px;background:#808080"></div><div class="a" style="left:759px;top:80px;width:21px;height:21px;background:#fff"></div><div class="a" style="left:760px;top:81px;width:20px;height:20px;background:linear-gradient(180deg,#edebe5 0%,#dcd9d2 45%,#bcb9b0 100%)"></div><svg class="a" style="left:762px;top:83px" width="16" height="16" viewBox="0 0 16 16"><text x="7.8" y="8.9" font-family="Liberation Sans" font-weight="bold" font-size="8.3" text-anchor="middle" fill="#008000">Hz</text><path d="M1,12.5 H15" stroke="#00008c" stroke-width="0.8"/><path d="M0,12.5 L1,11.5 L2,12.5 L1,13.5 Z M14,12.5 L15,11.5 L16,12.5 L15,13.5 Z" fill="#fff" stroke="#000" stroke-width="0.5"/><circle cx="5.6" cy="12.5" r="1" fill="#00c000"/><circle cx="10.6" cy="12.5" r="1" fill="#00c000"/></svg><div class="a" style="left:781px;top:80px;width:22px;height:22px;background:#808080"></div><div class="a" style="left:781px;top:80px;width:21px;height:21px;background:#fff"></div><div class="a" style="left:782px;top:81px;width:20px;height:20px;background:linear-gradient(180deg,#edebe5 0%,#dcd9d2 45%,#bcb9b0 100%)"></div><svg class="a" style="left:784px;top:83px" width="16" height="16" viewBox="0 0 16 16"><path d="M3.2,0.9 L0,3.4 L3.2,6 Z" fill="#00e000"/><path d="M11.9,10.2 L15,12.9 L11.9,15.7 Z" fill="#ff0000"/><path d="M8,1.8 H12.5 C14.5,1.8 14.5,4.5 12.5,4.5 H10 M11.5,3 L10,4.5 L11.5,6" stroke="#00008c" stroke-width="1.8" fill="none"/><path d="M8,13.5 H4 C2,13.5 2,10.8 4,10.8 H6" stroke="#00008c" stroke-width="1.8" fill="none"/><path d="M3.5,5.5 H7.5 M5.5,3.5 V7.5 M9,7 H12" stroke="#00008c" stroke-width="1.4"/><path d="M3.8,12.5 L10.2,6" stroke="#000" stroke-width="0.7"/></svg><div class="a" style="left:803px;top:80px;width:22px;height:22px;background:#808080"></div><div class="a" style="left:803px;top:80px;width:21px;height:21px;background:#fff"></div><div class="a" style="left:804px;top:81px;width:20px;height:20px;background:linear-gradient(180deg,#edebe5 0%,#dcd9d2 45%,#bcb9b0 100%)"></div><svg class="a" style="left:806px;top:83px" width="16" height="16" viewBox="0 0 16 16"><rect x="2.8" y="9.6" width="1.2" height="1.2" fill="#00e000"/><rect x="0.5" y="7.3" width="1.2" height="1.2" fill="#00e000"/><rect x="-0.2" y="4.1" width="1.2" height="1.2" fill="#00e000"/><rect x="0.9" y="1.0" width="1.2" height="1.2" fill="#00e000"/><rect x="3.5" y="-1.0" width="1.2" height="1.2" fill="#f0f000"/><rect x="6.7" y="-1.3" width="1.2" height="1.2" fill="#f0f000"/><rect x="9.6" y="0.1" width="1.2" height="1.2" fill="#f0f000"/><rect x="11.4" y="2.9" width="1.2" height="1.2" fill="#ff0000"/><rect x="11.4" y="6.1" width="1.2" height="1.2" fill="#ff0000"/><rect x="9.6" y="8.9" width="1.2" height="1.2" fill="#ff0000"/><circle cx="6.3" cy="5.1" r="4" fill="#c8c8c8" stroke="#000" stroke-width="1.1"/><circle cx="4.9" cy="4.1" r="1.8" fill="#fff" opacity="0.55"/><path d="M4.5,3.5 L6.6,5.3" stroke="#606060" stroke-width="0.9"/><rect x="12.7" y="0" width="1.9" height="7" fill="#00008c"/><rect x="12.7" y="8" width="1.9" height="1.6" fill="#00008c"/><rect x="4.1" y="11.2" width="7.7" height="1.6" fill="#008000"/><rect x="4.1" y="14.1" width="7.7" height="1.6" fill="#ff0000"/></svg><div class="a" style="left:825px;top:80px;width:22px;height:22px;background:#808080"></div><div class="a" style="left:825px;top:80px;width:21px;height:21px;background:#fff"></div><div class="a" style="left:826px;top:81px;width:20px;height:20px;background:linear-gradient(180deg,#edebe5 0%,#dcd9d2 45%,#bcb9b0 100%)"></div><svg class="a" style="left:828px;top:83px" width="16" height="16" viewBox="0 0 16 16"><circle cx="7.9" cy="7.6" r="7.1" fill="#f0f000"/><circle cx="7.9" cy="7.6" r="5.9" fill="#00008c"/><path d="M7.9,1.9 V3 M7.9,12.2 V13.3 M2.2,7.6 H3.3 M12.5,7.6 H13.6 M4,3.7 L4.7,4.4 M11.8,3.7 L11.1,4.4 M4,11.5 L4.7,10.8 M11.8,11.5 L11.1,10.8" stroke="#fff" stroke-width="0.8"/><path d="M8.3,2.8 V8.5 L5,11" stroke="#f0f000" stroke-width="1.4" fill="none"/></svg><svg class="a" style="left:850px;top:83px" width="16" height="16" viewBox="0 0 16 16"><path d="M1,3 C3,0.5 6,1.5 8,2 C10,1.5 13,0.5 15,3 C13,7.5 3,7.5 1,3 Z" fill="#a8a8a8"/><path d="M3.5,3.5 H12.5 C11,5.6 5,5.6 3.5,3.5 Z" fill="#d8d8d8"/><path d="M0.5,7 L7.8,12 L15,7 V12.5 H0.5 Z" fill="#a8a8a8"/><path d="M12.8,11 V15.5 M11.5,12.5 H14" stroke="#b8b8b8" stroke-width="1.2"/></svg><div class="a" style="left:0px;top:104px;width:518px;height:36px;background:#808080"></div><div class="a" style="left:0px;top:104px;width:517px;height:35px;background:#fff"></div><div class="a" style="left:1px;top:105px;width:516px;height:34px;background:#d4d0c8"></div><div class="a" style="left:3px;top:106px;width:1px;height:32px;background:#fff"></div><div class="a" style="left:4px;top:106px;width:1px;height:32px;background:#d4d0c8"></div><div class="a" style="left:5px;top:106px;width:1px;height:32px;background:#808080"></div><div class="a" style="left:3px;top:137px;width:3px;height:1px;background:#808080"></div><div class="a" style="left:3px;top:106px;width:3px;height:1px;background:#fff"></div><div class="a" style="left:11px;top:106px;width:44px;height:32px;background:#808080"></div><div class="a" style="left:11px;top:106px;width:43px;height:31px;background:#fff"></div><div class="a" style="left:12px;top:107px;width:42px;height:30px;background:linear-gradient(180deg,#edebe5 0%,#dcd9d2 45%,#bcb9b0 100%)"></div><div class="a" style="left:55px;top:106px;width:44px;height:32px;background:#808080"></div><div class="a" style="left:55px;top:106px;width:43px;height:31px;background:#fff"></div><div class="a" style="left:56px;top:107px;width:42px;height:30px;background:linear-gradient(180deg,#edebe5 0%,#dcd9d2 45%,#bcb9b0 100%)"></div><div class="a" style="left:99px;top:106px;width:44px;height:32px;background:#808080"></div><div class="a" style="left:99px;top:106px;width:43px;height:31px;background:#fff"></div><div class="a" style="left:100px;top:107px;width:42px;height:30px;background:linear-gradient(180deg,#edebe5 0%,#dcd9d2 45%,#bcb9b0 100%)"></div><div class="a" style="left:151px;top:106px;width:44px;height:32px;background:#808080"></div><div class="a" style="left:151px;top:106px;width:43px;height:31px;background:#fff"></div><div class="a" style="left:152px;top:107px;width:42px;height:30px;background:linear-gradient(180deg,#edebe5 0%,#dcd9d2 45%,#bcb9b0 100%)"></div><div class="a" style="left:195px;top:106px;width:43px;height:32px;background:#808080"></div><div class="a" style="left:195px;top:106px;width:42px;height:31px;background:#fff"></div><div class="a" style="left:196px;top:107px;width:41px;height:30px;background:linear-gradient(180deg,#edebe5 0%,#dcd9d2 45%,#bcb9b0 100%)"></div><div class="a" style="left:334px;top:106px;width:43px;height:32px;background:#808080"></div><div class="a" style="left:334px;top:106px;width:42px;height:31px;background:#fff"></div><div class="a" style="left:335px;top:107px;width:41px;height:30px;background:linear-gradient(180deg,#edebe5 0%,#dcd9d2 45%,#bcb9b0 100%)"></div><div class="a" style="left:377px;top:106px;width:44px;height:32px;background:#808080"></div><div class="a" style="left:377px;top:106px;width:43px;height:31px;background:#fff"></div><div class="a" style="left:378px;top:107px;width:42px;height:30px;background:linear-gradient(180deg,#edebe5 0%,#dcd9d2 45%,#bcb9b0 100%)"></div><div class="a" style="left:429px;top:106px;width:43px;height:32px;background:#808080"></div><div class="a" style="left:429px;top:106px;width:42px;height:31px;background:#fff"></div><div class="a" style="left:430px;top:107px;width:41px;height:30px;background:linear-gradient(180deg,#edebe5 0%,#dcd9d2 45%,#bcb9b0 100%)"></div><div class="a" style="left:472px;top:106px;width:44px;height:32px;background:#808080"></div><div class="a" style="left:472px;top:106px;width:43px;height:31px;background:#fff"></div><div class="a" style="left:473px;top:107px;width:42px;height:30px;background:linear-gradient(180deg,#edebe5 0%,#dcd9d2 45%,#bcb9b0 100%)"></div><svg class="a" style="left:20px;top:109px" width="28" height="26" viewBox="0 0 28 26"><defs><linearGradient id="pg" x1="0" y1="0" x2="0" y2="1"><stop offset="0" stop-color="#30ff30"/><stop offset="1" stop-color="#00c000"/></linearGradient></defs><path d="M3,3 L25,13.5 L3,24 Z" fill="#404040" opacity="0.6"/><path d="M2,2 L24,12.5 L2,23 Z" fill="url(#pg)"/></svg><svg class="a" style="left:63px;top:109px" width="30" height="26" viewBox="0 0 30 26"><rect x="2" y="2" width="24" height="22" fill="#a8a0d8"/><rect x="1" y="1" width="3" height="24" fill="#00e8f0"/><rect x="25" y="1" width="3" height="24" fill="#00e8f0"/><path d="M6,4 L25,13 L6,22 Z" fill="#404040" opacity="0.5"/><path d="M5,3 L24,12.5 L5,22 Z" fill="url(#pg)"/></svg><svg class="a" style="left:106px;top:109px" width="30" height="26" viewBox="0 0 30 26"><path d="M2,4 L22,13.5 L2,23 Z" fill="url(#pg)"/><path d="M8.5,1.5 H11 V24.5 H8.5" fill="none" stroke="#606060" stroke-width="1"/><path d="M10.5,2 V24" stroke="#e8e8e8" stroke-width="1"/><circle cx="25.5" cy="13" r="2.8" fill="#0000ff"/></svg><svg class="a" style="left:157px;top:115px" width="30" height="16" viewBox="0 0 30 16"><path d="M1,7 L14,0 V14 Z M14,7 L27,0 V14 Z" fill="#303030" transform="translate(1,1)"/><path d="M1,7 L14,0 V14 Z M14,7 L27,0 V14 Z" fill="#0000ff"/></svg><svg class="a" style="left:202px;top:115px" width="30" height="16" viewBox="0 0 30 16"><path d="M0,0 L13,7 L0,14 Z M13,0 L26,7 L13,14 Z" fill="#303030" transform="translate(1,1)"/><path d="M0,0 L13,7 L0,14 Z M13,0 L26,7 L13,14 Z" fill="#0000ff"/></svg><svg class="a" style="left:251px;top:113px" width="20" height="19" viewBox="0 0 20 19"><rect x="1" y="1" width="7" height="16.5" rx="1.5" fill="#a4a4a4"/><rect x="11" y="1" width="7" height="16.5" rx="1.5" fill="#a4a4a4"/></svg><svg class="a" style="left:295px;top:113px" width="20" height="19" viewBox="0 0 20 19"><rect x="1" y="1" width="17" height="16.5" rx="1.5" fill="#a4a4a4"/></svg><svg class="a" style="left:341px;top:107px" width="28" height="29" viewBox="0 0 28 29"><defs><radialGradient id="rg" cx="0.4" cy="0.35" r="0.7"><stop offset="0" stop-color="#ff3030"/><stop offset="1" stop-color="#c00000"/></radialGradient></defs><path d="M1.5,1.5 H19 L26.5,9 V27.5 H1.5 Z" fill="#f0f0f0" stroke="#b0b0b0"/><circle cx="14" cy="14.5" r="10.5" fill="url(#rg)"/><path d="M19,1.5 V9 H26.5" fill="#fff" stroke="#b0b0b0"/></svg><svg class="a" style="left:385px;top:109px" width="28" height="26" viewBox="0 0 28 26"><rect x="2" y="2" width="23" height="22" fill="#a8a0d8"/><rect x="1" y="1" width="3" height="24" fill="#00e8f0"/><rect x="24" y="1" width="3" height="24" fill="#00e8f0"/><circle cx="14" cy="13" r="10.5" fill="url(#rg)"/></svg><svg class="a" style="left:435px;top:114px" width="32" height="17" viewBox="0 0 32 17"><circle cx="7" cy="8" r="5.5" fill="#e8e8f0" stroke="#a0a0b0"/><circle cx="7" cy="8" r="3.2" fill="#1060c0"/><circle cx="6.2" cy="7.2" r="1.2" fill="#80c0ff"/><rect x="16.5" y="2.5" width="13" height="12" fill="#f0f0f0" stroke="#909090"/><path d="M19,8 L22,12 L28,4" stroke="#2040c0" stroke-width="1.8" fill="none"/></svg><svg class="a" style="left:481px;top:110px" width="27" height="24" viewBox="0 0 27 24"><rect x="0.5" y="0.5" width="26" height="23" fill="#fff" stroke="#0000c0"/><rect x="0.5" y="0.5" width="26" height="2.5" fill="#0000c0"/><rect x="21" y="1" width="4" height="1.5" fill="#ff3030"/><rect x="3" y="5" width="2" height="2" fill="#50e050"/><rect x="6" y="5" width="2" height="2" fill="#50e050"/><rect x="9" y="5" width="2" height="2" fill="#50e050"/><rect x="3" y="8" width="9" height="1.5" fill="#4040ff"/><rect x="3" y="11" width="2" height="1.5" fill="#ff0000"/><path d="M14,5.5H24 M14,8.5H24 M14,11.5H24" stroke="#a0a0a0"/><rect x="2" y="14" width="10" height="8" fill="#000"/><rect x="14" y="14" width="10" height="8" fill="#000"/><rect x="14" y="13" width="10" height="1.5" fill="#309030"/></svg><div class="a" style="left:518px;top:104px;width:698px;height:36px;background:#808080"></div><div class="a" style="left:518px;top:104px;width:697px;height:35px;background:#fff"></div><div class="a" style="left:519px;top:105px;width:696px;height:34px;background:#d4d0c8"></div><div class="a" style="left:521px;top:106px;width:1px;height:31px;background:#fff"></div><div class="a" style="left:523px;top:106px;width:1px;height:31px;background:#808080"></div><div class="a" style="left:528px;top:106px;width:681px;height:31px;background:#808080"></div><div class="a" style="left:529px;top:107px;width:680px;height:31px;background:#fff"></div><div class="a" style="left:529px;top:107px;width:679px;height:30px;background:#d4d0c8"></div><div class="t" style="left:532px;top:110px;font-size:9px;color:#000;font-weight:bold;">L</div><div class="t" style="left:531px;top:125px;font-size:9px;color:#000;font-weight:bold;">R</div><div class="a" style="left:540px;top:107px;width:656px;height:30px;background:linear-gradient(90deg,#006000 0%,#3c6e00 30%,#808000 66%,#800000 100%)"></div><div class="a" style="left:540px;top:107px;width:1px;height:30px;background:#00e000"></div><div class="a" style="left:1198px;top:110px;width:6px;height:9px;background:#000"></div><div class="a" style="left:1198px;top:124px;width:6px;height:10px;background:#000"></div><div class="a" style="left:1208px;top:104px;width:158px;height:36px;background:#808080"></div><div class="a" style="left:1208px;top:104px;width:158px;height:35px;background:#fff"></div><div class="a" style="left:1209px;top:105px;width:157px;height:34px;background:#d4d0c8"></div><div class="a" style="left:1213px;top:107px;width:1px;height:30px;background:#fff"></div><div class="a" style="left:1215px;top:107px;width:1px;height:30px;background:#808080"></div><div class="a" style="left:1219px;top:106px;width:145px;height:32px;background:#808080"></div><div class="a" style="left:1220px;top:107px;width:144px;height:31px;background:#fff"></div><div class="a" style="left:1220px;top:107px;width:143px;height:30px;background:#000"></div><div class="t" style="left:1224px;top:111px;font-size:24px;color:#00ff00;font-weight:normal;letter-spacing:0px">00:00:00.0</div><div class="a" style="left:1344px;top:110px;width:10px;height:10px;background:#008000"></div><div class="a" style="left:1344px;top:123px;width:10px;height:10px;background:#800000"></div><div class="a" style="left:14px;top:634px;width:1px;height:17px;background:#808080"></div><div class="a" style="left:15px;top:634px;width:1px;height:17px;background:#8c8484"></div><div class="a" style="left:16px;top:634px;width:1330px;height:1px;background:#fff"></div><div class="a" style="left:16px;top:650px;width:1330px;height:2px;background:#fff"></div><div class="a" style="left:16px;top:635px;width:1px;height:6px;background:#000"></div><div class="a" style="left:22px;top:635px;width:1px;height:2px;background:#000"></div><div class="a" style="left:27px;top:635px;width:1px;height:2px;background:#000"></div><div class="a" style="left:33px;top:635px;width:1px;height:2px;background:#000"></div><div class="a" style="left:38px;top:635px;width:1px;height:2px;background:#000"></div><div class="a" style="left:44px;top:635px;width:1px;height:4px;background:#000"></div><div class="a" style="left:50px;top:635px;width:1px;height:2px;background:#000"></div><div class="a" style="left:55px;top:635px;width:1px;height:2px;background:#000"></div><div class="a" style="left:61px;top:635px;width:1px;height:2px;background:#000"></div><div class="a" style="left:67px;top:635px;width:1px;height:2px;background:#000"></div><div class="a" style="left:72px;top:635px;width:1px;height:6px;background:#000"></div><div class="a" style="left:78px;top:635px;width:1px;height:2px;background:#000"></div><div class="a" style="left:84px;top:635px;width:1px;height:2px;background:#000"></div><div class="a" style="left:89px;top:635px;width:1px;height:2px;background:#000"></div><div class="a" style="left:95px;top:635px;width:1px;height:2px;background:#000"></div><div class="a" style="left:100px;top:635px;width:1px;height:4px;background:#000"></div><div class="a" style="left:106px;top:635px;width:1px;height:2px;background:#000"></div><div class="a" style="left:112px;top:635px;width:1px;height:2px;background:#000"></div><div class="a" style="left:117px;top:635px;width:1px;height:2px;background:#000"></div><div class="a" style="left:123px;top:635px;width:1px;height:2px;background:#000"></div><div class="a" style="left:129px;top:635px;width:1px;height:6px;background:#000"></div><div class="a" style="left:134px;top:635px;width:1px;height:2px;background:#000"></div><div class="a" style="left:140px;top:635px;width:1px;height:2px;background:#000"></div><div class="a" style="left:145px;top:635px;width:1px;height:2px;background:#000"></div><div class="a" style="left:151px;top:635px;width:1px;height:2px;background:#000"></div><div class="a" style="left:157px;top:635px;width:1px;height:4px;background:#000"></div><div class="a" style="left:162px;top:635px;width:1px;height:2px;background:#000"></div><div class="a" style="left:168px;top:635px;width:1px;height:2px;background:#000"></div><div class="a" style="left:174px;top:635px;width:1px;height:2px;background:#000"></div><div class="a" style="left:179px;top:635px;width:1px;height:2px;background:#000"></div><div class="a" style="left:185px;top:635px;width:1px;height:6px;background:#000"></div><div class="a" style="left:190px;top:635px;width:1px;height:2px;background:#000"></div><div class="a" style="left:196px;top:635px;width:1px;height:2px;background:#000"></div><div class="a" style="left:202px;top:635px;width:1px;height:2px;background:#000"></div><div class="a" style="left:207px;top:635px;width:1px;height:2px;background:#000"></div><div class="a" style="left:213px;top:635px;width:1px;height:4px;background:#000"></div><div class="a" style="left:219px;top:635px;width:1px;height:2px;background:#000"></div><div class="a" style="left:224px;top:635px;width:1px;height:2px;background:#000"></div><div class="a" style="left:230px;top:635px;width:1px;height:2px;background:#000"></div><div class="a" style="left:236px;top:635px;width:1px;height:2px;background:#000"></div><div class="a" style="left:241px;top:635px;width:1px;height:6px;background:#000"></div><div class="a" style="left:247px;top:635px;width:1px;height:2px;background:#000"></div><div class="a" style="left:252px;top:635px;width:1px;height:2px;background:#000"></div><div class="a" style="left:258px;top:635px;width:1px;height:2px;background:#000"></div><div class="a" style="left:264px;top:635px;width:1px;height:2px;background:#000"></div><div class="a" style="left:269px;top:635px;width:1px;height:4px;background:#000"></div><div class="a" style="left:275px;top:635px;width:1px;height:2px;background:#000"></div><div class="a" style="left:281px;top:635px;width:1px;height:2px;background:#000"></div><div class="a" style="left:286px;top:635px;width:1px;height:2px;background:#000"></div><div class="a" style="left:292px;top:635px;width:1px;height:2px;background:#000"></div><div class="a" style="left:297px;top:635px;width:1px;height:6px;background:#000"></div><div class="a" style="left:303px;top:635px;width:1px;height:2px;background:#000"></div><div class="a" style="left:309px;top:635px;width:1px;height:2px;background:#000"></div><div class="a" style="left:314px;top:635px;width:1px;height:2px;background:#000"></div><div class="a" style="left:320px;top:635px;width:1px;height:2px;background:#000"></div><div class="a" style="left:326px;top:635px;width:1px;height:4px;background:#000"></div><div class="a" style="left:331px;top:635px;width:1px;height:2px;background:#000"></div><div class="a" style="left:337px;top:635px;width:1px;height:2px;background:#000"></div><div class="a" style="left:342px;top:635px;width:1px;height:2px;background:#000"></div><div class="a" style="left:348px;top:635px;width:1px;height:2px;background:#000"></div><div class="a" style="left:354px;top:635px;width:1px;height:6px;background:#000"></div><div class="a" style="left:359px;top:635px;width:1px;height:2px;background:#000"></div><div class="a" style="left:365px;top:635px;width:1px;height:2px;background:#000"></div><div class="a" style="left:371px;top:635px;width:1px;height:2px;background:#000"></div><div class="a" style="left:376px;top:635px;width:1px;height:2px;background:#000"></div><div class="a" style="left:382px;top:635px;width:1px;height:4px;background:#000"></div><div class="a" style="left:388px;top:635px;width:1px;height:2px;background:#000"></div><div class="a" style="left:393px;top:635px;width:1px;height:2px;background:#000"></div><div class="a" style="left:399px;top:635px;width:1px;height:2px;background:#000"></div><div class="a" style="left:404px;top:635px;width:1px;height:2px;background:#000"></div><div class="a" style="left:410px;top:635px;width:1px;height:6px;background:#000"></div><div class="a" style="left:416px;top:635px;width:1px;height:2px;background:#000"></div><div class="a" style="left:421px;top:635px;width:1px;height:2px;background:#000"></div><div class="a" style="left:427px;top:635px;width:1px;height:2px;background:#000"></div><div class="a" style="left:433px;top:635px;width:1px;height:2px;background:#000"></div><div class="a" style="left:438px;top:635px;width:1px;height:4px;background:#000"></div><div class="a" style="left:444px;top:635px;width:1px;height:2px;background:#000"></div><div class="a" style="left:449px;top:635px;width:1px;height:2px;background:#000"></div><div class="a" style="left:455px;top:635px;width:1px;height:2px;background:#000"></div><div class="a" style="left:461px;top:635px;width:1px;height:2px;background:#000"></div><div class="a" style="left:466px;top:635px;width:1px;height:6px;background:#000"></div><div class="a" style="left:472px;top:635px;width:1px;height:2px;background:#000"></div><div class="a" style="left:478px;top:635px;width:1px;height:2px;background:#000"></div><div class="a" style="left:483px;top:635px;width:1px;height:2px;background:#000"></div><div class="a" style="left:489px;top:635px;width:1px;height:2px;background:#000"></div><div class="a" style="left:495px;top:635px;width:1px;height:4px;background:#000"></div><div class="a" style="left:500px;top:635px;width:1px;height:2px;background:#000"></div><div class="a" style="left:506px;top:635px;width:1px;height:2px;background:#000"></div><div class="a" style="left:511px;top:635px;width:1px;height:2px;background:#000"></div><div class="a" style="left:517px;top:635px;width:1px;height:2px;background:#000"></div><div class="a" style="left:523px;top:635px;width:1px;height:6px;background:#000"></div><div class="a" style="left:528px;top:635px;width:1px;height:2px;background:#000"></div><div class="a" style="left:534px;top:635px;width:1px;height:2px;background:#000"></div><div class="a" style="left:540px;top:635px;width:1px;height:2px;background:#000"></div><div class="a" style="left:545px;top:635px;width:1px;height:2px;background:#000"></div><div class="a" style="left:551px;top:635px;width:1px;height:4px;background:#000"></div><div class="a" style="left:556px;top:635px;width:1px;height:2px;background:#000"></div><div class="a" style="left:562px;top:635px;width:1px;height:2px;background:#000"></div><div class="a" style="left:568px;top:635px;width:1px;height:2px;background:#000"></div><div class="a" style="left:573px;top:635px;width:1px;height:2px;background:#000"></div><div class="a" style="left:579px;top:635px;width:1px;height:6px;background:#000"></div><div class="a" style="left:585px;top:635px;width:1px;height:2px;background:#000"></div><div class="a" style="left:590px;top:635px;width:1px;height:2px;background:#000"></div><div class="a" style="left:596px;top:635px;width:1px;height:2px;background:#000"></div><div class="a" style="left:601px;top:635px;width:1px;height:2px;background:#000"></div><div class="a" style="left:607px;top:635px;width:1px;height:4px;background:#000"></div><div class="a" style="left:613px;top:635px;width:1px;height:2px;background:#000"></div><div class="a" style="left:618px;top:635px;width:1px;height:2px;background:#000"></div><div class="a" style="left:624px;top:635px;width:1px;height:2px;background:#000"></div><div class="a" style="left:630px;top:635px;width:1px;height:2px;background:#000"></div><div class="a" style="left:635px;top:635px;width:1px;height:6px;background:#000"></div><div class="a" style="left:641px;top:635px;width:1px;height:2px;background:#000"></div><div class="a" style="left:647px;top:635px;width:1px;height:2px;background:#000"></div><div class="a" style="left:652px;top:635px;width:1px;height:2px;background:#000"></div><div class="a" style="left:658px;top:635px;width:1px;height:2px;background:#000"></div><div class="a" style="left:663px;top:635px;width:1px;height:4px;background:#000"></div><div class="a" style="left:669px;top:635px;width:1px;height:2px;background:#000"></div><div class="a" style="left:675px;top:635px;width:1px;height:2px;background:#000"></div><div class="a" style="left:680px;top:635px;width:1px;height:2px;background:#000"></div><div class="a" style="left:686px;top:635px;width:1px;height:2px;background:#000"></div><div class="a" style="left:692px;top:635px;width:1px;height:6px;background:#000"></div><div class="a" style="left:697px;top:635px;width:1px;height:2px;background:#000"></div><div class="a" style="left:703px;top:635px;width:1px;height:2px;background:#000"></div><div class="a" style="left:708px;top:635px;width:1px;height:2px;background:#000"></div><div class="a" style="left:714px;top:635px;width:1px;height:2px;background:#000"></div><div class="a" style="left:720px;top:635px;width:1px;height:4px;background:#000"></div><div class="a" style="left:725px;top:635px;width:1px;height:2px;background:#000"></div><div class="a" style="left:731px;top:635px;width:1px;height:2px;background:#000"></div><div class="a" style="left:737px;top:635px;width:1px;height:2px;background:#000"></div><div class="a" style="left:742px;top:635px;width:1px;height:2px;background:#000"></div><div class="a" style="left:748px;top:635px;width:1px;height:6px;background:#000"></div><div class="a" style="left:753px;top:635px;width:1px;height:2px;background:#000"></div><div class="a" style="left:759px;top:635px;width:1px;height:2px;background:#000"></div><div class="a" style="left:765px;top:635px;width:1px;height:2px;background:#000"></div><div class="a" style="left:770px;top:635px;width:1px;height:2px;background:#000"></div><div class="a" style="left:776px;top:635px;width:1px;height:4px;background:#000"></div><div class="a" style="left:782px;top:635px;width:1px;height:2px;background:#000"></div><div class="a" style="left:787px;top:635px;width:1px;height:2px;background:#000"></div><div class="a" style="left:793px;top:635px;width:1px;height:2px;background:#000"></div><div class="a" style="left:799px;top:635px;width:1px;height:2px;background:#000"></div><div class="a" style="left:804px;top:635px;width:1px;height:6px;background:#000"></div><div class="a" style="left:810px;top:635px;width:1px;height:2px;background:#000"></div><div class="a" style="left:815px;top:635px;width:1px;height:2px;background:#000"></div><div class="a" style="left:821px;top:635px;width:1px;height:2px;background:#000"></div><div class="a" style="left:827px;top:635px;width:1px;height:2px;background:#000"></div><div class="a" style="left:832px;top:635px;width:1px;height:4px;background:#000"></div><div class="a" style="left:838px;top:635px;width:1px;height:2px;background:#000"></div><div class="a" style="left:844px;top:635px;width:1px;height:2px;background:#000"></div><div class="a" style="left:849px;top:635px;width:1px;height:2px;background:#000"></div><div class="a" style="left:855px;top:635px;width:1px;height:2px;background:#000"></div><div class="a" style="left:860px;top:635px;width:1px;height:6px;background:#000"></div><div class="a" style="left:866px;top:635px;width:1px;height:2px;background:#000"></div><div class="a" style="left:872px;top:635px;width:1px;height:2px;background:#000"></div><div class="a" style="left:877px;top:635px;width:1px;height:2px;background:#000"></div><div class="a" style="left:883px;top:635px;width:1px;height:2px;background:#000"></div><div class="a" style="left:889px;top:635px;width:1px;height:4px;background:#000"></div><div class="a" style="left:894px;top:635px;width:1px;height:2px;background:#000"></div><div class="a" style="left:900px;top:635px;width:1px;height:2px;background:#000"></div><div class="a" style="left:905px;top:635px;width:1px;height:2px;background:#000"></div><div class="a" style="left:911px;top:635px;width:1px;height:2px;background:#000"></div><div class="a" style="left:917px;top:635px;width:1px;height:6px;background:#000"></div><div class="a" style="left:922px;top:635px;width:1px;height:2px;background:#000"></div><div class="a" style="left:928px;top:635px;width:1px;height:2px;background:#000"></div><div class="a" style="left:934px;top:635px;width:1px;height:2px;background:#000"></div><div class="a" style="left:939px;top:635px;width:1px;height:2px;background:#000"></div><div class="a" style="left:945px;top:635px;width:1px;height:4px;background:#000"></div><div class="a" style="left:951px;top:635px;width:1px;height:2px;background:#000"></div><div class="a" style="left:956px;top:635px;width:1px;height:2px;background:#000"></div><div class="a" style="left:962px;top:635px;width:1px;height:2px;background:#000"></div><div class="a" style="left:967px;top:635px;width:1px;height:2px;background:#000"></div><div class="a" style="left:973px;top:635px;width:1px;height:6px;background:#000"></div><div class="a" style="left:979px;top:635px;width:1px;height:2px;background:#000"></div><div class="a" style="left:984px;top:635px;width:1px;height:2px;background:#000"></div><div class="a" style="left:990px;top:635px;width:1px;height:2px;background:#000"></div><div class="a" style="left:996px;top:635px;width:1px;height:2px;background:#000"></div><div class="a" style="left:1001px;top:635px;width:1px;height:4px;background:#000"></div><div class="a" style="left:1007px;top:635px;width:1px;height:2px;background:#000"></div><div class="a" style="left:1012px;top:635px;width:1px;height:2px;background:#000"></div><div class="a" style="left:1018px;top:635px;width:1px;height:2px;background:#000"></div><div class="a" style="left:1024px;top:635px;width:1px;height:2px;background:#000"></div><div class="a" style="left:1029px;top:635px;width:1px;height:6px;background:#000"></div><div class="a" style="left:1035px;top:635px;width:1px;height:2px;background:#000"></div><div class="a" style="left:1041px;top:635px;width:1px;height:2px;background:#000"></div><div class="a" style="left:1046px;top:635px;width:1px;height:2px;background:#000"></div><div class="a" style="left:1052px;top:635px;width:1px;height:2px;background:#000"></div><div class="a" style="left:1058px;top:635px;width:1px;height:4px;background:#000"></div><div class="a" style="left:1063px;top:635px;width:1px;height:2px;background:#000"></div><div class="a" style="left:1069px;top:635px;width:1px;height:2px;background:#000"></div><div class="a" style="left:1074px;top:635px;width:1px;height:2px;background:#000"></div><div class="a" style="left:1080px;top:635px;width:1px;height:2px;background:#000"></div><div class="a" style="left:1086px;top:635px;width:1px;height:6px;background:#000"></div><div class="a" style="left:1091px;top:635px;width:1px;height:2px;background:#000"></div><div class="a" style="left:1097px;top:635px;width:1px;height:2px;background:#000"></div><div class="a" style="left:1103px;top:635px;width:1px;height:2px;background:#000"></div><div class="a" style="left:1108px;top:635px;width:1px;height:2px;background:#000"></div><div class="a" style="left:1114px;top:635px;width:1px;height:4px;background:#000"></div><div class="a" style="left:1119px;top:635px;width:1px;height:2px;background:#000"></div><div class="a" style="left:1125px;top:635px;width:1px;height:2px;background:#000"></div><div class="a" style="left:1131px;top:635px;width:1px;height:2px;background:#000"></div><div class="a" style="left:1136px;top:635px;width:1px;height:2px;background:#000"></div><div class="a" style="left:1142px;top:635px;width:1px;height:6px;background:#000"></div><div class="a" style="left:1148px;top:635px;width:1px;height:2px;background:#000"></div><div class="a" style="left:1153px;top:635px;width:1px;height:2px;background:#000"></div><div class="a" style="left:1159px;top:635px;width:1px;height:2px;background:#000"></div><div class="a" style="left:1164px;top:635px;width:1px;height:2px;background:#000"></div><div class="a" style="left:1170px;top:635px;width:1px;height:4px;background:#000"></div><div class="a" style="left:1176px;top:635px;width:1px;height:2px;background:#000"></div><div class="a" style="left:1181px;top:635px;width:1px;height:2px;background:#000"></div><div class="a" style="left:1187px;top:635px;width:1px;height:2px;background:#000"></div><div class="a" style="left:1193px;top:635px;width:1px;height:2px;background:#000"></div><div class="a" style="left:1198px;top:635px;width:1px;height:6px;background:#000"></div><div class="a" style="left:1204px;top:635px;width:1px;height:2px;background:#000"></div><div class="a" style="left:1210px;top:635px;width:1px;height:2px;background:#000"></div><div class="a" style="left:1215px;top:635px;width:1px;height:2px;background:#000"></div><div class="a" style="left:1221px;top:635px;width:1px;height:2px;background:#000"></div><div class="a" style="left:1226px;top:635px;width:1px;height:4px;background:#000"></div><div class="a" style="left:1232px;top:635px;width:1px;height:2px;background:#000"></div><div class="a" style="left:1238px;top:635px;width:1px;height:2px;background:#000"></div><div class="a" style="left:1243px;top:635px;width:1px;height:2px;background:#000"></div><div class="a" style="left:1249px;top:635px;width:1px;height:2px;background:#000"></div><div class="a" style="left:1255px;top:635px;width:1px;height:6px;background:#000"></div><div class="a" style="left:1260px;top:635px;width:1px;height:2px;background:#000"></div><div class="a" style="left:1266px;top:635px;width:1px;height:2px;background:#000"></div><div class="a" style="left:1271px;top:635px;width:1px;height:2px;background:#000"></div><div class="a" style="left:1277px;top:635px;width:1px;height:2px;background:#000"></div><div class="a" style="left:1283px;top:635px;width:1px;height:4px;background:#000"></div><div class="a" style="left:1288px;top:635px;width:1px;height:2px;background:#000"></div><div class="a" style="left:1294px;top:635px;width:1px;height:2px;background:#000"></div><div class="a" style="left:1300px;top:635px;width:1px;height:2px;background:#000"></div><div class="a" style="left:1305px;top:635px;width:1px;height:2px;background:#000"></div><div class="a" style="left:1311px;top:635px;width:1px;height:6px;background:#000"></div><div class="a" style="left:1316px;top:635px;width:1px;height:2px;background:#000"></div><div class="a" style="left:1322px;top:635px;width:1px;height:2px;background:#000"></div><div class="a" style="left:1328px;top:635px;width:1px;height:2px;background:#000"></div><div class="a" style="left:1333px;top:635px;width:1px;height:2px;background:#000"></div><div class="a" style="left:1339px;top:635px;width:1px;height:4px;background:#000"></div><div class="t" style="left:17.5px;top:640px;font-size:11px;color:#000;font-weight:normal;letter-spacing:0.25px">0:00.0</div><div class="t" style="left:73.5px;top:640px;font-size:11px;color:#000;font-weight:normal;letter-spacing:0.25px">0:00.1</div><div class="t" style="left:130.5px;top:640px;font-size:11px;color:#000;font-weight:normal;letter-spacing:0.25px">0:00.2</div><div class="t" style="left:186.5px;top:640px;font-size:11px;color:#000;font-weight:normal;letter-spacing:0.25px">0:00.3</div><div class="t" style="left:242.5px;top:640px;font-size:11px;color:#000;font-weight:normal;letter-spacing:0.25px">0:00.4</div><div class="t" style="left:298.5px;top:640px;font-size:11px;color:#000;font-weight:normal;letter-spacing:0.25px">0:00.5</div><div class="t" style="left:355.5px;top:640px;font-size:11px;color:#000;font-weight:normal;letter-spacing:0.25px">0:00.6</div><div class="t" style="left:411.5px;top:640px;font-size:11px;color:#000;font-weight:normal;letter-spacing:0.25px">0:00.7</div><div class="t" style="left:467.5px;top:640px;font-size:11px;color:#000;font-weight:normal;letter-spacing:0.25px">0:00.8</div><div class="t" style="left:524.5px;top:640px;font-size:11px;color:#000;font-weight:normal;letter-spacing:0.25px">0:00.9</div><div class="t" style="left:580.5px;top:640px;font-size:11px;color:#000;font-weight:normal;letter-spacing:0.25px">0:01.0</div><div class="t" style="left:636.5px;top:640px;font-size:11px;color:#000;font-weight:normal;letter-spacing:0.25px">0:01.1</div><div class="t" style="left:693.5px;top:640px;font-size:11px;color:#000;font-weight:normal;letter-spacing:0.25px">0:01.2</div><div class="t" style="left:749.5px;top:640px;font-size:11px;color:#000;font-weight:normal;letter-spacing:0.25px">0:01.3</div><div class="t" style="left:805.5px;top:640px;font-size:11px;color:#000;font-weight:normal;letter-spacing:0.25px">0:01.4</div><div class="t" style="left:861.5px;top:640px;font-size:11px;color:#000;font-weight:normal;letter-spacing:0.25px">0:01.5</div><div class="t" style="left:918.5px;top:640px;font-size:11px;color:#000;font-weight:normal;letter-spacing:0.25px">0:01.6</div><div class="t" style="left:974.5px;top:640px;font-size:11px;color:#000;font-weight:normal;letter-spacing:0.25px">0:01.7</div><div class="t" style="left:1030.5px;top:640px;font-size:11px;color:#000;font-weight:normal;letter-spacing:0.25px">0:01.8</div><div class="t" style="left:1087.5px;top:640px;font-size:11px;color:#000;font-weight:normal;letter-spacing:0.25px">0:01.9</div><div class="t" style="left:1143.5px;top:640px;font-size:11px;color:#000;font-weight:normal;letter-spacing:0.25px">0:02.0</div><div class="t" style="left:1199.5px;top:640px;font-size:11px;color:#000;font-weight:normal;letter-spacing:0.25px">0:02.1</div><div class="t" style="left:1256.5px;top:640px;font-size:11px;color:#000;font-weight:normal;letter-spacing:0.25px">0:02.2</div><div class="t" style="left:1312.5px;top:640px;font-size:11px;color:#000;font-weight:normal;letter-spacing:0.25px">0:02.3</div><div class="a" style="left:14px;top:654px;width:1332px;height:1px;background:#808080"></div><div class="a" style="left:14px;top:655px;width:1332px;height:1px;background:#404040"></div><div class="a" style="left:14px;top:654px;width:1px;height:57px;background:#808080"></div><div class="a" style="left:15px;top:655px;width:1px;height:56px;background:#404040"></div><div class="a" style="left:16px;top:696px;width:1330px;height:1px;background:#fff"></div><div class="a" style="left:16px;top:710px;width:1330px;height:2px;background:#fff"></div><div class="a" style="left:16px;top:697px;width:1px;height:6px;background:#000"></div><div class="a" style="left:26px;top:697px;width:1px;height:2px;background:#000"></div><div class="a" style="left:35px;top:697px;width:1px;height:2px;background:#000"></div><div class="a" style="left:45px;top:697px;width:1px;height:2px;background:#000"></div><div class="a" style="left:54px;top:697px;width:1px;height:2px;background:#000"></div><div class="a" style="left:64px;top:697px;width:1px;height:6px;background:#000"></div><div class="a" style="left:74px;top:697px;width:1px;height:2px;background:#000"></div><div class="a" style="left:83px;top:697px;width:1px;height:2px;background:#000"></div><div class="a" style="left:93px;top:697px;width:1px;height:2px;background:#000"></div><div class="a" style="left:102px;top:697px;width:1px;height:2px;background:#000"></div><div class="a" style="left:112px;top:697px;width:1px;height:6px;background:#000"></div><div class="a" style="left:122px;top:697px;width:1px;height:2px;background:#000"></div><div class="a" style="left:131px;top:697px;width:1px;height:2px;background:#000"></div><div class="a" style="left:141px;top:697px;width:1px;height:2px;background:#000"></div><div class="a" style="left:151px;top:697px;width:1px;height:2px;background:#000"></div><div class="a" style="left:160px;top:697px;width:1px;height:6px;background:#000"></div><div class="a" style="left:170px;top:697px;width:1px;height:2px;background:#000"></div><div class="a" style="left:179px;top:697px;width:1px;height:2px;background:#000"></div><div class="a" style="left:189px;top:697px;width:1px;height:2px;background:#000"></div><div class="a" style="left:199px;top:697px;width:1px;height:2px;background:#000"></div><div class="a" style="left:208px;top:697px;width:1px;height:6px;background:#000"></div><div class="a" style="left:218px;top:697px;width:1px;height:2px;background:#000"></div><div class="a" style="left:227px;top:697px;width:1px;height:2px;background:#000"></div><div class="a" style="left:237px;top:697px;width:1px;height:2px;background:#000"></div><div class="a" style="left:247px;top:697px;width:1px;height:2px;background:#000"></div><div class="a" style="left:256px;top:697px;width:1px;height:6px;background:#000"></div><div class="a" style="left:266px;top:697px;width:1px;height:2px;background:#000"></div><div class="a" style="left:276px;top:697px;width:1px;height:2px;background:#000"></div><div class="a" style="left:285px;top:697px;width:1px;height:2px;background:#000"></div><div class="a" style="left:295px;top:697px;width:1px;height:2px;background:#000"></div><div class="a" style="left:304px;top:697px;width:1px;height:6px;background:#000"></div><div class="a" style="left:314px;top:697px;width:1px;height:2px;background:#000"></div><div class="a" style="left:324px;top:697px;width:1px;height:2px;background:#000"></div><div class="a" style="left:333px;top:697px;width:1px;height:2px;background:#000"></div><div class="a" style="left:343px;top:697px;width:1px;height:2px;background:#000"></div><div class="a" style="left:352px;top:697px;width:1px;height:6px;background:#000"></div><div class="a" style="left:362px;top:697px;width:1px;height:2px;background:#000"></div><div class="a" style="left:372px;top:697px;width:1px;height:2px;background:#000"></div><div class="a" style="left:381px;top:697px;width:1px;height:2px;background:#000"></div><div class="a" style="left:391px;top:697px;width:1px;height:2px;background:#000"></div><div class="a" style="left:401px;top:697px;width:1px;height:6px;background:#000"></div><div class="a" style="left:410px;top:697px;width:1px;height:2px;background:#000"></div><div class="a" style="left:420px;top:697px;width:1px;height:2px;background:#000"></div><div class="a" style="left:429px;top:697px;width:1px;height:2px;background:#000"></div><div class="a" style="left:439px;top:697px;width:1px;height:2px;background:#000"></div><div class="a" style="left:449px;top:697px;width:1px;height:6px;background:#000"></div><div class="a" style="left:458px;top:697px;width:1px;height:2px;background:#000"></div><div class="a" style="left:468px;top:697px;width:1px;height:2px;background:#000"></div><div class="a" style="left:477px;top:697px;width:1px;height:2px;background:#000"></div><div class="a" style="left:487px;top:697px;width:1px;height:2px;background:#000"></div><div class="a" style="left:497px;top:697px;width:1px;height:6px;background:#000"></div><div class="a" style="left:506px;top:697px;width:1px;height:2px;background:#000"></div><div class="a" style="left:516px;top:697px;width:1px;height:2px;background:#000"></div><div class="a" style="left:526px;top:697px;width:1px;height:2px;background:#000"></div><div class="a" style="left:535px;top:697px;width:1px;height:2px;background:#000"></div><div class="a" style="left:545px;top:697px;width:1px;height:6px;background:#000"></div><div class="a" style="left:554px;top:697px;width:1px;height:2px;background:#000"></div><div class="a" style="left:564px;top:697px;width:1px;height:2px;background:#000"></div><div class="a" style="left:574px;top:697px;width:1px;height:2px;background:#000"></div><div class="a" style="left:583px;top:697px;width:1px;height:2px;background:#000"></div><div class="a" style="left:593px;top:697px;width:1px;height:6px;background:#000"></div><div class="a" style="left:602px;top:697px;width:1px;height:2px;background:#000"></div><div class="a" style="left:612px;top:697px;width:1px;height:2px;background:#000"></div><div class="a" style="left:622px;top:697px;width:1px;height:2px;background:#000"></div><div class="a" style="left:631px;top:697px;width:1px;height:2px;background:#000"></div><div class="a" style="left:641px;top:697px;width:1px;height:6px;background:#000"></div><div class="a" style="left:651px;top:697px;width:1px;height:2px;background:#000"></div><div class="a" style="left:660px;top:697px;width:1px;height:2px;background:#000"></div><div class="a" style="left:670px;top:697px;width:1px;height:2px;background:#000"></div><div class="a" style="left:679px;top:697px;width:1px;height:2px;background:#000"></div><div class="a" style="left:689px;top:697px;width:1px;height:6px;background:#000"></div><div class="a" style="left:699px;top:697px;width:1px;height:2px;background:#000"></div><div class="a" style="left:708px;top:697px;width:1px;height:2px;background:#000"></div><div class="a" style="left:718px;top:697px;width:1px;height:2px;background:#000"></div><div class="a" style="left:727px;top:697px;width:1px;height:2px;background:#000"></div><div class="a" style="left:737px;top:697px;width:1px;height:6px;background:#000"></div><div class="a" style="left:747px;top:697px;width:1px;height:2px;background:#000"></div><div class="a" style="left:756px;top:697px;width:1px;height:2px;background:#000"></div><div class="a" style="left:766px;top:697px;width:1px;height:2px;background:#000"></div><div class="a" style="left:776px;top:697px;width:1px;height:2px;background:#000"></div><div class="a" style="left:785px;top:697px;width:1px;height:6px;background:#000"></div><div class="a" style="left:795px;top:697px;width:1px;height:2px;background:#000"></div><div class="a" style="left:804px;top:697px;width:1px;height:2px;background:#000"></div><div class="a" style="left:814px;top:697px;width:1px;height:2px;background:#000"></div><div class="a" style="left:824px;top:697px;width:1px;height:2px;background:#000"></div><div class="a" style="left:833px;top:697px;width:1px;height:6px;background:#000"></div><div class="a" style="left:843px;top:697px;width:1px;height:2px;background:#000"></div><div class="a" style="left:852px;top:697px;width:1px;height:2px;background:#000"></div><div class="a" style="left:862px;top:697px;width:1px;height:2px;background:#000"></div><div class="a" style="left:872px;top:697px;width:1px;height:2px;background:#000"></div><div class="a" style="left:881px;top:697px;width:1px;height:6px;background:#000"></div><div class="a" style="left:891px;top:697px;width:1px;height:2px;background:#000"></div><div class="a" style="left:901px;top:697px;width:1px;height:2px;background:#000"></div><div class="a" style="left:910px;top:697px;width:1px;height:2px;background:#000"></div><div class="a" style="left:920px;top:697px;width:1px;height:2px;background:#000"></div><div class="a" style="left:929px;top:697px;width:1px;height:6px;background:#000"></div><div class="a" style="left:939px;top:697px;width:1px;height:2px;background:#000"></div><div class="a" style="left:949px;top:697px;width:1px;height:2px;background:#000"></div><div class="a" style="left:958px;top:697px;width:1px;height:2px;background:#000"></div><div class="a" style="left:968px;top:697px;width:1px;height:2px;background:#000"></div><div class="a" style="left:977px;top:697px;width:1px;height:6px;background:#000"></div><div class="a" style="left:987px;top:697px;width:1px;height:2px;background:#000"></div><div class="a" style="left:997px;top:697px;width:1px;height:2px;background:#000"></div><div class="a" style="left:1006px;top:697px;width:1px;height:2px;background:#000"></div><div class="a" style="left:1016px;top:697px;width:1px;height:2px;background:#000"></div><div class="a" style="left:1026px;top:697px;width:1px;height:6px;background:#000"></div><div class="a" style="left:1035px;top:697px;width:1px;height:2px;background:#000"></div><div class="a" style="left:1045px;top:697px;width:1px;height:2px;background:#000"></div><div class="a" style="left:1054px;top:697px;width:1px;height:2px;background:#000"></div><div class="a" style="left:1064px;top:697px;width:1px;height:2px;background:#000"></div><div class="a" style="left:1074px;top:697px;width:1px;height:6px;background:#000"></div><div class="a" style="left:1083px;top:697px;width:1px;height:2px;background:#000"></div><div class="a" style="left:1093px;top:697px;width:1px;height:2px;background:#000"></div><div class="a" style="left:1102px;top:697px;width:1px;height:2px;background:#000"></div><div class="a" style="left:1112px;top:697px;width:1px;height:2px;background:#000"></div><div class="a" style="left:1122px;top:697px;width:1px;height:6px;background:#000"></div><div class="a" style="left:1131px;top:697px;width:1px;height:2px;background:#000"></div><div class="a" style="left:1141px;top:697px;width:1px;height:2px;background:#000"></div><div class="a" style="left:1151px;top:697px;width:1px;height:2px;background:#000"></div><div class="a" style="left:1160px;top:697px;width:1px;height:2px;background:#000"></div><div class="a" style="left:1170px;top:697px;width:1px;height:6px;background:#000"></div><div class="a" style="left:1179px;top:697px;width:1px;height:2px;background:#000"></div><div class="a" style="left:1189px;top:697px;width:1px;height:2px;background:#000"></div><div class="a" style="left:1199px;top:697px;width:1px;height:2px;background:#000"></div><div class="a" style="left:1208px;top:697px;width:1px;height:2px;background:#000"></div><div class="a" style="left:1218px;top:697px;width:1px;height:6px;background:#000"></div><div class="a" style="left:1227px;top:697px;width:1px;height:2px;background:#000"></div><div class="a" style="left:1237px;top:697px;width:1px;height:2px;background:#000"></div><div class="a" style="left:1247px;top:697px;width:1px;height:2px;background:#000"></div><div class="a" style="left:1256px;top:697px;width:1px;height:2px;background:#000"></div><div class="a" style="left:1266px;top:697px;width:1px;height:6px;background:#000"></div><div class="a" style="left:1276px;top:697px;width:1px;height:2px;background:#000"></div><div class="a" style="left:1285px;top:697px;width:1px;height:2px;background:#000"></div><div class="a" style="left:1295px;top:697px;width:1px;height:2px;background:#000"></div><div class="a" style="left:1304px;top:697px;width:1px;height:2px;background:#000"></div><div class="a" style="left:1314px;top:697px;width:1px;height:6px;background:#000"></div><div class="a" style="left:1324px;top:697px;width:1px;height:2px;background:#000"></div><div class="a" style="left:1333px;top:697px;width:1px;height:2px;background:#000"></div><div class="a" style="left:1343px;top:697px;width:1px;height:2px;background:#000"></div><div class="t" style="left:18px;top:701px;font-size:10px;color:#000;font-weight:normal;">0:00</div><div class="t" style="left:66px;top:701px;font-size:10px;color:#000;font-weight:normal;">0:05</div><div class="t" style="left:114px;top:701px;font-size:10px;color:#000;font-weight:normal;">0:10</div><div class="t" style="left:162px;top:701px;font-size:10px;color:#000;font-weight:normal;">0:15</div><div class="t" style="left:210px;top:701px;font-size:10px;color:#000;font-weight:normal;">0:20</div><div class="t" style="left:258px;top:701px;font-size:10px;color:#000;font-weight:normal;">0:25</div><div class="t" style="left:306px;top:701px;font-size:10px;color:#000;font-weight:normal;">0:30</div><div class="t" style="left:354px;top:701px;font-size:10px;color:#000;font-weight:normal;">0:35</div><div class="t" style="left:403px;top:701px;font-size:10px;color:#000;font-weight:normal;">0:40</div><div class="t" style="left:451px;top:701px;font-size:10px;color:#000;font-weight:normal;">0:45</div><div class="t" style="left:499px;top:701px;font-size:10px;color:#000;font-weight:normal;">0:50</div><div class="t" style="left:547px;top:701px;font-size:10px;color:#000;font-weight:normal;">0:55</div><div class="t" style="left:595px;top:701px;font-size:10px;color:#000;font-weight:normal;">1:00</div><div class="t" style="left:643px;top:701px;font-size:10px;color:#000;font-weight:normal;">1:05</div><div class="t" style="left:691px;top:701px;font-size:10px;color:#000;font-weight:normal;">1:10</div><div class="t" style="left:739px;top:701px;font-size:10px;color:#000;font-weight:normal;">1:15</div><div class="t" style="left:787px;top:701px;font-size:10px;color:#000;font-weight:normal;">1:20</div><div class="t" style="left:835px;top:701px;font-size:10px;color:#000;font-weight:normal;">1:25</div><div class="t" style="left:883px;top:701px;font-size:10px;color:#000;font-weight:normal;">1:30</div><div class="t" style="left:931px;top:701px;font-size:10px;color:#000;font-weight:normal;">1:35</div><div class="t" style="left:979px;top:701px;font-size:10px;color:#000;font-weight:normal;">1:40</div><div class="t" style="left:1028px;top:701px;font-size:10px;color:#000;font-weight:normal;">1:45</div><div class="t" style="left:1076px;top:701px;font-size:10px;color:#000;font-weight:normal;">1:50</div><div class="t" style="left:1124px;top:701px;font-size:10px;color:#000;font-weight:normal;">1:55</div><div class="t" style="left:1172px;top:701px;font-size:10px;color:#000;font-weight:normal;">2:00</div><div class="t" style="left:1220px;top:701px;font-size:10px;color:#000;font-weight:normal;">2:05</div><div class="t" style="left:1268px;top:701px;font-size:10px;color:#000;font-weight:normal;">2:10</div><div class="t" style="left:1316px;top:701px;font-size:10px;color:#000;font-weight:normal;">2:15</div><svg class="a" style="left:0;top:0" width="1366" height="768" viewBox="0 0 1366 768"><defs><linearGradient id="ov1" x1="0" y1="0" x2="0" y2="1"><stop offset="0" stop-color="#000080"/><stop offset="0.7" stop-color="#2626a6"/><stop offset="1" stop-color="#0a0a88"/></linearGradient></defs><rect x="16" y="656" width="1330" height="20" fill="url(#ov1)"/><rect x="16" y="676" width="1330" height="20" fill="url(#ov1)"/><rect x="17" y="664" width="1329" height="1.6" fill="#00ff00"/><rect x="17" y="684.5" width="1329" height="1.6" fill="#ff0000"/><polygon points="41,662.5 42,662.7 43,662.2 44,662.3 45,662.2 46,662.5 47,662.5 48,661.7 49,662.3 50,659.3 51,662.4 52,662.4 53,662.6 54,662.7 55,662.9 56,662.9 57,660.5 58,662.5 59,662.2 60,662.8 61,662.1 62,660.8 63,661.8 64,662.6 65,660.9 66,662.9 67,662.7 68,662.0 69,662.0 70,661.2 71,662.2 72,662.1 73,662.6 74,659.8 75,662.6 76,662.7 77,663.1 78,662.4 79,662.3 80,662.1 81,662.0 82,662.4 83,662.3 84,660.9 85,662.2 86,662.3 87,661.2 88,662.1 89,661.7 90,661.5 91,661.9 92,662.6 93,662.2 94,662.1 95,662.6 96,661.9 97,660.2 98,662.1 99,662.3 100,662.4 101,662.3 102,662.8 103,663.3 104,663.1 105,662.3 106,662.0 107,662.5 108,662.1 109,662.3 110,662.5 111,660.5 112,662.7 113,662.7 114,662.6 115,661.8 116,662.3 117,661.9 118,662.6 119,662.1 120,662.2 121,662.2 122,662.5 123,661.3 124,662.3 125,662.7 126,662.1 127,662.1 128,662.7 129,661.1 130,662.9 131,662.4 132,662.8 133,663.0 134,662.4 135,662.6 136,661.9 137,662.6 138,662.2 139,662.3 140,662.2 141,662.7 142,662.9 143,662.6 144,659.5 145,660.7 146,661.4 147,662.4 148,662.7 149,663.3 150,661.1 151,662.9 152,662.7 153,662.3 154,661.7 155,662.4 156,662.1 157,663.2 158,662.7 159,662.3 160,663.0 161,659.4 162,663.0 163,659.5 164,662.2 165,662.4 166,663.0 167,663.0 168,660.6 169,663.0 170,662.7 171,660.2 172,662.5 173,662.8 174,662.5 175,662.9 176,662.2 177,662.6 178,662.9 179,662.7 180,663.0 181,662.4 182,662.3 183,662.5 184,662.4 185,662.6 186,662.0 187,662.1 188,662.2 189,662.7 190,662.5 191,661.5 192,662.2 193,662.2 194,662.8 195,663.0 196,662.5 197,662.5 198,662.7 199,659.7 200,662.7 201,662.6 202,661.8 203,662.7 204,662.5 205,663.1 206,662.4 207,662.2 208,662.3 209,662.9 210,662.7 211,662.3 212,662.1 213,662.5 214,662.6 215,662.5 216,661.9 217,662.5 218,662.7 219,662.5 220,663.0 221,662.3 222,662.5 223,662.7 224,662.2 225,661.9 226,661.9 227,661.7 228,662.1 229,662.2 230,661.9 231,661.8 232,659.9 233,659.7 234,662.0 235,662.2 236,661.6 237,662.1 238,662.6 239,661.8 240,660.1 241,662.7 242,661.6 243,660.8 244,662.2 245,662.6 246,662.3 247,659.6 248,662.8 249,662.8 250,662.2 251,662.1 252,662.3 253,662.3 254,662.4 255,663.0 256,662.6 257,661.8 258,660.7 259,661.9 260,661.4 261,662.0 262,660.9 263,663.0 264,661.0 265,662.3 266,662.0 267,662.6 268,662.4 269,662.1 270,662.6 271,660.3 272,662.2 273,662.6 274,662.4 275,662.3 276,663.2 277,660.4 278,662.2 279,662.7 280,662.4 281,662.6 282,662.7 283,662.5 284,661.9 285,662.8 286,662.6 287,662.1 288,662.4 289,663.0 290,662.8 291,663.2 292,662.5 293,663.3 294,662.6 295,662.7 296,662.6 297,662.9 298,662.8 299,662.3 300,662.7 301,663.1 302,662.2 303,662.4 304,662.3 305,659.9 306,661.4 307,662.8 308,662.2 309,663.0 310,659.8 311,662.5 312,662.5 313,662.3 314,662.5 315,662.4 316,662.6 317,662.3 318,662.6 319,662.3 320,662.9 321,662.9 322,662.5 323,662.4 324,662.3 325,662.8 326,662.4 327,660.7 328,662.3 329,662.7 330,662.9 331,663.0 332,662.7 333,662.5 334,662.7 335,662.3 336,662.9 337,662.6 338,660.2 339,662.6 340,662.8 341,662.5 342,662.7 343,662.7 344,662.7 345,661.2 346,662.6 347,662.7 348,662.9 349,663.0 350,662.4 351,662.3 352,662.6 353,662.5 354,663.0 355,663.1 356,659.8 357,662.9 358,662.2 359,662.2 360,662.7 361,662.2 362,661.7 363,662.6 364,662.2 365,662.3 366,662.3 367,661.4 368,660.2 369,662.2 370,662.0 371,660.3 372,662.3 373,661.0 374,662.2 375,662.2 376,661.5 377,662.7 378,662.4 379,659.5 380,661.9 381,661.1 382,661.7 383,662.6 384,662.3 385,662.3 386,661.9 387,660.3 388,662.3 389,662.8 390,662.8 391,662.3 392,662.1 393,662.6 394,662.7 395,660.7 396,663.2 397,661.8 398,663.0 399,660.8 400,662.9 401,663.2 402,662.9 403,662.9 404,662.3 405,661.4 406,662.3 407,661.9 408,662.8 409,662.2 410,662.9 411,662.2 412,662.2 413,662.4 414,662.7 415,662.1 416,662.5 417,662.2 418,662.8 419,662.9 420,662.1 421,662.7 422,662.8 423,659.4 424,662.8 425,662.1 426,662.5 427,662.3 428,662.8 429,662.1 430,662.4 431,661.7 432,660.3 433,662.7 434,662.6 435,662.7 436,662.1 437,662.4 438,662.2 439,662.1 440,662.8 441,662.7 442,662.2 443,662.0 444,663.0 445,662.2 446,662.2 447,662.1 448,662.0 449,662.1 450,659.8 451,661.8 452,662.2 453,662.3 454,662.2 455,662.1 456,662.5 457,662.0 458,661.2 459,660.5 460,662.4 461,662.3 462,662.5 463,661.9 464,660.3 465,662.9 466,662.4 467,662.3 468,662.1 469,663.0 470,662.5 471,663.0 472,662.8 473,663.0 474,662.3 475,660.5 476,663.3 477,660.9 478,662.9 479,660.2 480,662.5 481,662.3 482,663.2 483,662.3 484,662.4 485,662.1 486,662.4 487,662.5 488,662.4 489,662.6 490,662.3 491,662.2 492,662.0 493,661.9 494,662.5 495,660.7 496,662.4 497,662.5 498,662.6 499,659.1 500,662.3 501,662.5 502,663.0 503,663.0 504,662.2 505,663.1 506,662.6 507,662.9 508,662.4 509,662.4 510,662.4 511,660.4 512,660.6 513,663.5 514,662.4 515,663.1 516,662.7 517,663.1 518,663.3 519,663.1 520,662.9 521,662.8 522,661.4 523,661.1 524,662.6 525,662.8 526,662.6 527,662.8 528,662.6 529,662.8 530,663.0 531,662.6 532,662.5 533,662.6 534,663.2 535,662.6 536,662.4 537,662.6 538,663.1 539,662.1 540,663.0 541,662.6 542,662.2 543,662.7 544,662.6 545,662.8 546,662.1 547,661.5 548,662.7 549,662.5 550,662.4 551,662.7 552,662.6 553,662.1 554,662.0 555,662.3 556,662.3 557,662.3 558,662.8 559,662.0 560,662.0 561,662.5 562,663.1 563,662.7 564,659.8 565,663.1 566,662.8 567,663.0 568,663.2 569,662.3 570,662.5 571,660.8 572,662.5 573,662.2 574,660.6 575,662.8 576,662.6 577,662.9 578,662.9 579,662.6 580,661.2 581,662.4 582,662.5 583,662.6 584,662.3 585,662.4 586,663.0 587,662.5 588,662.5 589,663.0 590,663.1 591,662.8 592,663.1 593,663.0 594,663.1 595,662.4 596,662.6 597,662.8 598,662.4 599,662.2 600,662.5 601,662.4 602,662.0 603,662.5 604,660.2 605,662.5 606,662.4 607,660.6 608,662.7 609,662.1 610,662.2 611,662.5 612,660.6 613,662.2 614,662.2 615,661.8 616,662.5 617,662.0 618,662.3 619,662.0 620,662.5 621,662.0 622,662.2 623,662.0 624,662.7 625,659.6 626,662.3 627,662.6 628,661.7 629,661.7 630,661.8 631,661.8 632,661.4 633,661.7 634,661.5 635,661.8 636,661.8 637,661.2 638,662.4 639,662.8 640,663.0 641,662.3 642,662.6 643,661.2 644,662.8 645,662.3 646,663.1 647,662.7 648,661.6 649,662.9 650,662.5 651,660.5 652,662.5 653,663.0 654,662.5 655,662.8 656,663.0 657,663.0 658,662.9 659,662.6 660,662.8 661,662.1 662,662.8 663,662.6 664,660.2 665,662.5 666,661.9 667,662.8 668,661.9 669,662.3 670,661.9 671,662.4 672,662.3 673,663.0 674,662.6 675,662.4 676,662.9 677,663.2 678,662.3 679,663.3 680,662.9 681,662.1 682,663.0 683,662.3 684,663.1 685,663.1 686,661.9 687,662.5 688,662.1 689,662.4 690,662.9 691,662.8 692,662.6 693,662.3 694,662.4 695,661.9 696,662.8 697,661.2 698,662.9 699,662.2 700,662.4 701,662.5 702,662.2 703,662.2 704,659.9 705,662.5 706,661.9 707,660.4 708,661.2 709,662.8 710,662.1 711,662.1 712,661.9 713,662.2 714,660.8 715,662.4 716,661.8 717,662.0 718,662.2 719,661.9 720,661.7 721,660.0 722,662.4 723,661.9 724,662.9 725,662.5 726,660.7 727,662.6 728,662.4 729,662.9 730,662.2 731,662.6 732,661.8 733,660.6 734,659.4 735,662.7 736,662.1 737,662.3 738,660.0 739,662.9 740,662.6 741,662.7 742,663.0 743,662.9 744,663.0 745,661.7 746,661.8 747,662.5 748,661.2 749,662.4 750,662.7 751,662.7 752,661.7 753,661.1 754,662.1 755,662.6 756,663.2 757,661.2 758,661.0 759,662.7 760,662.8 761,660.1 762,662.7 763,662.9 764,660.3 765,662.7 766,662.6 767,662.3 768,662.7 769,660.8 770,662.5 771,661.3 772,662.6 773,662.4 774,660.1 775,660.0 776,662.0 777,662.6 778,662.1 779,662.7 780,662.2 781,662.7 782,662.1 783,661.8 784,661.9 785,662.0 786,662.4 787,662.4 788,661.3 789,662.9 790,662.8 791,661.7 792,662.6 793,662.2 794,662.0 795,661.7 796,662.8 797,662.3 798,662.7 799,662.7 800,662.5 801,662.6 802,662.8 803,662.1 804,662.7 805,661.7 806,662.4 807,662.4 808,662.9 809,662.3 810,661.1 811,662.2 812,662.6 813,662.3 814,662.3 815,662.6 816,661.9 817,660.8 818,662.6 819,662.3 820,662.0 821,662.8 822,662.0 823,662.5 824,662.9 825,662.2 826,662.0 827,662.6 828,661.2 829,663.0 830,662.9 831,662.4 832,662.2 833,662.3 834,662.2 835,662.8 836,662.9 837,662.4 838,662.4 839,662.3 840,662.8 841,662.4 842,662.4 843,661.9 844,662.3 845,662.1 846,662.9 847,661.8 848,662.8 849,659.6 850,662.3 851,663.0 852,662.4 853,662.7 854,662.8 855,662.9 856,663.1 857,662.7 858,662.4 859,662.2 860,663.2 861,663.0 862,663.1 863,660.3 864,663.0 865,660.6 866,662.2 867,663.2 868,660.4 869,662.3 870,662.2 871,662.7 872,662.2 873,662.0 874,662.4 875,662.5 876,662.3 877,662.3 878,662.8 879,662.6 880,662.5 881,662.8 882,662.2 883,662.0 884,660.6 885,662.8 886,661.8 887,662.0 888,662.1 889,662.6 890,661.9 891,662.6 892,662.6 893,662.7 894,661.9 895,662.2 896,659.9 897,662.0 898,661.8 899,662.6 900,660.7 901,662.1 902,662.4 903,661.9 904,660.5 905,661.2 906,662.5 907,662.0 908,662.6 909,662.0 910,662.4 911,662.7 912,661.8 913,662.6 914,662.3 915,662.7 916,662.6 917,662.2 918,662.1 919,661.5 920,662.5 921,662.1 922,662.5 923,662.7 924,662.6 925,662.8 926,662.6 927,662.8 928,662.4 929,662.1 930,662.6 931,661.7 932,662.0 933,662.0 934,662.5 935,661.8 936,662.2 937,662.2 938,662.1 939,662.6 940,662.3 941,662.7 942,662.9 943,662.2 944,662.2 945,663.0 946,662.9 947,662.8 948,660.8 949,660.3 950,662.8 951,662.4 952,661.8 953,662.0 954,659.5 955,661.9 956,662.3 957,659.2 958,662.6 959,662.5 960,662.6 961,659.8 962,662.9 963,662.7 964,662.1 965,661.7 966,662.6 967,661.3 968,662.2 969,662.5 970,662.6 971,662.8 972,661.6 973,662.7 974,662.3 975,659.5 976,662.2 977,662.8 978,661.0 979,662.8 980,662.3 981,662.7 982,662.7 983,662.5 984,663.1 985,662.5 986,662.6 987,659.6 988,662.5 989,662.4 990,662.6 991,662.4 992,662.9 993,662.7 994,660.9 995,662.5 996,662.5 997,662.4 998,662.7 999,661.8 1000,662.4 1001,659.5 1002,662.7 1003,662.9 1004,662.1 1005,662.5 1006,662.3 1007,662.1 1008,662.6 1009,662.9 1010,659.8 1011,661.1 1012,662.2 1013,662.7 1014,661.6 1015,662.3 1016,662.9 1017,662.6 1018,662.5 1019,662.8 1020,663.1 1021,662.9 1022,663.0 1023,662.9 1024,662.7 1025,662.5 1026,662.5 1027,662.2 1028,662.1 1029,662.2 1030,662.6 1031,662.8 1032,661.7 1033,662.0 1034,662.3 1035,659.9 1036,662.5 1037,662.2 1038,662.4 1039,662.0 1040,662.0 1041,662.7 1042,661.7 1043,662.3 1044,661.5 1045,661.8 1046,662.9 1047,662.5 1048,660.1 1049,661.1 1050,660.1 1051,662.5 1052,663.1 1053,659.7 1054,662.8 1055,659.9 1056,662.8 1057,662.7 1058,662.3 1059,662.1 1060,662.6 1061,662.7 1062,662.0 1063,661.3 1064,662.7 1065,661.9 1066,662.1 1067,662.6 1068,661.9 1069,662.5 1070,662.7 1071,660.2 1072,661.3 1073,662.9 1074,662.3 1075,662.9 1076,662.8 1077,662.8 1078,663.2 1079,662.5 1080,662.6 1081,663.1 1082,662.9 1083,660.2 1084,662.2 1085,662.8 1086,662.1 1087,662.6 1088,662.0 1089,662.4 1090,662.0 1091,662.1 1092,662.6 1093,662.0 1094,661.9 1095,662.5 1096,661.8 1097,662.1 1098,661.7 1099,662.5 1100,661.2 1101,662.3 1102,662.7 1103,661.7 1104,661.3 1105,662.5 1106,662.5 1107,661.9 1108,659.7 1109,659.7 1110,662.9 1111,662.1 1112,660.5 1113,662.2 1114,662.8 1115,662.2 1116,662.9 1117,663.0 1118,663.1 1119,662.4 1120,662.4 1121,663.1 1122,662.9 1123,662.1 1124,662.5 1125,661.9 1126,663.1 1127,662.9 1128,663.2 1129,663.0 1130,663.2 1131,662.5 1132,662.6 1133,662.5 1134,662.9 1135,662.7 1136,663.0 1137,662.8 1138,662.8 1139,659.9 1140,660.6 1141,662.4 1142,662.2 1143,661.8 1144,660.4 1145,662.1 1146,659.9 1147,662.2 1148,662.2 1149,660.6 1150,662.5 1151,662.5 1152,662.3 1153,660.1 1154,662.4 1155,663.0 1156,660.0 1157,660.9 1158,662.1 1159,663.0 1160,663.0 1161,661.8 1162,662.2 1163,662.0 1164,662.5 1165,662.5 1166,659.8 1167,662.6 1168,662.5 1169,662.0 1170,662.1 1171,662.8 1172,662.6 1173,662.1 1174,662.5 1175,662.3 1176,662.1 1177,662.2 1178,661.7 1179,662.4 1180,662.7 1181,662.6 1182,659.4 1183,662.3 1184,661.8 1185,661.7 1186,662.2 1187,661.9 1188,662.2 1189,662.9 1190,660.1 1191,662.3 1192,662.7 1193,662.7 1194,661.4 1195,662.2 1196,662.4 1197,662.5 1198,662.6 1199,659.9 1200,660.5 1201,662.9 1202,662.4 1203,663.0 1204,663.0 1205,663.1 1206,661.7 1207,662.9 1208,663.0 1209,662.9 1210,662.8 1211,662.4 1212,662.4 1213,662.3 1214,660.9 1215,663.3 1216,662.6 1217,663.2 1218,663.1 1219,660.6 1220,659.9 1221,661.5 1222,663.1 1223,663.0 1224,663.1 1225,662.4 1226,662.1 1227,662.1 1228,659.7 1229,660.7 1230,662.7 1231,662.6 1232,660.2 1233,662.4 1234,662.2 1235,662.1 1236,661.7 1237,662.6 1238,662.5 1239,662.4 1240,662.5 1241,662.2 1242,662.7 1243,663.0 1244,662.7 1245,662.3 1246,662.6 1247,662.0 1248,663.2 1249,662.7 1250,662.7 1251,662.6 1252,662.9 1253,663.4 1254,662.7 1255,663.2 1256,662.6 1257,663.5 1258,662.7 1259,663.0 1260,663.2 1261,663.1 1262,662.0 1263,662.9 1264,662.8 1265,662.6 1266,663.0 1267,661.8 1268,662.9 1269,663.2 1270,662.9 1271,663.1 1272,663.3 1273,663.6 1274,662.9 1275,662.8 1276,662.3 1277,663.5 1278,661.6 1279,661.6 1280,663.1 1281,663.2 1282,663.4 1283,663.5 1284,661.0 1285,663.6 1286,662.9 1287,663.4 1288,663.7 1289,663.4 1290,663.1 1291,663.6 1291,666.6 1290,666.4 1289,666.6 1288,668.9 1287,666.3 1286,666.9 1285,667.0 1284,666.2 1283,666.1 1282,666.5 1281,666.6 1280,666.3 1279,667.2 1278,666.9 1277,666.9 1276,666.2 1275,669.8 1274,666.6 1273,667.3 1272,666.7 1271,666.8 1270,667.2 1269,667.0 1268,666.6 1267,667.3 1266,666.9 1265,666.7 1264,667.3 1263,666.8 1262,667.2 1261,668.2 1260,666.9 1259,666.8 1258,667.0 1257,667.4 1256,666.6 1255,667.4 1254,666.5 1253,667.0 1252,667.1 1251,667.5 1250,666.9 1249,666.5 1248,667.0 1247,669.7 1246,667.4 1245,668.9 1244,667.4 1243,667.1 1242,667.4 1241,667.0 1240,667.4 1239,667.3 1238,667.8 1237,668.2 1236,668.5 1235,668.0 1234,668.3 1233,668.1 1232,667.3 1231,667.4 1230,668.1 1229,670.4 1228,670.3 1227,667.2 1226,667.6 1225,667.1 1224,667.4 1223,666.8 1222,667.0 1221,667.5 1220,666.9 1219,667.7 1218,666.9 1217,666.9 1216,667.1 1215,670.0 1214,667.1 1213,666.7 1212,666.9 1211,669.7 1210,667.8 1209,667.5 1208,667.2 1207,667.7 1206,666.9 1205,667.2 1204,667.7 1203,667.0 1202,667.6 1201,667.5 1200,669.8 1199,667.0 1198,669.8 1197,667.3 1196,667.5 1195,667.9 1194,667.9 1193,669.1 1192,668.0 1191,667.8 1190,670.2 1189,667.7 1188,667.1 1187,667.7 1186,667.5 1185,670.3 1184,668.1 1183,669.3 1182,667.9 1181,667.5 1180,667.5 1179,667.2 1178,667.9 1177,667.7 1176,668.1 1175,667.9 1174,667.7 1173,667.2 1172,670.2 1171,667.7 1170,667.5 1169,667.4 1168,667.1 1167,668.0 1166,667.3 1165,669.8 1164,667.9 1163,667.4 1162,667.1 1161,667.4 1160,667.1 1159,667.9 1158,667.4 1157,668.4 1156,667.9 1155,668.2 1154,667.2 1153,667.6 1152,667.6 1151,667.8 1150,668.9 1149,667.3 1148,667.7 1147,668.6 1146,667.5 1145,668.1 1144,667.8 1143,668.2 1142,667.9 1141,669.2 1140,668.2 1139,668.1 1138,667.2 1137,667.1 1136,667.2 1135,667.1 1134,669.2 1133,667.1 1132,669.0 1131,669.5 1130,666.8 1129,667.0 1128,666.8 1127,667.6 1126,666.9 1125,667.4 1124,667.1 1123,666.9 1122,666.8 1121,666.8 1120,667.1 1119,667.2 1118,670.1 1117,667.6 1116,666.9 1115,667.6 1114,670.3 1113,670.3 1112,667.9 1111,668.0 1110,667.5 1109,667.3 1108,667.4 1107,670.4 1106,668.0 1105,667.6 1104,668.3 1103,667.4 1102,667.9 1101,667.6 1100,667.3 1099,667.9 1098,668.1 1097,668.4 1096,667.8 1095,667.8 1094,668.1 1093,668.9 1092,669.0 1091,667.4 1090,668.0 1089,667.3 1088,667.8 1087,667.7 1086,667.9 1085,667.5 1084,667.9 1083,667.9 1082,667.5 1081,668.1 1080,667.1 1079,667.0 1078,667.5 1077,667.7 1076,667.0 1075,667.4 1074,667.1 1073,667.4 1072,667.5 1071,667.2 1070,667.6 1069,668.4 1068,667.7 1067,669.7 1066,668.1 1065,670.3 1064,667.4 1063,667.8 1062,667.9 1061,667.3 1060,667.9 1059,667.6 1058,667.9 1057,667.9 1056,667.7 1055,668.1 1054,667.1 1053,667.8 1052,667.9 1051,667.6 1050,670.1 1049,667.4 1048,667.5 1047,667.0 1046,667.6 1045,667.7 1044,667.2 1043,667.3 1042,667.5 1041,667.9 1040,668.9 1039,667.2 1038,667.9 1037,667.4 1036,670.5 1035,667.7 1034,667.1 1033,667.6 1032,667.9 1031,668.9 1030,667.4 1029,670.3 1028,667.5 1027,667.4 1026,667.4 1025,667.4 1024,668.0 1023,667.6 1022,667.8 1021,667.1 1020,667.6 1019,667.9 1018,667.2 1017,667.3 1016,668.3 1015,667.1 1014,667.2 1013,667.0 1012,667.1 1011,667.6 1010,667.4 1009,667.1 1008,667.6 1007,667.8 1006,667.4 1005,667.5 1004,670.2 1003,667.1 1002,668.6 1001,670.2 1000,667.9 999,670.1 998,667.9 997,667.9 996,670.8 995,668.1 994,667.6 993,667.3 992,667.4 991,667.3 990,669.5 989,667.7 988,667.6 987,667.2 986,669.6 985,667.1 984,667.4 983,667.2 982,666.9 981,667.8 980,668.5 979,667.3 978,667.5 977,667.8 976,668.1 975,667.5 974,667.4 973,668.4 972,668.1 971,667.7 970,667.6 969,668.5 968,668.0 967,667.4 966,667.4 965,667.0 964,667.0 963,667.7 962,667.7 961,667.4 960,670.7 959,667.8 958,667.2 957,667.4 956,667.9 955,667.5 954,668.3 953,667.2 952,670.1 951,667.6 950,667.8 949,667.7 948,667.0 947,667.5 946,667.7 945,667.0 944,667.4 943,670.5 942,667.9 941,667.2 940,667.2 939,667.3 938,668.1 937,668.0 936,668.0 935,668.2 934,668.0 933,667.9 932,667.5 931,667.6 930,667.6 929,667.4 928,667.8 927,667.3 926,667.1 925,667.2 924,667.5 923,667.4 922,670.7 921,668.2 920,667.6 919,668.0 918,667.4 917,667.4 916,668.4 915,668.1 914,667.6 913,668.3 912,667.4 911,668.0 910,668.0 909,667.6 908,667.8 907,667.3 906,667.5 905,668.0 904,667.3 903,667.4 902,667.7 901,669.7 900,667.6 899,668.2 898,668.1 897,667.8 896,669.3 895,667.7 894,667.8 893,667.8 892,668.0 891,667.3 890,668.0 889,667.6 888,667.6 887,667.6 886,668.2 885,667.6 884,667.4 883,669.3 882,667.1 881,668.6 880,667.3 879,670.4 878,667.5 877,667.8 876,667.5 875,667.9 874,668.2 873,667.9 872,667.4 871,667.5 870,667.8 869,667.6 868,667.6 867,667.3 866,667.5 865,666.8 864,666.8 863,667.7 862,667.3 861,667.1 860,667.5 859,667.7 858,667.4 857,669.8 856,667.5 855,667.1 854,669.6 853,667.3 852,667.7 851,667.2 850,667.8 849,668.6 848,667.8 847,667.9 846,670.2 845,667.4 844,667.4 843,668.0 842,667.8 841,667.2 840,668.3 839,667.4 838,667.9 837,667.2 836,667.9 835,667.5 834,667.8 833,667.3 832,669.8 831,667.4 830,667.3 829,667.3 828,667.2 827,666.9 826,667.2 825,666.8 824,669.1 823,670.5 822,669.6 821,667.4 820,667.7 819,670.2 818,668.1 817,667.3 816,669.8 815,669.5 814,670.2 813,667.8 812,667.5 811,667.1 810,667.7 809,667.6 808,667.4 807,666.8 806,667.9 805,667.1 804,668.0 803,667.3 802,667.6 801,669.5 800,667.4 799,667.6 798,667.5 797,667.2 796,669.0 795,667.9 794,668.1 793,667.3 792,667.4 791,667.3 790,669.7 789,667.9 788,667.1 787,667.7 786,667.1 785,667.9 784,667.2 783,667.8 782,667.6 781,667.8 780,668.1 779,667.4 778,667.9 777,669.9 776,668.3 775,668.0 774,668.1 773,668.2 772,667.6 771,669.6 770,668.6 769,668.2 768,667.9 767,667.2 766,667.6 765,667.2 764,667.7 763,667.7 762,667.0 761,670.0 760,666.8 759,667.0 758,667.0 757,667.3 756,667.3 755,666.5 754,667.4 753,667.5 752,666.8 751,666.8 750,667.4 749,667.6 748,668.4 747,666.8 746,667.4 745,667.4 744,667.4 743,667.0 742,666.9 741,667.9 740,667.9 739,667.3 738,667.2 737,667.6 736,667.4 735,667.1 734,667.7 733,667.6 732,668.9 731,667.3 730,667.1 729,667.7 728,667.8 727,667.1 726,668.9 725,669.2 724,667.4 723,668.2 722,667.6 721,669.3 720,668.0 719,667.8 718,668.9 717,667.5 716,667.5 715,670.4 714,667.8 713,667.7 712,668.4 711,669.9 710,667.5 709,667.6 708,668.0 707,668.0 706,670.4 705,670.2 704,667.4 703,667.9 702,667.1 701,667.1 700,667.6 699,670.0 698,669.2 697,667.9 696,667.9 695,668.4 694,667.9 693,667.1 692,667.1 691,667.1 690,670.3 689,667.5 688,667.1 687,667.3 686,667.6 685,667.4 684,666.9 683,668.7 682,667.3 681,667.3 680,667.3 679,666.8 678,667.4 677,667.0 676,667.6 675,668.5 674,667.3 673,667.9 672,667.6 671,670.4 670,667.6 669,668.2 668,667.5 667,668.7 666,667.6 665,667.5 664,667.8 663,669.7 662,667.9 661,668.0 660,668.4 659,669.1 658,667.2 657,670.8 656,667.5 655,667.4 654,668.6 653,667.6 652,667.1 651,667.5 650,667.5 649,666.6 648,667.4 647,670.3 646,667.7 645,668.4 644,666.9 643,666.9 642,668.2 641,666.9 640,667.7 639,667.4 638,667.9 637,668.0 636,668.2 635,668.4 634,669.5 633,668.3 632,668.1 631,667.8 630,669.0 629,668.0 628,667.9 627,668.1 626,667.6 625,667.8 624,670.8 623,667.5 622,667.9 621,668.0 620,668.1 619,668.2 618,667.4 617,667.3 616,669.3 615,668.4 614,667.5 613,670.4 612,668.0 611,667.8 610,667.6 609,667.5 608,667.8 607,667.7 606,667.6 605,667.2 604,667.8 603,668.0 602,667.7 601,667.8 600,667.5 599,667.1 598,667.5 597,667.6 596,667.6 595,667.7 594,669.6 593,667.4 592,667.0 591,667.7 590,667.6 589,666.7 588,667.0 587,668.4 586,667.3 585,667.0 584,669.0 583,667.6 582,667.6 581,670.2 580,669.1 579,667.8 578,667.1 577,667.3 576,667.8 575,667.1 574,667.2 573,667.3 572,667.7 571,670.1 570,668.9 569,667.0 568,667.4 567,667.1 566,667.6 565,667.0 564,667.1 563,667.8 562,667.9 561,667.8 560,667.4 559,667.0 558,667.5 557,667.9 556,668.6 555,668.3 554,668.1 553,667.6 552,667.2 551,667.8 550,668.6 549,667.6 548,667.4 547,669.4 546,667.2 545,667.4 544,667.2 543,668.0 542,668.3 541,667.3 540,667.3 539,667.7 538,666.9 537,670.3 536,670.1 535,666.8 534,667.5 533,667.2 532,667.5 531,667.5 530,670.0 529,667.1 528,667.1 527,666.8 526,667.1 525,667.2 524,667.7 523,667.2 522,669.5 521,667.3 520,666.6 519,667.0 518,667.5 517,667.3 516,666.7 515,669.0 514,666.6 513,667.4 512,668.7 511,666.9 510,669.2 509,667.5 508,668.6 507,669.8 506,667.4 505,667.7 504,667.2 503,667.0 502,667.6 501,667.8 500,670.1 499,667.7 498,667.3 497,667.4 496,667.9 495,668.2 494,667.7 493,667.2 492,669.1 491,668.1 490,669.9 489,667.9 488,669.9 487,667.7 486,667.4 485,669.5 484,669.1 483,666.9 482,667.1 481,668.3 480,667.4 479,666.8 478,667.4 477,669.1 476,667.6 475,666.8 474,667.7 473,667.7 472,667.6 471,667.4 470,667.5 469,666.9 468,667.5 467,667.6 466,667.4 465,666.8 464,667.7 463,667.4 462,668.0 461,667.7 460,667.5 459,667.6 458,667.6 457,668.2 456,667.3 455,667.5 454,668.3 453,668.0 452,668.8 451,668.2 450,667.6 449,667.4 448,667.4 447,668.4 446,668.0 445,667.5 444,667.2 443,667.3 442,667.1 441,668.9 440,668.7 439,670.7 438,667.7 437,667.6 436,667.9 435,667.8 434,667.3 433,668.1 432,667.6 431,668.5 430,667.6 429,669.6 428,667.4 427,667.5 426,667.5 425,668.1 424,667.2 423,667.9 422,669.8 421,667.2 420,667.6 419,667.8 418,668.6 417,667.0 416,667.0 415,667.1 414,667.3 413,667.5 412,667.6 411,667.5 410,667.3 409,667.9 408,667.5 407,667.0 406,666.9 405,667.5 404,666.8 403,667.6 402,667.5 401,667.0 400,667.6 399,666.8 398,667.4 397,667.2 396,667.0 395,666.8 394,669.0 393,667.8 392,667.1 391,667.6 390,670.1 389,667.8 388,668.0 387,668.0 386,667.9 385,668.2 384,668.0 383,668.4 382,668.2 381,667.4 380,667.4 379,667.4 378,667.9 377,668.0 376,667.7 375,668.1 374,667.9 373,668.2 372,668.4 371,668.1 370,667.5 369,667.5 368,668.6 367,667.9 366,667.5 365,668.1 364,667.9 363,668.2 362,668.6 361,668.0 360,668.0 359,668.4 358,670.8 357,667.2 356,669.9 355,667.1 354,667.3 353,667.8 352,667.3 351,667.6 350,667.9 349,667.3 348,667.7 347,667.0 346,667.6 345,667.4 344,667.7 343,667.7 342,667.4 341,666.8 340,666.9 339,667.3 338,667.1 337,667.4 336,667.1 335,669.9 334,667.7 333,669.0 332,667.5 331,667.4 330,667.3 329,666.9 328,667.2 327,667.8 326,668.4 325,667.2 324,667.1 323,667.6 322,668.6 321,667.6 320,668.0 319,668.0 318,667.9 317,667.3 316,668.6 315,668.0 314,669.4 313,667.8 312,667.5 311,669.5 310,668.1 309,667.9 308,667.5 307,667.3 306,670.1 305,667.4 304,667.6 303,668.1 302,667.0 301,667.9 300,667.7 299,667.7 298,667.4 297,669.8 296,667.7 295,667.2 294,667.4 293,666.7 292,667.0 291,667.1 290,667.2 289,667.8 288,667.2 287,667.6 286,667.0 285,667.4 284,667.8 283,667.0 282,667.2 281,667.9 280,668.3 279,667.2 278,667.2 277,667.4 276,666.8 275,667.3 274,667.7 273,667.2 272,669.1 271,667.5 270,667.7 269,667.3 268,667.9 267,667.5 266,667.6 265,667.3 264,667.4 263,667.1 262,667.0 261,667.2 260,667.3 259,668.4 258,667.6 257,667.9 256,668.1 255,667.3 254,667.6 253,667.9 252,667.5 251,667.4 250,667.5 249,666.9 248,667.7 247,667.6 246,670.6 245,668.6 244,667.0 243,667.8 242,668.0 241,667.4 240,667.5 239,668.0 238,667.3 237,668.2 236,667.9 235,669.7 234,668.2 233,668.1 232,668.2 231,667.5 230,667.9 229,667.7 228,667.6 227,667.9 226,667.6 225,667.9 224,667.3 223,667.3 222,667.7 221,667.7 220,667.8 219,667.3 218,667.9 217,667.6 216,667.6 215,667.3 214,668.1 213,667.7 212,666.9 211,667.6 210,667.2 209,667.2 208,667.1 207,669.2 206,666.9 205,667.4 204,669.5 203,667.7 202,667.7 201,666.9 200,667.8 199,667.0 198,667.7 197,667.6 196,669.8 195,667.9 194,667.4 193,667.6 192,667.6 191,667.8 190,667.5 189,667.6 188,667.4 187,667.7 186,667.4 185,668.0 184,667.5 183,668.2 182,667.9 181,667.5 180,667.7 179,667.0 178,667.8 177,666.9 176,667.4 175,669.5 174,667.0 173,667.7 172,667.1 171,666.8 170,667.6 169,667.8 168,667.1 167,667.3 166,667.9 165,667.7 164,667.5 163,668.1 162,667.3 161,669.1 160,667.4 159,667.5 158,667.6 157,667.2 156,666.8 155,667.6 154,666.9 153,667.7 152,666.7 151,666.6 150,667.0 149,666.6 148,667.4 147,667.0 146,667.0 145,667.7 144,668.3 143,667.6 142,667.6 141,667.3 140,667.8 139,667.1 138,667.6 137,667.5 136,667.5 135,667.3 134,667.4 133,667.6 132,667.3 131,668.0 130,667.7 129,667.5 128,667.5 127,667.3 126,671.1 125,667.4 124,668.0 123,667.5 122,669.6 121,668.2 120,667.8 119,668.1 118,668.5 117,668.2 116,668.0 115,669.6 114,667.9 113,669.0 112,668.0 111,667.9 110,667.1 109,667.5 108,667.0 107,669.4 106,667.2 105,667.8 104,667.6 103,667.7 102,668.0 101,667.7 100,667.0 99,667.6 98,667.0 97,667.9 96,667.3 95,669.3 94,668.1 93,667.7 92,667.9 91,668.3 90,668.1 89,669.0 88,668.4 87,670.3 86,669.9 85,668.0 84,667.4 83,667.4 82,668.0 81,668.2 80,668.7 79,667.1 78,667.0 77,667.0 76,668.5 75,667.0 74,667.5 73,667.4 72,669.2 71,668.3 70,667.9 69,669.1 68,667.5 67,667.1 66,667.3 65,667.7 64,668.0 63,670.4 62,668.0 61,667.4 60,669.3 59,667.1 58,669.1 57,668.2 56,667.3 55,667.4 54,667.1 53,668.0 52,668.0 51,667.9 50,667.4 49,668.5 48,667.6 47,670.9 46,667.4 45,668.1 44,667.7 43,668.1 42,668.0 41,667.8" fill="#00ff00"/><polygon points="41,682.7 42,682.0 43,682.7 44,681.1 45,682.5 46,682.7 47,682.0 48,682.8 49,682.1 50,679.7 51,682.8 52,682.4 53,682.4 54,682.6 55,683.0 56,683.3 57,682.3 58,682.7 59,682.4 60,682.4 61,680.8 62,682.5 63,683.2 64,683.2 65,682.6 66,682.6 67,681.9 68,682.7 69,682.3 70,683.1 71,682.7 72,682.5 73,683.1 74,682.4 75,683.1 76,679.9 77,682.9 78,682.8 79,680.0 80,682.9 81,682.9 82,682.8 83,682.8 84,679.7 85,682.5 86,682.4 87,682.4 88,682.5 89,681.2 90,682.2 91,682.2 92,680.3 93,682.1 94,682.2 95,682.5 96,681.6 97,679.7 98,683.1 99,683.1 100,681.4 101,682.9 102,680.9 103,683.0 104,683.0 105,682.4 106,682.1 107,681.9 108,682.3 109,682.3 110,682.1 111,682.4 112,682.2 113,682.4 114,681.7 115,682.5 116,682.1 117,682.1 118,682.2 119,682.8 120,682.4 121,682.5 122,682.3 123,682.7 124,680.1 125,682.2 126,681.1 127,683.0 128,682.8 129,682.2 130,680.4 131,682.2 132,682.2 133,681.7 134,682.7 135,682.9 136,682.7 137,682.1 138,683.0 139,682.0 140,683.0 141,682.7 142,682.3 143,682.6 144,681.3 145,682.6 146,682.4 147,682.6 148,681.0 149,682.4 150,682.5 151,682.6 152,682.6 153,682.9 154,682.3 155,681.0 156,682.4 157,679.7 158,682.7 159,681.3 160,679.4 161,682.1 162,681.9 163,681.8 164,682.5 165,682.6 166,680.5 167,679.9 168,682.3 169,682.7 170,682.3 171,682.9 172,683.1 173,683.2 174,680.5 175,683.0 176,681.1 177,682.4 178,682.2 179,680.3 180,682.2 181,682.6 182,681.9 183,682.5 184,683.3 185,682.6 186,683.0 187,681.3 188,682.6 189,682.8 190,683.0 191,683.2 192,682.6 193,682.7 194,682.1 195,682.2 196,682.1 197,682.0 198,682.3 199,682.7 200,682.2 201,682.8 202,680.7 203,681.9 204,682.3 205,682.6 206,682.1 207,682.1 208,682.3 209,681.7 210,682.8 211,680.6 212,681.2 213,682.2 214,682.6 215,682.6 216,682.4 217,683.0 218,683.1 219,682.7 220,683.0 221,683.0 222,683.2 223,682.7 224,680.3 225,681.2 226,682.9 227,682.9 228,682.1 229,682.6 230,683.0 231,682.6 232,682.2 233,682.9 234,682.3 235,682.5 236,681.8 237,682.5 238,682.4 239,682.7 240,681.4 241,682.6 242,682.5 243,682.7 244,683.1 245,682.3 246,681.4 247,683.0 248,682.6 249,682.7 250,683.1 251,682.5 252,682.2 253,682.6 254,682.0 255,682.1 256,681.9 257,681.6 258,682.4 259,680.7 260,682.2 261,682.3 262,681.8 263,682.2 264,679.8 265,681.6 266,682.1 267,681.8 268,681.8 269,682.5 270,681.9 271,682.3 272,682.1 273,680.8 274,682.5 275,682.6 276,682.7 277,682.5 278,680.4 279,682.3 280,682.5 281,683.0 282,683.0 283,682.6 284,682.1 285,682.3 286,682.2 287,682.3 288,680.5 289,682.7 290,682.4 291,682.7 292,683.3 293,682.6 294,683.2 295,682.8 296,680.4 297,682.2 298,682.8 299,681.5 300,682.8 301,682.9 302,682.1 303,682.7 304,683.0 305,683.1 306,682.2 307,679.5 308,682.4 309,682.7 310,682.7 311,681.9 312,682.9 313,679.4 314,682.1 315,682.9 316,681.2 317,682.7 318,682.8 319,682.8 320,681.1 321,682.3 322,682.8 323,682.5 324,682.2 325,682.4 326,682.5 327,682.2 328,682.6 329,682.4 330,682.6 331,682.7 332,682.2 333,682.1 334,682.6 335,680.8 336,682.9 337,682.7 338,682.9 339,683.1 340,683.1 341,683.1 342,682.8 343,682.5 344,682.3 345,680.3 346,682.5 347,682.6 348,682.9 349,683.0 350,683.0 351,682.8 352,682.1 353,682.0 354,679.9 355,682.8 356,682.6 357,680.5 358,682.3 359,680.4 360,682.9 361,679.9 362,682.7 363,681.2 364,682.8 365,682.7 366,682.6 367,682.4 368,682.1 369,681.7 370,682.8 371,682.2 372,682.7 373,680.5 374,682.2 375,682.1 376,682.3 377,682.0 378,682.5 379,680.4 380,682.3 381,682.5 382,682.1 383,682.8 384,682.8 385,682.8 386,682.4 387,682.9 388,681.3 389,682.1 390,682.2 391,682.1 392,682.9 393,682.3 394,682.6 395,680.7 396,682.3 397,682.3 398,682.3 399,682.0 400,682.9 401,682.8 402,682.8 403,682.1 404,682.4 405,683.1 406,682.7 407,680.4 408,682.5 409,682.7 410,682.9 411,682.3 412,682.1 413,682.2 414,682.3 415,681.8 416,682.5 417,682.2 418,682.0 419,682.0 420,682.3 421,682.3 422,682.5 423,679.0 424,682.2 425,682.3 426,682.2 427,682.1 428,681.1 429,681.8 430,682.2 431,682.3 432,682.0 433,682.0 434,682.0 435,682.6 436,682.0 437,682.8 438,681.9 439,682.0 440,682.2 441,682.2 442,682.3 443,682.5 444,680.6 445,681.6 446,682.4 447,681.6 448,681.8 449,679.4 450,682.0 451,682.7 452,681.3 453,682.1 454,682.8 455,682.4 456,682.0 457,680.6 458,680.7 459,682.1 460,682.6 461,682.1 462,682.8 463,682.8 464,682.4 465,681.9 466,682.0 467,681.5 468,682.5 469,682.7 470,682.3 471,682.3 472,682.6 473,682.5 474,682.1 475,679.4 476,680.2 477,682.0 478,680.6 479,682.3 480,680.7 481,682.2 482,682.4 483,679.8 484,682.8 485,682.2 486,682.8 487,682.5 488,682.0 489,682.6 490,682.1 491,682.7 492,682.9 493,682.5 494,683.0 495,682.1 496,682.6 497,681.0 498,682.4 499,682.4 500,682.5 501,682.9 502,683.0 503,682.3 504,682.2 505,682.7 506,682.2 507,682.7 508,682.3 509,682.6 510,682.1 511,682.6 512,681.9 513,682.6 514,682.3 515,682.7 516,682.6 517,682.2 518,682.2 519,682.4 520,682.0 521,682.3 522,682.4 523,682.3 524,682.6 525,682.6 526,680.0 527,682.3 528,682.1 529,680.8 530,682.9 531,682.7 532,679.9 533,682.0 534,682.9 535,683.1 536,682.8 537,682.2 538,682.4 539,682.6 540,682.9 541,682.2 542,682.8 543,682.5 544,683.0 545,683.0 546,682.7 547,682.8 548,682.8 549,682.0 550,682.7 551,682.5 552,682.5 553,681.6 554,681.6 555,682.2 556,679.5 557,682.0 558,681.8 559,681.8 560,680.7 561,681.8 562,682.1 563,682.6 564,682.0 565,682.2 566,682.4 567,682.7 568,682.7 569,682.7 570,681.2 571,682.8 572,682.9 573,683.1 574,682.7 575,682.8 576,682.6 577,682.9 578,682.1 579,681.4 580,682.4 581,682.2 582,680.5 583,681.6 584,682.2 585,682.5 586,682.5 587,682.5 588,682.2 589,680.5 590,682.8 591,682.8 592,682.8 593,682.9 594,680.3 595,682.6 596,683.0 597,680.1 598,681.8 599,682.9 600,680.6 601,682.6 602,683.1 603,682.6 604,683.1 605,682.9 606,679.5 607,682.6 608,682.3 609,681.5 610,681.8 611,682.5 612,683.0 613,682.4 614,682.6 615,682.3 616,682.7 617,681.3 618,680.2 619,682.6 620,682.6 621,682.5 622,682.3 623,682.1 624,682.5 625,682.2 626,679.8 627,682.6 628,682.5 629,682.5 630,682.2 631,682.1 632,682.7 633,682.1 634,682.7 635,682.0 636,683.1 637,683.1 638,682.7 639,682.4 640,682.9 641,682.7 642,682.7 643,683.0 644,682.5 645,682.8 646,682.3 647,682.3 648,681.6 649,683.0 650,682.5 651,683.0 652,682.1 653,683.1 654,681.7 655,682.3 656,682.8 657,682.0 658,682.2 659,682.2 660,682.6 661,680.9 662,682.7 663,682.4 664,682.2 665,680.7 666,682.2 667,682.5 668,682.6 669,682.3 670,679.3 671,682.4 672,682.5 673,682.9 674,682.8 675,680.6 676,681.7 677,681.0 678,682.5 679,682.5 680,679.3 681,682.6 682,682.1 683,682.8 684,683.2 685,682.7 686,683.1 687,682.6 688,682.7 689,682.9 690,683.0 691,682.9 692,682.2 693,682.3 694,682.5 695,681.7 696,682.5 697,682.4 698,682.3 699,682.3 700,682.7 701,682.1 702,682.0 703,682.5 704,679.9 705,682.1 706,681.9 707,682.4 708,682.8 709,682.7 710,681.6 711,682.1 712,681.9 713,681.8 714,681.7 715,682.5 716,682.4 717,681.8 718,682.6 719,682.2 720,682.5 721,680.5 722,681.9 723,680.2 724,682.1 725,682.3 726,681.7 727,681.8 728,681.9 729,682.0 730,680.3 731,682.4 732,682.6 733,681.8 734,681.8 735,682.6 736,680.7 737,682.4 738,682.5 739,682.1 740,681.9 741,681.7 742,682.3 743,682.7 744,682.2 745,681.8 746,682.5 747,681.8 748,682.7 749,682.5 750,681.7 751,682.0 752,681.9 753,681.7 754,682.0 755,682.1 756,679.3 757,682.7 758,682.1 759,679.9 760,683.0 761,682.6 762,682.2 763,682.9 764,682.7 765,682.7 766,682.9 767,681.3 768,682.5 769,681.8 770,680.8 771,682.2 772,682.3 773,682.7 774,683.0 775,679.3 776,682.3 777,680.9 778,683.1 779,682.9 780,682.9 781,683.0 782,683.0 783,683.1 784,682.3 785,683.2 786,683.1 787,682.4 788,683.1 789,682.3 790,682.9 791,683.0 792,682.7 793,682.7 794,681.4 795,682.5 796,682.7 797,682.7 798,682.5 799,682.4 800,682.3 801,682.2 802,682.6 803,682.4 804,682.1 805,682.8 806,682.4 807,682.1 808,682.1 809,682.1 810,682.4 811,682.8 812,683.0 813,683.0 814,682.9 815,680.9 816,682.8 817,682.4 818,682.6 819,682.6 820,682.8 821,682.5 822,682.7 823,682.2 824,682.5 825,682.4 826,682.1 827,682.3 828,682.8 829,682.6 830,683.1 831,682.7 832,682.7 833,683.0 834,683.0 835,681.1 836,682.2 837,682.7 838,682.7 839,682.8 840,682.7 841,682.1 842,682.4 843,682.6 844,682.0 845,680.9 846,682.3 847,682.4 848,682.1 849,682.6 850,682.4 851,682.2 852,682.6 853,682.9 854,682.4 855,682.3 856,682.7 857,682.1 858,682.5 859,681.8 860,682.0 861,682.1 862,682.1 863,682.4 864,681.9 865,682.1 866,682.6 867,682.3 868,679.9 869,680.9 870,682.1 871,682.0 872,682.1 873,683.0 874,682.3 875,681.2 876,682.7 877,682.4 878,682.4 879,679.4 880,682.4 881,682.8 882,682.4 883,682.2 884,682.4 885,682.3 886,682.1 887,682.4 888,682.0 889,682.2 890,681.7 891,681.8 892,682.6 893,682.4 894,681.9 895,682.3 896,682.0 897,682.6 898,682.4 899,682.0 900,682.0 901,680.6 902,682.4 903,682.8 904,683.2 905,683.1 906,679.9 907,682.3 908,682.1 909,682.3 910,682.9 911,682.2 912,682.2 913,682.3 914,682.6 915,681.1 916,682.8 917,681.3 918,682.3 919,682.3 920,682.2 921,682.4 922,682.3 923,682.0 924,682.0 925,681.8 926,682.1 927,682.6 928,679.9 929,681.7 930,682.3 931,682.4 932,682.8 933,682.0 934,682.9 935,682.7 936,682.4 937,682.2 938,680.7 939,682.8 940,683.0 941,682.5 942,682.6 943,682.3 944,682.4 945,681.1 946,682.2 947,682.7 948,682.6 949,680.4 950,682.4 951,681.9 952,682.3 953,682.4 954,681.9 955,681.9 956,681.7 957,681.7 958,682.1 959,681.9 960,680.9 961,682.0 962,682.1 963,680.6 964,682.4 965,682.2 966,682.8 967,682.1 968,681.2 969,682.2 970,682.3 971,682.1 972,682.7 973,682.0 974,679.3 975,682.1 976,682.6 977,682.4 978,680.8 979,682.5 980,682.5 981,682.1 982,682.1 983,682.9 984,682.0 985,682.0 986,682.2 987,682.1 988,682.8 989,682.3 990,682.3 991,682.7 992,682.8 993,680.3 994,682.4 995,681.3 996,682.3 997,682.2 998,683.2 999,681.7 1000,682.8 1001,682.6 1002,682.4 1003,681.9 1004,680.8 1005,680.5 1006,682.6 1007,682.1 1008,682.2 1009,681.7 1010,682.6 1011,682.2 1012,682.5 1013,681.0 1014,682.1 1015,682.1 1016,682.9 1017,682.8 1018,682.0 1019,680.6 1020,682.0 1021,682.6 1022,681.9 1023,682.4 1024,682.7 1025,681.8 1026,682.0 1027,681.0 1028,682.7 1029,682.2 1030,682.0 1031,682.1 1032,680.4 1033,681.6 1034,682.6 1035,682.1 1036,682.7 1037,682.2 1038,682.6 1039,682.4 1040,682.3 1041,681.8 1042,682.5 1043,682.2 1044,682.6 1045,682.6 1046,683.1 1047,683.0 1048,682.3 1049,679.6 1050,682.9 1051,682.5 1052,682.3 1053,681.8 1054,682.6 1055,682.6 1056,682.3 1057,682.9 1058,682.6 1059,682.3 1060,679.1 1061,682.2 1062,682.6 1063,681.9 1064,679.5 1065,682.6 1066,679.9 1067,682.4 1068,682.2 1069,682.8 1070,682.0 1071,682.8 1072,682.4 1073,683.1 1074,681.4 1075,680.5 1076,682.6 1077,680.6 1078,682.3 1079,683.4 1080,683.4 1081,681.6 1082,682.8 1083,682.5 1084,679.7 1085,682.9 1086,682.6 1087,683.2 1088,682.4 1089,682.3 1090,682.3 1091,682.8 1092,682.7 1093,682.4 1094,682.5 1095,682.3 1096,681.9 1097,682.1 1098,681.8 1099,682.5 1100,682.2 1101,679.7 1102,681.8 1103,682.8 1104,682.3 1105,682.5 1106,682.3 1107,682.8 1108,682.0 1109,682.5 1110,682.4 1111,683.0 1112,682.9 1113,682.3 1114,682.5 1115,682.6 1116,683.1 1117,682.4 1118,683.5 1119,680.6 1120,682.9 1121,683.3 1122,682.9 1123,683.2 1124,682.7 1125,682.4 1126,683.1 1127,682.2 1128,682.8 1129,681.9 1130,682.5 1131,682.8 1132,682.5 1133,682.7 1134,680.9 1135,682.7 1136,682.0 1137,682.6 1138,682.7 1139,682.3 1140,682.3 1141,682.5 1142,682.7 1143,682.4 1144,682.1 1145,682.5 1146,682.7 1147,682.9 1148,681.4 1149,682.4 1150,682.7 1151,681.7 1152,682.1 1153,682.7 1154,682.2 1155,682.2 1156,682.5 1157,682.4 1158,682.2 1159,682.5 1160,682.6 1161,682.3 1162,682.9 1163,682.7 1164,680.6 1165,683.7 1166,683.3 1167,683.1 1168,683.1 1169,683.5 1170,683.4 1171,682.7 1172,682.6 1173,682.9 1174,683.4 1175,683.1 1176,682.7 1177,682.7 1178,680.5 1179,682.4 1180,682.3 1181,679.8 1182,682.5 1183,683.2 1184,681.1 1185,683.0 1186,680.9 1187,682.8 1188,682.9 1189,682.4 1190,682.2 1191,680.0 1192,682.7 1193,682.5 1194,682.5 1195,682.3 1196,680.0 1197,680.0 1198,682.5 1199,682.8 1200,680.8 1201,682.7 1202,683.0 1203,682.6 1204,682.2 1205,682.4 1206,682.8 1207,680.9 1208,683.1 1209,682.6 1210,682.2 1211,682.3 1212,682.8 1213,682.7 1214,682.8 1215,683.2 1216,682.9 1217,682.9 1218,682.4 1219,682.3 1220,679.6 1221,682.5 1222,682.5 1223,681.9 1224,682.7 1225,681.1 1226,679.6 1227,682.7 1228,680.0 1229,681.9 1230,682.2 1231,682.2 1232,682.6 1233,680.3 1234,682.3 1235,682.4 1236,680.0 1237,682.1 1238,682.3 1239,682.3 1240,682.0 1241,682.8 1242,682.4 1243,681.7 1244,682.8 1245,682.6 1246,681.0 1247,682.8 1248,683.1 1249,682.6 1250,683.5 1251,682.6 1252,683.3 1253,682.5 1254,683.0 1255,683.5 1256,683.6 1257,683.1 1258,683.5 1259,683.2 1260,683.2 1261,681.9 1262,683.5 1263,683.1 1264,683.2 1265,682.7 1266,683.4 1267,682.8 1268,683.0 1269,679.8 1270,683.0 1271,683.0 1272,681.3 1273,681.9 1274,682.6 1275,682.7 1276,682.7 1277,681.1 1278,683.0 1279,683.8 1280,683.5 1281,683.3 1282,683.5 1283,682.9 1284,681.0 1285,683.7 1286,683.3 1287,681.8 1288,683.0 1289,683.5 1290,683.2 1291,681.3 1291,687.0 1290,686.5 1289,686.9 1288,686.4 1287,686.9 1286,687.0 1285,687.7 1284,686.7 1283,686.5 1282,686.3 1281,687.0 1280,686.4 1279,687.0 1278,687.2 1277,687.1 1276,686.4 1275,687.0 1274,686.9 1273,686.8 1272,687.1 1271,688.8 1270,686.7 1269,687.0 1268,687.1 1267,687.5 1266,687.3 1265,687.5 1264,686.6 1263,686.5 1262,687.2 1261,689.0 1260,687.3 1259,686.5 1258,687.3 1257,686.6 1256,688.1 1255,686.8 1254,687.1 1253,687.1 1252,687.1 1251,686.6 1250,687.2 1249,687.0 1248,687.1 1247,689.7 1246,687.1 1245,686.7 1244,687.0 1243,688.2 1242,687.4 1241,688.2 1240,688.0 1239,690.1 1238,687.9 1237,687.9 1236,687.2 1235,687.2 1234,687.6 1233,687.7 1232,688.3 1231,689.2 1230,690.1 1229,687.5 1228,687.6 1227,687.5 1226,687.9 1225,687.6 1224,688.1 1223,687.5 1222,688.0 1221,687.4 1220,687.2 1219,687.4 1218,690.2 1217,686.9 1216,687.4 1215,687.5 1214,687.6 1213,687.4 1212,687.6 1211,686.9 1210,687.2 1209,689.7 1208,687.3 1207,687.0 1206,687.3 1205,687.1 1204,688.9 1203,687.8 1202,687.7 1201,687.5 1200,687.3 1199,687.7 1198,687.0 1197,687.0 1196,687.5 1195,687.0 1194,687.2 1193,687.7 1192,687.4 1191,686.9 1190,687.8 1189,687.1 1188,687.1 1187,687.6 1186,687.2 1185,688.4 1184,687.7 1183,687.7 1182,687.1 1181,687.5 1180,687.0 1179,687.7 1178,687.1 1177,687.1 1176,687.6 1175,687.1 1174,687.0 1173,687.0 1172,689.8 1171,688.5 1170,687.2 1169,686.7 1168,686.3 1167,686.9 1166,686.7 1165,686.6 1164,686.8 1163,686.5 1162,687.1 1161,688.8 1160,687.7 1159,687.2 1158,687.0 1157,690.6 1156,688.6 1155,687.4 1154,687.6 1153,687.6 1152,687.7 1151,687.9 1150,687.3 1149,688.0 1148,687.0 1147,687.4 1146,687.7 1145,687.4 1144,688.3 1143,687.4 1142,688.3 1141,687.3 1140,687.5 1139,689.4 1138,687.0 1137,687.4 1136,688.5 1135,687.4 1134,687.9 1133,687.9 1132,687.6 1131,687.6 1130,687.3 1129,687.8 1128,687.1 1127,689.2 1126,687.2 1125,689.3 1124,686.9 1123,687.1 1122,686.6 1121,686.5 1120,687.6 1119,687.1 1118,688.4 1117,687.1 1116,686.8 1115,687.1 1114,686.8 1113,687.2 1112,687.4 1111,687.0 1110,687.4 1109,689.2 1108,686.8 1107,687.3 1106,686.8 1105,689.1 1104,688.0 1103,687.6 1102,687.1 1101,688.0 1100,688.0 1099,687.8 1098,687.8 1097,688.2 1096,688.0 1095,687.6 1094,687.3 1093,687.3 1092,687.5 1091,690.1 1090,687.5 1089,688.5 1088,687.6 1087,686.7 1086,687.4 1085,686.9 1084,686.8 1083,686.6 1082,690.0 1081,687.0 1080,687.2 1079,687.2 1078,687.4 1077,687.5 1076,687.2 1075,686.8 1074,690.1 1073,688.4 1072,687.4 1071,687.0 1070,687.5 1069,688.0 1068,688.1 1067,687.9 1066,687.1 1065,687.1 1064,687.2 1063,688.0 1062,687.7 1061,689.8 1060,687.6 1059,687.8 1058,687.6 1057,689.1 1056,687.7 1055,688.0 1054,687.6 1053,688.1 1052,688.0 1051,688.2 1050,688.1 1049,688.6 1048,687.4 1047,687.0 1046,688.7 1045,687.6 1044,689.9 1043,690.4 1042,689.2 1041,687.3 1040,687.7 1039,687.8 1038,686.9 1037,688.0 1036,687.3 1035,687.9 1034,687.3 1033,687.5 1032,690.2 1031,687.5 1030,687.7 1029,689.9 1028,688.0 1027,687.7 1026,687.4 1025,688.0 1024,687.3 1023,687.3 1022,687.6 1021,687.6 1020,687.9 1019,687.3 1018,687.8 1017,687.8 1016,690.1 1015,687.7 1014,687.8 1013,687.4 1012,689.4 1011,688.8 1010,687.8 1009,688.0 1008,687.5 1007,687.7 1006,687.6 1005,687.6 1004,687.2 1003,687.1 1002,687.4 1001,687.2 1000,687.1 999,688.3 998,687.7 997,686.9 996,687.4 995,687.8 994,687.4 993,687.8 992,687.1 991,687.2 990,687.5 989,687.5 988,687.5 987,689.8 986,687.9 985,687.9 984,687.6 983,687.7 982,687.4 981,687.9 980,688.0 979,687.7 978,687.9 977,688.1 976,687.5 975,687.2 974,687.9 973,687.5 972,687.2 971,687.7 970,687.7 969,687.0 968,688.8 967,687.5 966,687.6 965,689.7 964,687.1 963,687.6 962,687.9 961,688.1 960,687.4 959,688.0 958,690.4 957,688.0 956,688.4 955,688.5 954,688.4 953,689.6 952,687.7 951,687.9 950,687.3 949,688.0 948,687.8 947,689.9 946,687.2 945,687.3 944,687.7 943,687.3 942,687.0 941,687.1 940,687.6 939,689.3 938,690.1 937,687.7 936,686.9 935,687.2 934,690.0 933,687.9 932,687.3 931,689.0 930,687.5 929,688.0 928,690.0 927,687.9 926,688.0 925,687.2 924,690.1 923,687.7 922,688.1 921,687.6 920,688.0 919,687.7 918,687.4 917,688.8 916,687.3 915,687.9 914,687.3 913,687.5 912,688.0 911,687.9 910,687.4 909,687.6 908,687.2 907,687.6 906,687.1 905,687.8 904,687.7 903,687.3 902,687.3 901,688.7 900,688.8 899,687.9 898,687.9 897,687.5 896,687.3 895,689.5 894,687.3 893,687.9 892,688.1 891,687.4 890,688.8 889,687.8 888,687.8 887,687.6 886,687.1 885,688.0 884,689.0 883,687.3 882,687.8 881,687.7 880,687.6 879,687.4 878,688.7 877,687.8 876,688.0 875,689.1 874,687.8 873,687.7 872,687.9 871,690.3 870,688.0 869,687.7 868,688.9 867,687.8 866,687.5 865,689.2 864,687.3 863,688.3 862,690.0 861,687.8 860,689.0 859,688.1 858,687.9 857,687.2 856,687.6 855,687.5 854,690.1 853,687.3 852,687.1 851,687.9 850,687.6 849,687.3 848,687.5 847,687.4 846,687.2 845,687.7 844,687.2 843,687.9 842,687.8 841,687.9 840,689.5 839,687.3 838,687.1 837,690.5 836,687.6 835,687.0 834,687.7 833,688.1 832,687.0 831,686.7 830,686.9 829,687.1 828,687.1 827,687.2 826,689.5 825,687.6 824,687.6 823,689.6 822,687.3 821,687.4 820,686.9 819,687.1 818,687.6 817,689.0 816,686.9 815,687.3 814,687.2 813,690.3 812,687.5 811,688.0 810,688.4 809,687.5 808,687.8 807,687.3 806,687.9 805,687.2 804,687.5 803,687.3 802,689.2 801,687.9 800,687.8 799,689.8 798,687.9 797,687.8 796,687.5 795,687.5 794,687.9 793,688.9 792,689.8 791,687.7 790,689.3 789,687.6 788,687.3 787,687.0 786,687.2 785,688.1 784,687.6 783,687.4 782,687.4 781,687.5 780,687.4 779,687.1 778,687.3 777,687.6 776,689.9 775,687.7 774,687.1 773,687.6 772,687.6 771,687.1 770,687.6 769,687.7 768,687.7 767,688.7 766,687.0 765,688.0 764,689.6 763,687.3 762,687.4 761,688.9 760,687.2 759,690.4 758,688.2 757,687.5 756,687.8 755,687.4 754,687.8 753,687.8 752,688.0 751,687.6 750,690.4 749,689.8 748,689.7 747,687.7 746,688.1 745,688.2 744,688.1 743,688.0 742,688.1 741,687.5 740,690.8 739,690.5 738,688.1 737,687.5 736,687.5 735,688.1 734,687.6 733,689.5 732,688.3 731,688.0 730,688.3 729,687.9 728,687.9 727,687.5 726,687.4 725,688.1 724,688.1 723,688.3 722,687.8 721,688.0 720,687.5 719,688.4 718,687.6 717,687.7 716,687.7 715,687.7 714,687.9 713,690.1 712,687.8 711,688.1 710,687.7 709,688.1 708,687.7 707,687.4 706,688.2 705,687.7 704,687.8 703,688.1 702,687.4 701,688.3 700,687.9 699,687.8 698,687.9 697,687.7 696,687.2 695,687.9 694,687.8 693,687.7 692,687.2 691,688.0 690,687.2 689,687.0 688,689.3 687,689.1 686,687.2 685,686.8 684,687.7 683,687.2 682,687.4 681,690.2 680,687.2 679,687.9 678,687.8 677,687.2 676,687.4 675,687.7 674,688.3 673,687.8 672,687.1 671,687.4 670,687.8 669,687.6 668,687.5 667,688.4 666,686.9 665,687.7 664,687.7 663,687.1 662,687.0 661,687.6 660,688.1 659,687.3 658,687.5 657,687.9 656,687.2 655,687.2 654,687.8 653,687.0 652,687.6 651,686.9 650,687.8 649,687.3 648,687.5 647,687.2 646,687.4 645,687.1 644,686.9 643,687.5 642,687.8 641,687.3 640,688.8 639,687.2 638,687.8 637,686.9 636,686.9 635,687.8 634,687.8 633,687.1 632,687.2 631,687.0 630,687.2 629,687.3 628,687.2 627,687.1 626,687.6 625,687.2 624,687.2 623,689.0 622,687.6 621,687.2 620,687.1 619,687.3 618,687.2 617,687.5 616,687.3 615,687.4 614,687.3 613,687.2 612,687.5 611,687.1 610,687.3 609,687.9 608,688.6 607,687.3 606,688.6 605,687.5 604,690.1 603,687.3 602,687.8 601,687.3 600,687.2 599,686.7 598,687.3 597,687.2 596,690.3 595,686.8 594,689.6 593,687.7 592,687.7 591,687.1 590,687.0 589,689.2 588,687.5 587,687.1 586,689.2 585,687.4 584,689.9 583,687.6 582,687.2 581,687.9 580,687.7 579,689.4 578,687.5 577,687.4 576,687.7 575,687.5 574,689.6 573,687.8 572,687.6 571,687.3 570,689.4 569,687.0 568,687.2 567,687.1 566,687.1 565,687.4 564,687.6 563,687.9 562,687.7 561,687.7 560,688.1 559,687.7 558,687.9 557,687.7 556,687.4 555,687.4 554,689.8 553,688.4 552,688.0 551,687.7 550,687.3 549,687.9 548,687.2 547,687.6 546,687.8 545,687.1 544,687.9 543,687.7 542,687.6 541,688.4 540,687.1 539,687.8 538,687.0 537,687.5 536,687.5 535,688.5 534,687.7 533,687.3 532,687.4 531,687.1 530,687.6 529,687.1 528,687.9 527,687.2 526,689.2 525,687.4 524,687.6 523,687.4 522,687.8 521,687.3 520,687.3 519,687.3 518,689.9 517,690.3 516,687.5 515,687.4 514,688.0 513,687.6 512,687.2 511,687.8 510,686.9 509,687.5 508,690.5 507,690.2 506,686.9 505,686.9 504,687.2 503,687.8 502,687.0 501,687.5 500,687.1 499,689.0 498,687.7 497,687.6 496,687.1 495,687.3 494,686.9 493,687.6 492,687.8 491,688.0 490,687.3 489,687.6 488,689.8 487,688.0 486,687.2 485,688.6 484,687.5 483,687.8 482,687.3 481,687.9 480,687.5 479,688.7 478,687.8 477,688.7 476,687.4 475,688.0 474,687.7 473,687.6 472,687.2 471,687.9 470,688.0 469,687.5 468,687.2 467,690.6 466,687.7 465,687.6 464,690.0 463,687.9 462,688.0 461,687.2 460,687.1 459,687.3 458,687.3 457,687.1 456,688.0 455,687.5 454,688.4 453,688.1 452,687.5 451,687.4 450,687.8 449,687.6 448,687.4 447,688.0 446,688.5 445,688.2 444,687.6 443,687.7 442,687.4 441,687.9 440,688.3 439,687.9 438,687.3 437,687.5 436,687.9 435,687.4 434,688.2 433,688.1 432,687.8 431,687.5 430,687.4 429,687.7 428,689.7 427,687.9 426,687.9 425,688.0 424,687.2 423,687.4 422,688.0 421,687.5 420,688.1 419,688.0 418,687.2 417,688.1 416,687.5 415,688.9 414,687.7 413,687.5 412,688.0 411,688.0 410,687.4 409,687.4 408,687.8 407,688.9 406,687.6 405,688.1 404,687.4 403,687.6 402,689.0 401,689.4 400,687.1 399,688.0 398,689.6 397,689.4 396,687.2 395,687.6 394,687.6 393,687.2 392,688.0 391,687.2 390,687.4 389,687.5 388,689.8 387,690.2 386,687.5 385,687.4 384,687.6 383,687.6 382,687.6 381,687.1 380,687.3 379,687.2 378,687.5 377,687.7 376,690.3 375,687.2 374,687.9 373,686.9 372,687.0 371,686.9 370,686.9 369,687.2 368,687.1 367,687.5 366,687.5 365,686.8 364,687.3 363,686.8 362,687.5 361,687.2 360,686.9 359,686.9 358,687.9 357,687.3 356,687.9 355,689.4 354,687.6 353,687.7 352,687.3 351,687.7 350,687.4 349,686.9 348,687.5 347,687.0 346,687.2 345,687.3 344,687.5 343,687.5 342,689.7 341,687.3 340,687.3 339,688.0 338,687.0 337,687.6 336,687.3 335,687.7 334,687.2 333,689.0 332,687.6 331,687.7 330,690.3 329,687.8 328,687.1 327,687.3 326,687.5 325,687.5 324,687.3 323,687.6 322,687.8 321,687.5 320,687.1 319,688.2 318,687.7 317,687.1 316,688.7 315,687.3 314,689.5 313,687.8 312,687.8 311,688.4 310,687.4 309,687.7 308,690.1 307,687.8 306,687.1 305,687.4 304,687.0 303,687.2 302,687.7 301,687.8 300,687.8 299,687.5 298,687.7 297,687.6 296,688.6 295,690.1 294,690.3 293,687.7 292,689.8 291,687.3 290,688.3 289,687.3 288,687.7 287,686.9 286,687.8 285,688.0 284,687.8 283,689.4 282,687.8 281,689.9 280,687.8 279,687.6 278,687.7 277,687.8 276,687.6 275,688.0 274,689.4 273,687.5 272,687.5 271,687.8 270,687.8 269,689.5 268,688.1 267,688.2 266,688.0 265,688.0 264,688.2 263,688.3 262,688.1 261,688.3 260,688.3 259,689.6 258,690.1 257,688.3 256,688.0 255,688.3 254,687.6 253,687.5 252,687.7 251,687.1 250,687.5 249,687.2 248,687.8 247,687.2 246,687.3 245,687.4 244,686.9 243,687.0 242,689.5 241,687.1 240,688.6 239,687.9 238,687.3 237,687.1 236,687.2 235,687.5 234,687.1 233,688.7 232,687.9 231,689.0 230,687.7 229,687.2 228,687.6 227,687.9 226,687.7 225,687.4 224,686.9 223,687.6 222,686.8 221,687.4 220,687.1 219,687.1 218,688.7 217,687.8 216,686.9 215,687.2 214,687.3 213,688.0 212,687.6 211,687.5 210,687.5 209,687.4 208,687.9 207,687.4 206,688.8 205,687.5 204,687.9 203,687.6 202,687.6 201,687.9 200,687.7 199,687.6 198,687.2 197,687.8 196,687.6 195,687.6 194,687.5 193,687.6 192,687.3 191,687.8 190,687.6 189,687.4 188,687.1 187,687.9 186,687.3 185,687.1 184,686.9 183,687.2 182,687.1 181,687.2 180,687.5 179,687.3 178,687.0 177,687.4 176,687.2 175,687.7 174,687.1 173,687.7 172,687.9 171,687.6 170,688.5 169,690.3 168,687.2 167,689.8 166,687.5 165,687.4 164,687.9 163,687.8 162,687.7 161,688.0 160,687.6 159,687.9 158,687.4 157,687.3 156,687.7 155,687.4 154,687.2 153,687.7 152,686.9 151,687.5 150,687.4 149,687.0 148,687.4 147,689.6 146,687.3 145,687.4 144,687.6 143,687.5 142,687.6 141,687.0 140,687.7 139,687.4 138,686.9 137,687.6 136,687.7 135,687.1 134,688.6 133,687.3 132,687.6 131,687.2 130,686.9 129,687.3 128,687.4 127,687.8 126,687.7 125,687.4 124,687.1 123,690.0 122,687.5 121,687.6 120,688.4 119,687.9 118,688.1 117,687.8 116,690.4 115,687.9 114,688.4 113,687.5 112,687.5 111,687.7 110,687.9 109,687.5 108,688.2 107,688.1 106,687.4 105,688.0 104,690.6 103,687.8 102,687.2 101,686.9 100,687.0 99,688.0 98,687.4 97,687.6 96,687.7 95,687.6 94,687.7 93,687.9 92,687.9 91,688.1 90,687.2 89,687.6 88,687.5 87,687.4 86,688.0 85,689.8 84,687.0 83,690.3 82,687.4 81,688.8 80,687.4 79,687.2 78,687.8 77,687.0 76,687.9 75,687.8 74,689.4 73,687.0 72,689.6 71,687.2 70,690.3 69,687.5 68,687.0 67,687.0 66,687.7 65,687.3 64,687.1 63,687.0 62,687.4 61,687.6 60,687.4 59,686.8 58,686.7 57,687.1 56,686.7 55,687.4 54,686.9 53,687.1 52,687.1 51,687.2 50,687.8 49,687.4 48,687.4 47,687.9 46,687.4 45,687.6 44,688.9 43,687.3 42,687.3 41,687.8" fill="#ff0000"/><polygon points="27,664 29,662.5 31,663 33,661.5 35,663 37,662 39,661.5 39,667.5 37,667 35,666.5 33,667.5 31,666 29,666.5 27,665" fill="#00ff00"/><polygon points="27,684.5 29,683 31,683.5 33,682.5 35,683.5 37,683 39,682.5 39,687.5 37,687 35,686.5 33,687.5 31,686.5 29,686.5 27,685.5" fill="#ff0000"/><rect x="16" y="656" width="1" height="40" fill="#00ffff"/><rect x="1345" y="656" width="1" height="40" fill="#00ffff"/><rect x="18" y="657" width="21" height="38" fill="none" stroke="#f0f0f0" stroke-width="2"/><polygon points="16,672 22,675 16,679" fill="#00e000"/><polygon points="16,380 22,383 16,386" fill="#00e000"/></svg><div class="a" style="left:1346px;top:141px;width:2px;height:572px;background:#fff"></div><div class="a" style="left:1348px;top:141px;width:1px;height:572px;background:#808080"></div><div class="a" style="left:1349px;top:141px;width:17px;height:572px;background-color:#fff;background-image:linear-gradient(45deg,#d4d0c8 25%,transparent 25%,transparent 75%,#d4d0c8 75%),linear-gradient(45deg,#d4d0c8 25%,transparent 25%,transparent 75%,#d4d0c8 75%);background-size:2px 2px;background-position:0 0,1px 1px"></div><div class="a" style="left:1349px;top:141px;width:17px;height:15px;background:#404040"></div><div class="a" style="left:1349px;top:141px;width:16px;height:14px;background:#d4d0c8"></div><div class="a" style="left:1350px;top:142px;width:15px;height:13px;background:#808080"></div><div class="a" style="left:1350px;top:142px;width:14px;height:12px;background:#fff"></div><div class="a" style="left:1351px;top:143px;width:13px;height:11px;background:#d4d0c8"></div><svg class="a" style="left:0;top:0" width="1366" height="768"><polygon points="1353.5,150.5 1361.5,150.5 1357.5,146.5" fill="#000"/></svg><div class="a" style="left:1349px;top:313px;width:17px;height:228px;background:#404040"></div><div class="a" style="left:1349px;top:313px;width:16px;height:227px;background:#d4d0c8"></div><div class="a" style="left:1350px;top:314px;width:15px;height:226px;background:#808080"></div><div class="a" style="left:1350px;top:314px;width:14px;height:225px;background:#fff"></div><div class="a" style="left:1351px;top:315px;width:13px;height:224px;background:#d4d0c8"></div><div class="a" style="left:1349px;top:698px;width:17px;height:15px;background:#404040"></div><div class="a" style="left:1349px;top:698px;width:16px;height:14px;background:#d4d0c8"></div><div class="a" style="left:1350px;top:699px;width:15px;height:13px;background:#808080"></div><div class="a" style="left:1350px;top:699px;width:14px;height:12px;background:#fff"></div><div class="a" style="left:1351px;top:700px;width:13px;height:11px;background:#d4d0c8"></div><svg class="a" style="left:0;top:0" width="1366" height="768"><polygon points="1353.5,703.5 1361.5,703.5 1357.5,707.5" fill="#000"/></svg><div class="a" style="left:0px;top:713px;width:1366px;height:1px;background:#808080"></div><div class="a" style="left:0px;top:714px;width:1366px;height:16px;background-color:#fff;background-image:linear-gradient(45deg,#d4d0c8 25%,transparent 25%,transparent 75%,#d4d0c8 75%),linear-gradient(45deg,#d4d0c8 25%,transparent 25%,transparent 75%,#d4d0c8 75%);background-size:2px 2px;background-position:0 0,1px 1px"></div><div class="a" style="left:0px;top:714px;width:16px;height:16px;background:#404040"></div><div class="a" style="left:0px;top:714px;width:15px;height:15px;background:#d4d0c8"></div><div class="a" style="left:1px;top:715px;width:14px;height:14px;background:#808080"></div><div class="a" style="left:1px;top:715px;width:13px;height:13px;background:#fff"></div><div class="a" style="left:2px;top:716px;width:12px;height:12px;background:#d4d0c8"></div><svg class="a" style="left:0;top:0" width="1366" height="768"><polygon points="10.0,718.0 10.0,726.0 6.0,722.0" fill="#000"/></svg><div class="a" style="left:16px;top:714px;width:23px;height:16px;background:#404040"></div><div class="a" style="left:16px;top:714px;width:22px;height:15px;background:#d4d0c8"></div><div class="a" style="left:17px;top:715px;width:21px;height:14px;background:#808080"></div><div class="a" style="left:17px;top:715px;width:20px;height:13px;background:#fff"></div><div class="a" style="left:18px;top:716px;width:19px;height:12px;background:#d4d0c8"></div><div class="a" style="left:1350px;top:714px;width:16px;height:16px;background:#404040"></div><div class="a" style="left:1350px;top:714px;width:15px;height:15px;background:#d4d0c8"></div><div class="a" style="left:1351px;top:715px;width:14px;height:14px;background:#808080"></div><div class="a" style="left:1351px;top:715px;width:13px;height:13px;background:#fff"></div><div class="a" style="left:1352px;top:716px;width:12px;height:12px;background:#d4d0c8"></div><svg class="a" style="left:0;top:0" width="1366" height="768"><polygon points="1356.0,718.0 1356.0,726.0 1360.0,722.0" fill="#000"/></svg><div class="a" style="left:0px;top:730px;width:1366px;height:38px;background:#d4d0c8"></div><div class="a" style="left:0px;top:731px;width:70px;height:18px;background:#fff"></div><div class="a" style="left:0px;top:731px;width:69px;height:17px;background:#808080"></div><div class="a" style="left:1px;top:732px;width:68px;height:16px;background:#d4d0c8"></div><div class="t" style="left:14px;top:736px;font-size:11px;color:#000;font-weight:normal;">Stereo</div><div class="a" style="left:72px;top:731px;width:118px;height:18px;background:#fff"></div><div class="a" style="left:72px;top:731px;width:117px;height:17px;background:#808080"></div><div class="a" style="left:73px;top:732px;width:116px;height:16px;background:#d4d0c8"></div><div class="t" style="left:105px;top:736px;font-size:11px;color:#000;font-weight:normal;">2:18.236</div><div class="a" style="left:191px;top:731px;width:299px;height:18px;background:#fff"></div><div class="a" style="left:191px;top:731px;width:298px;height:17px;background:#808080"></div><div class="a" style="left:192px;top:732px;width:297px;height:16px;background:#d4d0c8"></div><div class="t" style="left:265px;top:736px;font-size:11px;color:#000;font-weight:normal;">0.000 to 2:18.236 (2:18.236)</div><div class="a" style="left:492px;top:731px;width:119px;height:18px;background:#fff"></div><div class="a" style="left:492px;top:731px;width:118px;height:17px;background:#808080"></div><div class="a" style="left:493px;top:732px;width:117px;height:16px;background:#d4d0c8"></div><div class="t" style="left:537px;top:736px;font-size:11px;color:#000;font-weight:normal;">0.000</div><div class="a" style="left:612px;top:731px;width:754px;height:18px;background:#fff"></div><div class="a" style="left:612px;top:731px;width:753px;height:17px;background:#808080"></div><div class="a" style="left:613px;top:732px;width:752px;height:16px;background:#d4d0c8"></div><div class="a" style="left:0px;top:751px;width:70px;height:17px;background:#fff"></div><div class="a" style="left:0px;top:751px;width:69px;height:16px;background:#808080"></div><div class="a" style="left:1px;top:752px;width:68px;height:15px;background:#d4d0c8"></div><div class="t" style="left:14px;top:755px;font-size:11px;color:#000;font-weight:normal;">Modified</div><div class="a" style="left:72px;top:751px;width:118px;height:17px;background:#fff"></div><div class="a" style="left:72px;top:751px;width:117px;height:16px;background:#808080"></div><div class="a" style="left:73px;top:752px;width:116px;height:15px;background:#d4d0c8"></div><div class="t" style="left:113px;top:755px;font-size:11px;color:#000;font-weight:normal;">2.361</div><div class="a" style="left:191px;top:751px;width:1175px;height:17px;background:#fff"></div><div class="a" style="left:191px;top:751px;width:1174px;height:16px;background:#808080"></div><div class="a" style="left:192px;top:752px;width:1173px;height:15px;background:#d4d0c8"></div><div class="t" style="left:194px;top:755px;font-size:11px;color:#000;font-weight:normal;letter-spacing:-0.1px">Wave PCM signed 16 bit, 44100 Hz, 1411 kbps, stereo</div><svg class="a" style="left:58px;top:738px" width="9" height="5"><polygon points="0,0 9,0 4.5,5" fill="#000"/></svg><svg class="a" style="left:179px;top:738px" width="9" height="5"><polygon points="0,0 9,0 4.5,5" fill="#000"/></svg><svg class="a" style="left:478px;top:738px" width="9" height="5"><polygon points="0,0 9,0 4.5,5" fill="#000"/></svg><svg class="a" style="left:179px;top:758px" width="9" height="5"><polygon points="0,0 9,0 4.5,5" fill="#000"/></svg><div class="a" style="left:16px;top:141px;width:60px;height:241px;overflow:hidden"><div class="t" style="left:7px;top:10px;color:#d8d8e8;font-size:11px">0.4</div><div class="t" style="left:7px;top:39px;color:#d8d8e8;font-size:11px">0.3</div><div class="t" style="left:7px;top:67px;color:#d8d8e8;font-size:11px">0.2</div><div class="t" style="left:7px;top:95px;color:#d8d8e8;font-size:11px">0.1</div><div class="t" style="left:7px;top:123px;color:#d8d8e8;font-size:11px">0.0</div><div class="t" style="left:6px;top:152px;color:#d8d8e8;font-size:11px">-0.1</div><div class="t" style="left:6px;top:180px;color:#d8d8e8;font-size:11px">-0.2</div><div class="t" style="left:6px;top:208px;color:#d8d8e8;font-size:11px">-0.3</div><div class="t" style="left:6px;top:237px;color:#d8d8e8;font-size:11px">-0.4</div></div><div class="a" style="left:16px;top:384px;width:60px;height:240px;overflow:hidden"><div class="t" style="left:7px;top:9px;color:#d8d8e8;font-size:11px">0.4</div><div class="t" style="left:7px;top:38px;color:#d8d8e8;font-size:11px">0.3</div><div class="t" style="left:7px;top:66px;color:#d8d8e8;font-size:11px">0.2</div><div class="t" style="left:7px;top:94px;color:#d8d8e8;font-size:11px">0.1</div><div class="t" style="left:7px;top:122px;color:#d8d8e8;font-size:11px">0.0</div><div class="t" style="left:6px;top:151px;color:#d8d8e8;font-size:11px">-0.1</div><div class="t" style="left:6px;top:179px;color:#d8d8e8;font-size:11px">-0.2</div><div class="t" style="left:6px;top:207px;color:#d8d8e8;font-size:11px">-0.3</div><div class="t" style="left:6px;top:236px;color:#d8d8e8;font-size:11px">-0.4</div></div></body></html>
